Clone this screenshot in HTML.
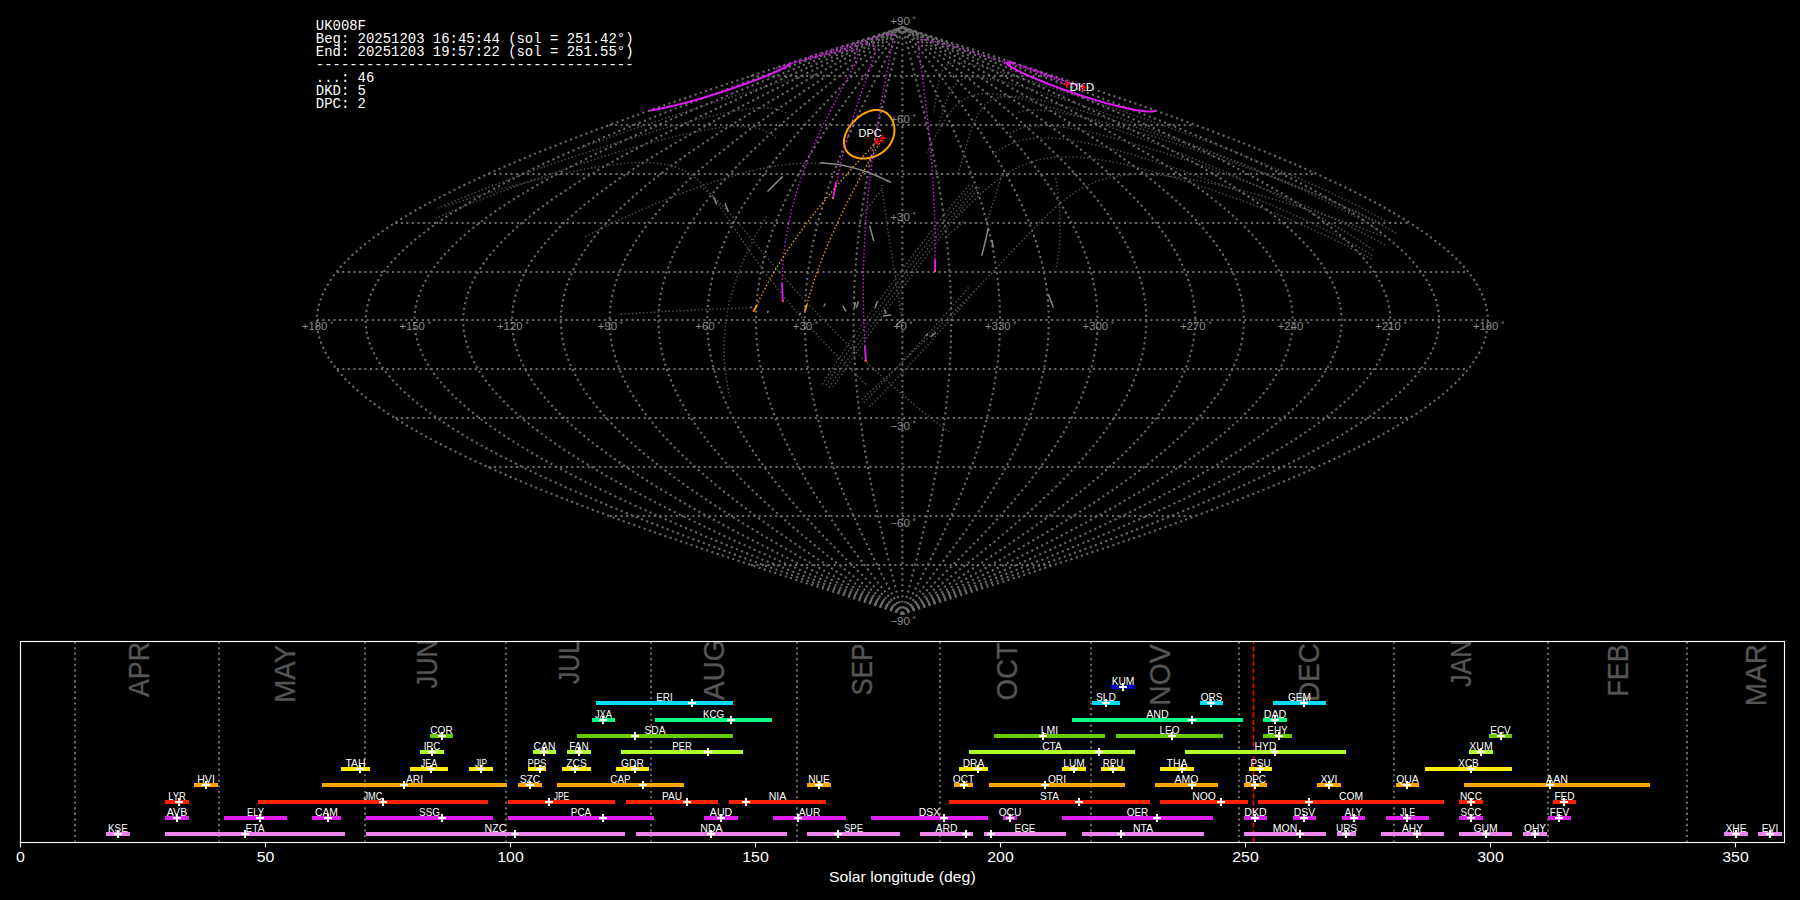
<!DOCTYPE html>
<html><head><meta charset="utf-8"><style>
html,body{margin:0;padding:0;background:#000;width:1800px;height:900px;overflow:hidden}
svg{display:block}
</style></head><body>
<svg width="1800" height="900" viewBox="0 0 1800 900">
<rect width="1800" height="900" fill="#000"/>
<g fill="none" stroke="#6c6c6c" stroke-width="2.083" stroke-dasharray="2.08 3.44">
<path d="M750.9 565L1053.9 565"/>
<path d="M609.6 516L1195.2 516"/>
<path d="M488.4 467L1316.4 467"/>
<path d="M395.3 418L1409.5 418"/>
<path d="M336.8 369L1468 369"/>
<path d="M316.9 320L1487.9 320"/>
<path d="M336.8 272L1468 272"/>
<path d="M395.3 223L1409.5 223"/>
<path d="M488.4 174L1316.4 174"/>
<path d="M609.6 125L1195.2 125"/>
<path d="M750.9 76L1053.9 76"/>
<path d="M902.4 613.9L917.7 609L933 604.1L948.3 599.2L963.6 594.3L978.8 589.5L994 584.6L1009.1 579.7L1024.1 574.8L1039.1 569.9L1053.9 565L1068.7 560.1L1083.3 555.2L1097.9 550.3L1112.2 545.4L1126.5 540.5L1140.6 535.7L1154.5 530.8L1168.2 525.9L1181.8 521L1195.2 516.1L1208.3 511.2L1221.3 506.3L1234.1 501.4L1246.6 496.5L1258.9 491.6L1270.9 486.8L1282.7 481.9L1294.2 477L1305.5 472.1L1316.4 467.2L1327.1 462.3L1337.5 457.4L1347.6 452.5L1357.5 447.6L1366.9 442.8L1376.1 437.9L1385 433L1393.5 428.1L1401.7 423.2L1409.5 418.3L1417 413.4L1424.1 408.5L1430.9 403.6L1437.3 398.7L1443.4 393.9L1449 389L1454.4 384.1L1459.3 379.2L1463.8 374.3L1468 369.4L1471.8 364.5L1475.1 359.6L1478.1 354.7L1480.7 349.8L1482.9 344.9L1484.7 340.1L1486.1 335.2L1487.1 330.3L1487.7 325.4L1487.9 320.5L1487.7 315.6L1487.1 310.7L1486.1 305.8L1484.7 300.9L1482.9 296.1L1480.7 291.2L1478.1 286.3L1475.1 281.4L1471.8 276.5L1468 271.6L1463.8 266.7L1459.3 261.8L1454.4 256.9L1449 252L1443.4 247.2L1437.3 242.3L1430.9 237.4L1424.1 232.5L1417 227.6L1409.5 222.7L1401.7 217.8L1393.5 212.9L1385 208L1376.1 203.1L1366.9 198.2L1357.5 193.4L1347.6 188.5L1337.5 183.6L1327.1 178.7L1316.4 173.8L1305.5 168.9L1294.2 164L1282.7 159.1L1270.9 154.2L1258.9 149.4L1246.6 144.5L1234.1 139.6L1221.3 134.7L1208.3 129.8L1195.2 124.9L1181.8 120L1168.2 115.1L1154.5 110.2L1140.6 105.3L1126.5 100.5L1112.2 95.6L1097.9 90.7L1083.3 85.8L1068.7 80.9L1053.9 76L1039.1 71.1L1024.1 66.2L1009.1 61.3L994 56.4L978.8 51.6L963.6 46.7L948.3 41.8L933 36.9L917.7 32L902.4 27.1"/>
<path d="M902.4 613.9L916.5 609L930.5 604.1L944.5 599.2L958.5 594.3L972.5 589.5L986.4 584.6L1000.2 579.7L1014 574.8L1027.7 569.9L1041.3 565L1054.8 560.1L1068.3 555.2L1081.6 550.3L1094.8 545.4L1107.8 540.5L1120.7 535.7L1133.5 530.8L1146.1 525.9L1158.5 521L1170.8 516.1L1182.8 511.2L1194.7 506.3L1206.4 501.4L1217.9 496.5L1229.1 491.6L1240.2 486.8L1251 481.9L1261.6 477L1271.9 472.1L1281.9 467.2L1291.7 462.3L1301.3 457.4L1310.5 452.5L1319.5 447.6L1328.2 442.8L1336.6 437.9L1344.7 433L1352.6 428.1L1360.1 423.2L1367.2 418.3L1374.1 413.4L1380.6 408.5L1386.9 403.6L1392.7 398.7L1398.3 393.9L1403.5 389L1408.4 384.1L1412.9 379.2L1417 374.3L1420.9 369.4L1424.3 364.5L1427.4 359.6L1430.2 354.7L1432.5 349.8L1434.6 344.9L1436.2 340.1L1437.5 335.2L1438.4 330.3L1439 325.4L1439.1 320.5L1439 315.6L1438.4 310.7L1437.5 305.8L1436.2 300.9L1434.6 296.1L1432.5 291.2L1430.2 286.3L1427.4 281.4L1424.3 276.5L1420.9 271.6L1417 266.7L1412.9 261.8L1408.4 256.9L1403.5 252L1398.3 247.2L1392.7 242.3L1386.9 237.4L1380.6 232.5L1374.1 227.6L1367.2 222.7L1360.1 217.8L1352.6 212.9L1344.7 208L1336.6 203.1L1328.2 198.2L1319.5 193.4L1310.5 188.5L1301.3 183.6L1291.7 178.7L1281.9 173.8L1271.9 168.9L1261.6 164L1251 159.1L1240.2 154.2L1229.1 149.4L1217.9 144.5L1206.4 139.6L1194.7 134.7L1182.8 129.8L1170.8 124.9L1158.5 120L1146.1 115.1L1133.5 110.2L1120.7 105.3L1107.8 100.5L1094.8 95.6L1081.6 90.7L1068.3 85.8L1054.8 80.9L1041.3 76L1027.7 71.1L1014 66.2L1000.2 61.3L986.4 56.4L972.5 51.6L958.5 46.7L944.5 41.8L930.5 36.9L916.5 32L902.4 27.1"/>
<path d="M902.4 613.9L915.2 609L927.9 604.1L940.7 599.2L953.4 594.3L966.1 589.5L978.7 584.6L991.3 579.7L1003.9 574.8L1016.3 569.9L1028.7 565L1041 560.1L1053.2 555.2L1065.3 550.3L1077.3 545.4L1089.1 540.5L1100.9 535.7L1112.5 530.8L1123.9 525.9L1135.2 521L1146.4 516.1L1157.4 511.2L1168.2 506.3L1178.8 501.4L1189.2 496.5L1199.4 491.6L1209.5 486.8L1219.3 481.9L1228.9 477L1238.3 472.1L1247.4 467.2L1256.3 462.3L1265 457.4L1273.4 452.5L1281.6 447.6L1289.5 442.8L1297.2 437.9L1304.5 433L1311.6 428.1L1318.4 423.2L1325 418.3L1331.2 413.4L1337.2 408.5L1342.8 403.6L1348.2 398.7L1353.2 393.9L1357.9 389L1362.4 384.1L1366.5 379.2L1370.3 374.3L1373.7 369.4L1376.9 364.5L1379.7 359.6L1382.2 354.7L1384.3 349.8L1386.2 344.9L1387.7 340.1L1388.8 335.2L1389.7 330.3L1390.2 325.4L1390.3 320.5L1390.2 315.6L1389.7 310.7L1388.8 305.8L1387.7 300.9L1386.2 296.1L1384.3 291.2L1382.2 286.3L1379.7 281.4L1376.9 276.5L1373.7 271.6L1370.3 266.7L1366.5 261.8L1362.4 256.9L1357.9 252L1353.2 247.2L1348.2 242.3L1342.8 237.4L1337.2 232.5L1331.2 227.6L1325 222.7L1318.4 217.8L1311.6 212.9L1304.5 208L1297.2 203.1L1289.5 198.2L1281.6 193.4L1273.4 188.5L1265 183.6L1256.3 178.7L1247.4 173.8L1238.3 168.9L1228.9 164L1219.3 159.1L1209.5 154.2L1199.4 149.4L1189.2 144.5L1178.8 139.6L1168.2 134.7L1157.4 129.8L1146.4 124.9L1135.2 120L1123.9 115.1L1112.5 110.2L1100.9 105.3L1089.1 100.5L1077.3 95.6L1065.3 90.7L1053.2 85.8L1041 80.9L1028.7 76L1016.3 71.1L1003.9 66.2L991.3 61.3L978.7 56.4L966.1 51.6L953.4 46.7L940.7 41.8L927.9 36.9L915.2 32L902.4 27.1"/>
<path d="M902.4 613.9L913.9 609L925.4 604.1L936.9 599.2L948.3 594.3L959.7 589.5L971.1 584.6L982.4 579.7L993.7 574.8L1004.9 569.9L1016.1 565L1027.1 560.1L1038.1 555.2L1049 550.3L1059.8 545.4L1070.5 540.5L1081 535.7L1091.5 530.8L1101.8 525.9L1111.9 521L1122 516.1L1131.9 511.2L1141.6 506.3L1151.1 501.4L1160.5 496.5L1169.7 491.6L1178.8 486.8L1187.6 481.9L1196.3 477L1204.7 472.1L1212.9 467.2L1221 462.3L1228.8 457.4L1236.3 452.5L1243.7 447.6L1250.8 442.8L1257.7 437.9L1264.3 433L1270.7 428.1L1276.8 423.2L1282.7 418.3L1288.3 413.4L1293.7 408.5L1298.8 403.6L1303.6 398.7L1308.1 393.9L1312.4 389L1316.4 384.1L1320.1 379.2L1323.5 374.3L1326.6 369.4L1329.4 364.5L1332 359.6L1334.2 354.7L1336.1 349.8L1337.8 344.9L1339.1 340.1L1340.2 335.2L1341 330.3L1341.4 325.4L1341.6 320.5L1341.4 315.6L1341 310.7L1340.2 305.8L1339.1 300.9L1337.8 296.1L1336.1 291.2L1334.2 286.3L1332 281.4L1329.4 276.5L1326.6 271.6L1323.5 266.7L1320.1 261.8L1316.4 256.9L1312.4 252L1308.1 247.2L1303.6 242.3L1298.8 237.4L1293.7 232.5L1288.3 227.6L1282.7 222.7L1276.8 217.8L1270.7 212.9L1264.3 208L1257.7 203.1L1250.8 198.2L1243.7 193.4L1236.3 188.5L1228.8 183.6L1221 178.7L1212.9 173.8L1204.7 168.9L1196.3 164L1187.6 159.1L1178.8 154.2L1169.7 149.4L1160.5 144.5L1151.1 139.6L1141.6 134.7L1131.9 129.8L1122 124.9L1111.9 120L1101.8 115.1L1091.5 110.2L1081 105.3L1070.5 100.5L1059.8 95.6L1049 90.7L1038.1 85.8L1027.1 80.9L1016.1 76L1004.9 71.1L993.7 66.2L982.4 61.3L971.1 56.4L959.7 51.6L948.3 46.7L936.9 41.8L925.4 36.9L913.9 32L902.4 27.1"/>
<path d="M902.4 613.9L912.6 609L922.8 604.1L933 599.2L943.2 594.3L953.4 589.5L963.5 584.6L973.5 579.7L983.6 574.8L993.5 569.9L1003.4 565L1013.3 560.1L1023 555.2L1032.7 550.3L1042.3 545.4L1051.8 540.5L1061.2 535.7L1070.5 530.8L1079.6 525.9L1088.7 521L1097.6 516.1L1106.4 511.2L1115 506.3L1123.5 501.4L1131.8 496.5L1140 491.6L1148.1 486.8L1155.9 481.9L1163.6 477L1171.1 472.1L1178.4 467.2L1185.6 462.3L1192.5 457.4L1199.2 452.5L1205.8 447.6L1212.1 442.8L1218.2 437.9L1224.1 433L1229.8 428.1L1235.2 423.2L1240.5 418.3L1245.5 413.4L1250.2 408.5L1254.7 403.6L1259 398.7L1263 393.9L1266.8 389L1270.4 384.1L1273.7 379.2L1276.7 374.3L1279.5 369.4L1282 364.5L1284.2 359.6L1286.2 354.7L1288 349.8L1289.4 344.9L1290.6 340.1L1291.6 335.2L1292.2 330.3L1292.6 325.4L1292.8 320.5L1292.6 315.6L1292.2 310.7L1291.6 305.8L1290.6 300.9L1289.4 296.1L1288 291.2L1286.2 286.3L1284.2 281.4L1282 276.5L1279.5 271.6L1276.7 266.7L1273.7 261.8L1270.4 256.9L1266.8 252L1263 247.2L1259 242.3L1254.7 237.4L1250.2 232.5L1245.5 227.6L1240.5 222.7L1235.2 217.8L1229.8 212.9L1224.1 208L1218.2 203.1L1212.1 198.2L1205.8 193.4L1199.2 188.5L1192.5 183.6L1185.6 178.7L1178.4 173.8L1171.1 168.9L1163.6 164L1155.9 159.1L1148.1 154.2L1140 149.4L1131.8 144.5L1123.5 139.6L1115 134.7L1106.4 129.8L1097.6 124.9L1088.7 120L1079.6 115.1L1070.5 110.2L1061.2 105.3L1051.8 100.5L1042.3 95.6L1032.7 90.7L1023 85.8L1013.3 80.9L1003.4 76L993.5 71.1L983.6 66.2L973.5 61.3L963.5 56.4L953.4 51.6L943.2 46.7L933 41.8L922.8 36.9L912.6 32L902.4 27.1"/>
<path d="M902.4 613.9L911.3 609L920.3 604.1L929.2 599.2L938.1 594.3L947 589.5L955.8 584.6L964.6 579.7L973.4 574.8L982.1 569.9L990.8 565L999.4 560.1L1007.9 555.2L1016.4 550.3L1024.8 545.4L1033.1 540.5L1041.3 535.7L1049.4 530.8L1057.5 525.9L1065.4 521L1073.2 516.1L1080.9 511.2L1088.4 506.3L1095.9 501.4L1103.2 496.5L1110.3 491.6L1117.4 486.8L1124.2 481.9L1131 477L1137.5 472.1L1143.9 467.2L1150.2 462.3L1156.2 457.4L1162.1 452.5L1167.8 447.6L1173.4 442.8L1178.7 437.9L1183.9 433L1188.9 428.1L1193.6 423.2L1198.2 418.3L1202.6 413.4L1206.7 408.5L1210.7 403.6L1214.4 398.7L1218 393.9L1221.3 389L1224.4 384.1L1227.2 379.2L1229.9 374.3L1232.3 369.4L1234.5 364.5L1236.5 359.6L1238.2 354.7L1239.8 349.8L1241 344.9L1242.1 340.1L1242.9 335.2L1243.5 330.3L1243.8 325.4L1244 320.5L1243.8 315.6L1243.5 310.7L1242.9 305.8L1242.1 300.9L1241 296.1L1239.8 291.2L1238.2 286.3L1236.5 281.4L1234.5 276.5L1232.3 271.6L1229.9 266.7L1227.2 261.8L1224.4 256.9L1221.3 252L1218 247.2L1214.4 242.3L1210.7 237.4L1206.7 232.5L1202.6 227.6L1198.2 222.7L1193.6 217.8L1188.9 212.9L1183.9 208L1178.7 203.1L1173.4 198.2L1167.8 193.4L1162.1 188.5L1156.2 183.6L1150.2 178.7L1143.9 173.8L1137.5 168.9L1131 164L1124.2 159.1L1117.4 154.2L1110.3 149.4L1103.2 144.5L1095.9 139.6L1088.4 134.7L1080.9 129.8L1073.2 124.9L1065.4 120L1057.5 115.1L1049.4 110.2L1041.3 105.3L1033.1 100.5L1024.8 95.6L1016.4 90.7L1007.9 85.8L999.4 80.9L990.8 76L982.1 71.1L973.4 66.2L964.6 61.3L955.8 56.4L947 51.6L938.1 46.7L929.2 41.8L920.3 36.9L911.3 32L902.4 27.1"/>
<path d="M902.4 613.9L910.1 609L917.7 604.1L925.4 599.2L933 594.3L940.6 589.5L948.2 584.6L955.8 579.7L963.3 574.8L970.7 569.9L978.2 565L985.6 560.1L992.9 555.2L1000.1 550.3L1007.3 545.4L1014.4 540.5L1021.5 535.7L1028.4 530.8L1035.3 525.9L1042.1 521L1048.8 516.1L1055.4 511.2L1061.9 506.3L1068.2 501.4L1074.5 496.5L1080.6 491.6L1086.6 486.8L1092.5 481.9L1098.3 477L1103.9 472.1L1109.4 467.2L1114.8 462.3L1120 457.4L1125 452.5L1129.9 447.6L1134.7 442.8L1139.3 437.9L1143.7 433L1147.9 428.1L1152 423.2L1155.9 418.3L1159.7 413.4L1163.3 408.5L1166.6 403.6L1169.9 398.7L1172.9 393.9L1175.7 389L1178.4 384.1L1180.8 379.2L1183.1 374.3L1185.2 369.4L1187.1 364.5L1188.8 359.6L1190.3 354.7L1191.6 349.8L1192.7 344.9L1193.6 340.1L1194.3 335.2L1194.8 330.3L1195.1 325.4L1195.2 320.5L1195.1 315.6L1194.8 310.7L1194.3 305.8L1193.6 300.9L1192.7 296.1L1191.6 291.2L1190.3 286.3L1188.8 281.4L1187.1 276.5L1185.2 271.6L1183.1 266.7L1180.8 261.8L1178.4 256.9L1175.7 252L1172.9 247.2L1169.9 242.3L1166.6 237.4L1163.3 232.5L1159.7 227.6L1155.9 222.7L1152 217.8L1147.9 212.9L1143.7 208L1139.3 203.1L1134.7 198.2L1129.9 193.4L1125 188.5L1120 183.6L1114.8 178.7L1109.4 173.8L1103.9 168.9L1098.3 164L1092.5 159.1L1086.6 154.2L1080.6 149.4L1074.5 144.5L1068.2 139.6L1061.9 134.7L1055.4 129.8L1048.8 124.9L1042.1 120L1035.3 115.1L1028.4 110.2L1021.5 105.3L1014.4 100.5L1007.3 95.6L1000.1 90.7L992.9 85.8L985.6 80.9L978.2 76L970.7 71.1L963.3 66.2L955.8 61.3L948.2 56.4L940.6 51.6L933 46.7L925.4 41.8L917.7 36.9L910.1 32L902.4 27.1"/>
<path d="M902.4 613.9L908.8 609L915.2 604.1L921.5 599.2L927.9 594.3L934.2 589.5L940.6 584.6L946.9 579.7L953.1 574.8L959.4 569.9L965.5 565L971.7 560.1L977.8 555.2L983.8 550.3L989.8 545.4L995.8 540.5L1001.6 535.7L1007.4 530.8L1013.2 525.9L1018.8 521L1024.4 516.1L1029.9 511.2L1035.3 506.3L1040.6 501.4L1045.8 496.5L1050.9 491.6L1055.9 486.8L1060.8 481.9L1065.7 477L1070.3 472.1L1074.9 467.2L1079.4 462.3L1083.7 457.4L1087.9 452.5L1092 447.6L1096 442.8L1099.8 437.9L1103.5 433L1107 428.1L1110.4 423.2L1113.7 418.3L1116.8 413.4L1119.8 408.5L1122.6 403.6L1125.3 398.7L1127.8 393.9L1130.2 389L1132.4 384.1L1134.4 379.2L1136.3 374.3L1138.1 369.4L1139.6 364.5L1141 359.6L1142.3 354.7L1143.4 349.8L1144.3 344.9L1145 340.1L1145.6 335.2L1146 330.3L1146.3 325.4L1146.4 320.5L1146.3 315.6L1146 310.7L1145.6 305.8L1145 300.9L1144.3 296.1L1143.4 291.2L1142.3 286.3L1141 281.4L1139.6 276.5L1138.1 271.6L1136.3 266.7L1134.4 261.8L1132.4 256.9L1130.2 252L1127.8 247.2L1125.3 242.3L1122.6 237.4L1119.8 232.5L1116.8 227.6L1113.7 222.7L1110.4 217.8L1107 212.9L1103.5 208L1099.8 203.1L1096 198.2L1092 193.4L1087.9 188.5L1083.7 183.6L1079.4 178.7L1074.9 173.8L1070.3 168.9L1065.7 164L1060.8 159.1L1055.9 154.2L1050.9 149.4L1045.8 144.5L1040.6 139.6L1035.3 134.7L1029.9 129.8L1024.4 124.9L1018.8 120L1013.2 115.1L1007.4 110.2L1001.6 105.3L995.8 100.5L989.8 95.6L983.8 90.7L977.8 85.8L971.7 80.9L965.5 76L959.4 71.1L953.1 66.2L946.9 61.3L940.6 56.4L934.2 51.6L927.9 46.7L921.5 41.8L915.2 36.9L908.8 32L902.4 27.1"/>
<path d="M902.4 613.9L907.5 609L912.6 604.1L917.7 599.2L922.8 594.3L927.9 589.5L932.9 584.6L938 579.7L943 574.8L948 569.9L952.9 565L957.8 560.1L962.7 555.2L967.6 550.3L972.3 545.4L977.1 540.5L981.8 535.7L986.4 530.8L991 525.9L995.5 521L1000 516.1L1004.4 511.2L1008.7 506.3L1013 501.4L1017.1 496.5L1021.2 491.6L1025.2 486.8L1029.2 481.9L1033 477L1036.8 472.1L1040.4 467.2L1044 462.3L1047.4 457.4L1050.8 452.5L1054.1 447.6L1057.2 442.8L1060.3 437.9L1063.3 433L1066.1 428.1L1068.8 423.2L1071.4 418.3L1073.9 413.4L1076.3 408.5L1078.6 403.6L1080.7 398.7L1082.7 393.9L1084.6 389L1086.4 384.1L1088 379.2L1089.5 374.3L1090.9 369.4L1092.2 364.5L1093.3 359.6L1094.3 354.7L1095.2 349.8L1095.9 344.9L1096.5 340.1L1097 335.2L1097.3 330.3L1097.5 325.4L1097.6 320.5L1097.5 315.6L1097.3 310.7L1097 305.8L1096.5 300.9L1095.9 296.1L1095.2 291.2L1094.3 286.3L1093.3 281.4L1092.2 276.5L1090.9 271.6L1089.5 266.7L1088 261.8L1086.4 256.9L1084.6 252L1082.7 247.2L1080.7 242.3L1078.6 237.4L1076.3 232.5L1073.9 227.6L1071.4 222.7L1068.8 217.8L1066.1 212.9L1063.3 208L1060.3 203.1L1057.2 198.2L1054.1 193.4L1050.8 188.5L1047.4 183.6L1044 178.7L1040.4 173.8L1036.8 168.9L1033 164L1029.2 159.1L1025.2 154.2L1021.2 149.4L1017.1 144.5L1013 139.6L1008.7 134.7L1004.4 129.8L1000 124.9L995.5 120L991 115.1L986.4 110.2L981.8 105.3L977.1 100.5L972.3 95.6L967.6 90.7L962.7 85.8L957.8 80.9L952.9 76L948 71.1L943 66.2L938 61.3L932.9 56.4L927.9 51.6L922.8 46.7L917.7 41.8L912.6 36.9L907.5 32L902.4 27.1"/>
<path d="M902.4 613.9L906.2 609L910.1 604.1L913.9 599.2L917.7 594.3L921.5 589.5L925.3 584.6L929.1 579.7L932.8 574.8L936.6 569.9L940.3 565L944 560.1L947.6 555.2L951.3 550.3L954.9 545.4L958.4 540.5L961.9 535.7L965.4 530.8L968.9 525.9L972.2 521L975.6 516.1L978.9 511.2L982.1 506.3L985.3 501.4L988.4 496.5L991.5 491.6L994.5 486.8L997.5 481.9L1000.4 477L1003.2 472.1L1005.9 467.2L1008.6 462.3L1011.2 457.4L1013.7 452.5L1016.2 447.6L1018.5 442.8L1020.8 437.9L1023 433L1025.2 428.1L1027.2 423.2L1029.2 418.3L1031 413.4L1032.8 408.5L1034.5 403.6L1036.1 398.7L1037.6 393.9L1039.1 389L1040.4 384.1L1041.6 379.2L1042.8 374.3L1043.8 369.4L1044.7 364.5L1045.6 359.6L1046.3 354.7L1047 349.8L1047.5 344.9L1048 340.1L1048.3 335.2L1048.6 330.3L1048.7 325.4L1048.8 320.5L1048.7 315.6L1048.6 310.7L1048.3 305.8L1048 300.9L1047.5 296.1L1047 291.2L1046.3 286.3L1045.6 281.4L1044.7 276.5L1043.8 271.6L1042.8 266.7L1041.6 261.8L1040.4 256.9L1039.1 252L1037.6 247.2L1036.1 242.3L1034.5 237.4L1032.8 232.5L1031 227.6L1029.2 222.7L1027.2 217.8L1025.2 212.9L1023 208L1020.8 203.1L1018.5 198.2L1016.2 193.4L1013.7 188.5L1011.2 183.6L1008.6 178.7L1005.9 173.8L1003.2 168.9L1000.4 164L997.5 159.1L994.5 154.2L991.5 149.4L988.4 144.5L985.3 139.6L982.1 134.7L978.9 129.8L975.6 124.9L972.2 120L968.9 115.1L965.4 110.2L961.9 105.3L958.4 100.5L954.9 95.6L951.3 90.7L947.6 85.8L944 80.9L940.3 76L936.6 71.1L932.8 66.2L929.1 61.3L925.3 56.4L921.5 51.6L917.7 46.7L913.9 41.8L910.1 36.9L906.2 32L902.4 27.1"/>
<path d="M902.4 613.9L905 609L907.5 604.1L910.1 599.2L912.6 594.3L915.1 589.5L917.7 584.6L920.2 579.7L922.7 574.8L925.2 569.9L927.7 565L930.1 560.1L932.6 555.2L935 550.3L937.4 545.4L939.7 540.5L942.1 535.7L944.4 530.8L946.7 525.9L949 521L951.2 516.1L953.4 511.2L955.6 506.3L957.7 501.4L959.8 496.5L961.8 491.6L963.8 486.8L965.8 481.9L967.7 477L969.6 472.1L971.4 467.2L973.2 462.3L974.9 457.4L976.6 452.5L978.2 447.6L979.8 442.8L981.4 437.9L982.8 433L984.2 428.1L985.6 423.2L986.9 418.3L988.2 413.4L989.4 408.5L990.5 403.6L991.6 398.7L992.6 393.9L993.5 389L994.4 384.1L995.2 379.2L996 374.3L996.7 369.4L997.3 364.5L997.9 359.6L998.4 354.7L998.8 349.8L999.2 344.9L999.5 340.1L999.7 335.2L999.9 330.3L1000 325.4L1000 320.5L1000 315.6L999.9 310.7L999.7 305.8L999.5 300.9L999.2 296.1L998.8 291.2L998.4 286.3L997.9 281.4L997.3 276.5L996.7 271.6L996 266.7L995.2 261.8L994.4 256.9L993.5 252L992.6 247.2L991.6 242.3L990.5 237.4L989.4 232.5L988.2 227.6L986.9 222.7L985.6 217.8L984.2 212.9L982.8 208L981.4 203.1L979.8 198.2L978.2 193.4L976.6 188.5L974.9 183.6L973.2 178.7L971.4 173.8L969.6 168.9L967.7 164L965.8 159.1L963.8 154.2L961.8 149.4L959.8 144.5L957.7 139.6L955.6 134.7L953.4 129.8L951.2 124.9L949 120L946.7 115.1L944.4 110.2L942.1 105.3L939.7 100.5L937.4 95.6L935 90.7L932.6 85.8L930.1 80.9L927.7 76L925.2 71.1L922.7 66.2L920.2 61.3L917.7 56.4L915.1 51.6L912.6 46.7L910.1 41.8L907.5 36.9L905 32L902.4 27.1"/>
<path d="M902.4 613.9L903.7 609L905 604.1L906.2 599.2L907.5 594.3L908.8 589.5L910 584.6L911.3 579.7L912.5 574.8L913.8 569.9L915 565L916.3 560.1L917.5 555.2L918.7 550.3L919.9 545.4L921.1 540.5L922.2 535.7L923.4 530.8L924.6 525.9L925.7 521L926.8 516.1L927.9 511.2L929 506.3L930 501.4L931.1 496.5L932.1 491.6L933.1 486.8L934.1 481.9L935.1 477L936 472.1L936.9 467.2L937.8 462.3L938.7 457.4L939.5 452.5L940.3 447.6L941.1 442.8L941.9 437.9L942.6 433L943.3 428.1L944 423.2L944.7 418.3L945.3 413.4L945.9 408.5L946.4 403.6L947 398.7L947.5 393.9L948 389L948.4 384.1L948.8 379.2L949.2 374.3L949.5 369.4L949.8 364.5L950.1 359.6L950.4 354.7L950.6 349.8L950.8 344.9L950.9 340.1L951 335.2L951.1 330.3L951.2 325.4L951.2 320.5L951.2 315.6L951.1 310.7L951 305.8L950.9 300.9L950.8 296.1L950.6 291.2L950.4 286.3L950.1 281.4L949.8 276.5L949.5 271.6L949.2 266.7L948.8 261.8L948.4 256.9L948 252L947.5 247.2L947 242.3L946.4 237.4L945.9 232.5L945.3 227.6L944.7 222.7L944 217.8L943.3 212.9L942.6 208L941.9 203.1L941.1 198.2L940.3 193.4L939.5 188.5L938.7 183.6L937.8 178.7L936.9 173.8L936 168.9L935.1 164L934.1 159.1L933.1 154.2L932.1 149.4L931.1 144.5L930 139.6L929 134.7L927.9 129.8L926.8 124.9L925.7 120L924.6 115.1L923.4 110.2L922.2 105.3L921.1 100.5L919.9 95.6L918.7 90.7L917.5 85.8L916.3 80.9L915 76L913.8 71.1L912.5 66.2L911.3 61.3L910 56.4L908.8 51.6L907.5 46.7L906.2 41.8L905 36.9L903.7 32L902.4 27.1"/>
<path d="M902.4 613.9L902.4 609L902.4 604.1L902.4 599.2L902.4 594.3L902.4 589.5L902.4 584.6L902.4 579.7L902.4 574.8L902.4 569.9L902.4 565L902.4 560.1L902.4 555.2L902.4 550.3L902.4 545.4L902.4 540.5L902.4 535.7L902.4 530.8L902.4 525.9L902.4 521L902.4 516.1L902.4 511.2L902.4 506.3L902.4 501.4L902.4 496.5L902.4 491.6L902.4 486.8L902.4 481.9L902.4 477L902.4 472.1L902.4 467.2L902.4 462.3L902.4 457.4L902.4 452.5L902.4 447.6L902.4 442.8L902.4 437.9L902.4 433L902.4 428.1L902.4 423.2L902.4 418.3L902.4 413.4L902.4 408.5L902.4 403.6L902.4 398.7L902.4 393.9L902.4 389L902.4 384.1L902.4 379.2L902.4 374.3L902.4 369.4L902.4 364.5L902.4 359.6L902.4 354.7L902.4 349.8L902.4 344.9L902.4 340.1L902.4 335.2L902.4 330.3L902.4 325.4L902.4 320.5L902.4 315.6L902.4 310.7L902.4 305.8L902.4 300.9L902.4 296.1L902.4 291.2L902.4 286.3L902.4 281.4L902.4 276.5L902.4 271.6L902.4 266.7L902.4 261.8L902.4 256.9L902.4 252L902.4 247.2L902.4 242.3L902.4 237.4L902.4 232.5L902.4 227.6L902.4 222.7L902.4 217.8L902.4 212.9L902.4 208L902.4 203.1L902.4 198.2L902.4 193.4L902.4 188.5L902.4 183.6L902.4 178.7L902.4 173.8L902.4 168.9L902.4 164L902.4 159.1L902.4 154.2L902.4 149.4L902.4 144.5L902.4 139.6L902.4 134.7L902.4 129.8L902.4 124.9L902.4 120L902.4 115.1L902.4 110.2L902.4 105.3L902.4 100.5L902.4 95.6L902.4 90.7L902.4 85.8L902.4 80.9L902.4 76L902.4 71.1L902.4 66.2L902.4 61.3L902.4 56.4L902.4 51.6L902.4 46.7L902.4 41.8L902.4 36.9L902.4 32L902.4 27.1"/>
<path d="M902.4 613.9L901.1 609L899.8 604.1L898.6 599.2L897.3 594.3L896 589.5L894.8 584.6L893.5 579.7L892.3 574.8L891 569.9L889.8 565L888.5 560.1L887.3 555.2L886.1 550.3L884.9 545.4L883.7 540.5L882.6 535.7L881.4 530.8L880.2 525.9L879.1 521L878 516.1L876.9 511.2L875.8 506.3L874.8 501.4L873.7 496.5L872.7 491.6L871.7 486.8L870.7 481.9L869.7 477L868.8 472.1L867.9 467.2L867 462.3L866.1 457.4L865.3 452.5L864.5 447.6L863.7 442.8L862.9 437.9L862.2 433L861.5 428.1L860.8 423.2L860.1 418.3L859.5 413.4L858.9 408.5L858.4 403.6L857.8 398.7L857.3 393.9L856.8 389L856.4 384.1L856 379.2L855.6 374.3L855.3 369.4L855 364.5L854.7 359.6L854.4 354.7L854.2 349.8L854 344.9L853.9 340.1L853.8 335.2L853.7 330.3L853.6 325.4L853.6 320.5L853.6 315.6L853.7 310.7L853.8 305.8L853.9 300.9L854 296.1L854.2 291.2L854.4 286.3L854.7 281.4L855 276.5L855.3 271.6L855.6 266.7L856 261.8L856.4 256.9L856.8 252L857.3 247.2L857.8 242.3L858.4 237.4L858.9 232.5L859.5 227.6L860.1 222.7L860.8 217.8L861.5 212.9L862.2 208L862.9 203.1L863.7 198.2L864.5 193.4L865.3 188.5L866.1 183.6L867 178.7L867.9 173.8L868.8 168.9L869.7 164L870.7 159.1L871.7 154.2L872.7 149.4L873.7 144.5L874.8 139.6L875.8 134.7L876.9 129.8L878 124.9L879.1 120L880.2 115.1L881.4 110.2L882.6 105.3L883.7 100.5L884.9 95.6L886.1 90.7L887.3 85.8L888.5 80.9L889.8 76L891 71.1L892.3 66.2L893.5 61.3L894.8 56.4L896 51.6L897.3 46.7L898.6 41.8L899.8 36.9L901.1 32L902.4 27.1"/>
<path d="M902.4 613.9L899.8 609L897.3 604.1L894.7 599.2L892.2 594.3L889.7 589.5L887.1 584.6L884.6 579.7L882.1 574.8L879.6 569.9L877.1 565L874.7 560.1L872.2 555.2L869.8 550.3L867.4 545.4L865.1 540.5L862.7 535.7L860.4 530.8L858.1 525.9L855.8 521L853.6 516.1L851.4 511.2L849.2 506.3L847.1 501.4L845 496.5L843 491.6L841 486.8L839 481.9L837.1 477L835.2 472.1L833.4 467.2L831.6 462.3L829.9 457.4L828.2 452.5L826.6 447.6L825 442.8L823.4 437.9L822 433L820.6 428.1L819.2 423.2L817.9 418.3L816.6 413.4L815.4 408.5L814.3 403.6L813.2 398.7L812.2 393.9L811.3 389L810.4 384.1L809.6 379.2L808.8 374.3L808.1 369.4L807.5 364.5L806.9 359.6L806.4 354.7L806 349.8L805.6 344.9L805.3 340.1L805.1 335.2L804.9 330.3L804.8 325.4L804.8 320.5L804.8 315.6L804.9 310.7L805.1 305.8L805.3 300.9L805.6 296.1L806 291.2L806.4 286.3L806.9 281.4L807.5 276.5L808.1 271.6L808.8 266.7L809.6 261.8L810.4 256.9L811.3 252L812.2 247.2L813.2 242.3L814.3 237.4L815.4 232.5L816.6 227.6L817.9 222.7L819.2 217.8L820.6 212.9L822 208L823.4 203.1L825 198.2L826.6 193.4L828.2 188.5L829.9 183.6L831.6 178.7L833.4 173.8L835.2 168.9L837.1 164L839 159.1L841 154.2L843 149.4L845 144.5L847.1 139.6L849.2 134.7L851.4 129.8L853.6 124.9L855.8 120L858.1 115.1L860.4 110.2L862.7 105.3L865.1 100.5L867.4 95.6L869.8 90.7L872.2 85.8L874.7 80.9L877.1 76L879.6 71.1L882.1 66.2L884.6 61.3L887.1 56.4L889.7 51.6L892.2 46.7L894.7 41.8L897.3 36.9L899.8 32L902.4 27.1"/>
<path d="M902.4 613.9L898.6 609L894.7 604.1L890.9 599.2L887.1 594.3L883.3 589.5L879.5 584.6L875.7 579.7L872 574.8L868.2 569.9L864.5 565L860.8 560.1L857.2 555.2L853.5 550.3L849.9 545.4L846.4 540.5L842.9 535.7L839.4 530.8L835.9 525.9L832.6 521L829.2 516.1L825.9 511.2L822.7 506.3L819.5 501.4L816.4 496.5L813.3 491.6L810.3 486.8L807.3 481.9L804.4 477L801.6 472.1L798.9 467.2L796.2 462.3L793.6 457.4L791.1 452.5L788.6 447.6L786.3 442.8L784 437.9L781.8 433L779.6 428.1L777.6 423.2L775.6 418.3L773.8 413.4L772 408.5L770.3 403.6L768.7 398.7L767.2 393.9L765.7 389L764.4 384.1L763.2 379.2L762 374.3L761 369.4L760.1 364.5L759.2 359.6L758.5 354.7L757.8 349.8L757.3 344.9L756.8 340.1L756.5 335.2L756.2 330.3L756.1 325.4L756 320.5L756.1 315.6L756.2 310.7L756.5 305.8L756.8 300.9L757.3 296.1L757.8 291.2L758.5 286.3L759.2 281.4L760.1 276.5L761 271.6L762 266.7L763.2 261.8L764.4 256.9L765.7 252L767.2 247.2L768.7 242.3L770.3 237.4L772 232.5L773.8 227.6L775.6 222.7L777.6 217.8L779.6 212.9L781.8 208L784 203.1L786.3 198.2L788.6 193.4L791.1 188.5L793.6 183.6L796.2 178.7L798.9 173.8L801.6 168.9L804.4 164L807.3 159.1L810.3 154.2L813.3 149.4L816.4 144.5L819.5 139.6L822.7 134.7L825.9 129.8L829.2 124.9L832.6 120L835.9 115.1L839.4 110.2L842.9 105.3L846.4 100.5L849.9 95.6L853.5 90.7L857.2 85.8L860.8 80.9L864.5 76L868.2 71.1L872 66.2L875.7 61.3L879.5 56.4L883.3 51.6L887.1 46.7L890.9 41.8L894.7 36.9L898.6 32L902.4 27.1"/>
<path d="M902.4 613.9L897.3 609L892.2 604.1L887.1 599.2L882 594.3L876.9 589.5L871.9 584.6L866.8 579.7L861.8 574.8L856.8 569.9L851.9 565L847 560.1L842.1 555.2L837.2 550.3L832.5 545.4L827.7 540.5L823 535.7L818.4 530.8L813.8 525.9L809.3 521L804.8 516.1L800.4 511.2L796.1 506.3L791.8 501.4L787.7 496.5L783.6 491.6L779.6 486.8L775.6 481.9L771.8 477L768 472.1L764.4 467.2L760.8 462.3L757.4 457.4L754 452.5L750.7 447.6L747.6 442.8L744.5 437.9L741.5 433L738.7 428.1L736 423.2L733.4 418.3L730.9 413.4L728.5 408.5L726.2 403.6L724.1 398.7L722.1 393.9L720.2 389L718.4 384.1L716.8 379.2L715.3 374.3L713.9 369.4L712.6 364.5L711.5 359.6L710.5 354.7L709.6 349.8L708.9 344.9L708.3 340.1L707.8 335.2L707.5 330.3L707.3 325.4L707.2 320.5L707.3 315.6L707.5 310.7L707.8 305.8L708.3 300.9L708.9 296.1L709.6 291.2L710.5 286.3L711.5 281.4L712.6 276.5L713.9 271.6L715.3 266.7L716.8 261.8L718.4 256.9L720.2 252L722.1 247.2L724.1 242.3L726.2 237.4L728.5 232.5L730.9 227.6L733.4 222.7L736 217.8L738.7 212.9L741.5 208L744.5 203.1L747.6 198.2L750.7 193.4L754 188.5L757.4 183.6L760.8 178.7L764.4 173.8L768 168.9L771.8 164L775.6 159.1L779.6 154.2L783.6 149.4L787.7 144.5L791.8 139.6L796.1 134.7L800.4 129.8L804.8 124.9L809.3 120L813.8 115.1L818.4 110.2L823 105.3L827.7 100.5L832.5 95.6L837.2 90.7L842.1 85.8L847 80.9L851.9 76L856.8 71.1L861.8 66.2L866.8 61.3L871.9 56.4L876.9 51.6L882 46.7L887.1 41.8L892.2 36.9L897.3 32L902.4 27.1"/>
<path d="M902.4 613.9L896 609L889.6 604.1L883.3 599.2L876.9 594.3L870.6 589.5L864.2 584.6L857.9 579.7L851.7 574.8L845.4 569.9L839.3 565L833.1 560.1L827 555.2L821 550.3L815 545.4L809 540.5L803.2 535.7L797.4 530.8L791.6 525.9L786 521L780.4 516.1L774.9 511.2L769.5 506.3L764.2 501.4L759 496.5L753.9 491.6L748.9 486.8L744 481.9L739.1 477L734.5 472.1L729.9 467.2L725.4 462.3L721.1 457.4L716.9 452.5L712.8 447.6L708.8 442.8L705 437.9L701.3 433L697.8 428.1L694.4 423.2L691.1 418.3L688 413.4L685 408.5L682.2 403.6L679.5 398.7L677 393.9L674.6 389L672.4 384.1L670.4 379.2L668.5 374.3L666.7 369.4L665.2 364.5L663.8 359.6L662.5 354.7L661.4 349.8L660.5 344.9L659.8 340.1L659.2 335.2L658.8 330.3L658.5 325.4L658.4 320.5L658.5 315.6L658.8 310.7L659.2 305.8L659.8 300.9L660.5 296.1L661.4 291.2L662.5 286.3L663.8 281.4L665.2 276.5L666.7 271.6L668.5 266.7L670.4 261.8L672.4 256.9L674.6 252L677 247.2L679.5 242.3L682.2 237.4L685 232.5L688 227.6L691.1 222.7L694.4 217.8L697.8 212.9L701.3 208L705 203.1L708.8 198.2L712.8 193.4L716.9 188.5L721.1 183.6L725.4 178.7L729.9 173.8L734.5 168.9L739.1 164L744 159.1L748.9 154.2L753.9 149.4L759 144.5L764.2 139.6L769.5 134.7L774.9 129.8L780.4 124.9L786 120L791.6 115.1L797.4 110.2L803.2 105.3L809 100.5L815 95.6L821 90.7L827 85.8L833.1 80.9L839.3 76L845.4 71.1L851.7 66.2L857.9 61.3L864.2 56.4L870.6 51.6L876.9 46.7L883.3 41.8L889.6 36.9L896 32L902.4 27.1"/>
<path d="M902.4 613.9L894.7 609L887.1 604.1L879.4 599.2L871.8 594.3L864.2 589.5L856.6 584.6L849 579.7L841.5 574.8L834.1 569.9L826.6 565L819.2 560.1L811.9 555.2L804.7 550.3L797.5 545.4L790.4 540.5L783.3 535.7L776.4 530.8L769.5 525.9L762.7 521L756 516.1L749.4 511.2L742.9 506.3L736.6 501.4L730.3 496.5L724.2 491.6L718.2 486.8L712.3 481.9L706.5 477L700.9 472.1L695.4 467.2L690 462.3L684.8 457.4L679.8 452.5L674.9 447.6L670.1 442.8L665.5 437.9L661.1 433L656.9 428.1L652.8 423.2L648.9 418.3L645.1 413.4L641.5 408.5L638.2 403.6L634.9 398.7L631.9 393.9L629.1 389L626.4 384.1L624 379.2L621.7 374.3L619.6 369.4L617.7 364.5L616 359.6L614.5 354.7L613.2 349.8L612.1 344.9L611.2 340.1L610.5 335.2L610 330.3L609.7 325.4L609.6 320.5L609.7 315.6L610 310.7L610.5 305.8L611.2 300.9L612.1 296.1L613.2 291.2L614.5 286.3L616 281.4L617.7 276.5L619.6 271.6L621.7 266.7L624 261.8L626.4 256.9L629.1 252L631.9 247.2L634.9 242.3L638.2 237.4L641.5 232.5L645.1 227.6L648.9 222.7L652.8 217.8L656.9 212.9L661.1 208L665.5 203.1L670.1 198.2L674.9 193.4L679.8 188.5L684.8 183.6L690 178.7L695.4 173.8L700.9 168.9L706.5 164L712.3 159.1L718.2 154.2L724.2 149.4L730.3 144.5L736.6 139.6L742.9 134.7L749.4 129.8L756 124.9L762.7 120L769.5 115.1L776.4 110.2L783.3 105.3L790.4 100.5L797.5 95.6L804.7 90.7L811.9 85.8L819.2 80.9L826.6 76L834.1 71.1L841.5 66.2L849 61.3L856.6 56.4L864.2 51.6L871.8 46.7L879.4 41.8L887.1 36.9L894.7 32L902.4 27.1"/>
<path d="M902.4 613.9L893.5 609L884.5 604.1L875.6 599.2L866.7 594.3L857.8 589.5L849 584.6L840.2 579.7L831.4 574.8L822.7 569.9L814 565L805.4 560.1L796.9 555.2L788.4 550.3L780 545.4L771.7 540.5L763.5 535.7L755.4 530.8L747.3 525.9L739.4 521L731.6 516.1L723.9 511.2L716.4 506.3L708.9 501.4L701.6 496.5L694.5 491.6L687.4 486.8L680.6 481.9L673.8 477L667.3 472.1L660.9 467.2L654.6 462.3L648.6 457.4L642.7 452.5L637 447.6L631.4 442.8L626.1 437.9L620.9 433L615.9 428.1L611.2 423.2L606.6 418.3L602.2 413.4L598.1 408.5L594.1 403.6L590.4 398.7L586.8 393.9L583.5 389L580.4 384.1L577.6 379.2L574.9 374.3L572.5 369.4L570.3 364.5L568.3 359.6L566.6 354.7L565 349.8L563.8 344.9L562.7 340.1L561.9 335.2L561.3 330.3L561 325.4L560.8 320.5L561 315.6L561.3 310.7L561.9 305.8L562.7 300.9L563.8 296.1L565 291.2L566.6 286.3L568.3 281.4L570.3 276.5L572.5 271.6L574.9 266.7L577.6 261.8L580.4 256.9L583.5 252L586.8 247.2L590.4 242.3L594.1 237.4L598.1 232.5L602.2 227.6L606.6 222.7L611.2 217.8L615.9 212.9L620.9 208L626.1 203.1L631.4 198.2L637 193.4L642.7 188.5L648.6 183.6L654.6 178.7L660.9 173.8L667.3 168.9L673.8 164L680.6 159.1L687.4 154.2L694.5 149.4L701.6 144.5L708.9 139.6L716.4 134.7L723.9 129.8L731.6 124.9L739.4 120L747.3 115.1L755.4 110.2L763.5 105.3L771.7 100.5L780 95.6L788.4 90.7L796.9 85.8L805.4 80.9L814 76L822.7 71.1L831.4 66.2L840.2 61.3L849 56.4L857.8 51.6L866.7 46.7L875.6 41.8L884.5 36.9L893.5 32L902.4 27.1"/>
<path d="M902.4 613.9L892.2 609L882 604.1L871.8 599.2L861.6 594.3L851.4 589.5L841.3 584.6L831.3 579.7L821.2 574.8L811.3 569.9L801.4 565L791.5 560.1L781.8 555.2L772.1 550.3L762.5 545.4L753 540.5L743.6 535.7L734.3 530.8L725.2 525.9L716.1 521L707.2 516.1L698.4 511.2L689.8 506.3L681.3 501.4L673 496.5L664.8 491.6L656.7 486.8L648.9 481.9L641.2 477L633.7 472.1L626.4 467.2L619.2 462.3L612.3 457.4L605.6 452.5L599 447.6L592.7 442.8L586.6 437.9L580.7 433L575 428.1L569.6 423.2L564.3 418.3L559.3 413.4L554.6 408.5L550.1 403.6L545.8 398.7L541.8 393.9L538 389L534.4 384.1L531.1 379.2L528.1 374.3L525.3 369.4L522.8 364.5L520.6 359.6L518.6 354.7L516.8 349.8L515.4 344.9L514.2 340.1L513.2 335.2L512.6 330.3L512.2 325.4L512 320.5L512.2 315.6L512.6 310.7L513.2 305.8L514.2 300.9L515.4 296.1L516.8 291.2L518.6 286.3L520.6 281.4L522.8 276.5L525.3 271.6L528.1 266.7L531.1 261.8L534.4 256.9L538 252L541.8 247.2L545.8 242.3L550.1 237.4L554.6 232.5L559.3 227.6L564.3 222.7L569.6 217.8L575 212.9L580.7 208L586.6 203.1L592.7 198.2L599 193.4L605.6 188.5L612.3 183.6L619.2 178.7L626.4 173.8L633.7 168.9L641.2 164L648.9 159.1L656.7 154.2L664.8 149.4L673 144.5L681.3 139.6L689.8 134.7L698.4 129.8L707.2 124.9L716.1 120L725.2 115.1L734.3 110.2L743.6 105.3L753 100.5L762.5 95.6L772.1 90.7L781.8 85.8L791.5 80.9L801.4 76L811.3 71.1L821.2 66.2L831.3 61.3L841.3 56.4L851.4 51.6L861.6 46.7L871.8 41.8L882 36.9L892.2 32L902.4 27.1"/>
<path d="M902.4 613.9L890.9 609L879.4 604.1L867.9 599.2L856.5 594.3L845.1 589.5L833.7 584.6L822.4 579.7L811.1 574.8L799.9 569.9L788.7 565L777.7 560.1L766.7 555.2L755.8 550.3L745 545.4L734.3 540.5L723.8 535.7L713.3 530.8L703 525.9L692.9 521L682.8 516.1L672.9 511.2L663.2 506.3L653.7 501.4L644.3 496.5L635.1 491.6L626 486.8L617.2 481.9L608.5 477L600.1 472.1L591.9 467.2L583.8 462.3L576 457.4L568.5 452.5L561.1 447.6L554 442.8L547.1 437.9L540.5 433L534.1 428.1L528 423.2L522.1 418.3L516.5 413.4L511.1 408.5L506 403.6L501.2 398.7L496.7 393.9L492.4 389L488.4 384.1L484.7 379.2L481.3 374.3L478.2 369.4L475.4 364.5L472.8 359.6L470.6 354.7L468.7 349.8L467 344.9L465.7 340.1L464.6 335.2L463.8 330.3L463.4 325.4L463.2 320.5L463.4 315.6L463.8 310.7L464.6 305.8L465.7 300.9L467 296.1L468.7 291.2L470.6 286.3L472.8 281.4L475.4 276.5L478.2 271.6L481.3 266.7L484.7 261.8L488.4 256.9L492.4 252L496.7 247.2L501.2 242.3L506 237.4L511.1 232.5L516.5 227.6L522.1 222.7L528 217.8L534.1 212.9L540.5 208L547.1 203.1L554 198.2L561.1 193.4L568.5 188.5L576 183.6L583.8 178.7L591.9 173.8L600.1 168.9L608.5 164L617.2 159.1L626 154.2L635.1 149.4L644.3 144.5L653.7 139.6L663.2 134.7L672.9 129.8L682.8 124.9L692.9 120L703 115.1L713.3 110.2L723.8 105.3L734.3 100.5L745 95.6L755.8 90.7L766.7 85.8L777.7 80.9L788.7 76L799.9 71.1L811.1 66.2L822.4 61.3L833.7 56.4L845.1 51.6L856.5 46.7L867.9 41.8L879.4 36.9L890.9 32L902.4 27.1"/>
<path d="M902.4 613.9L889.6 609L876.9 604.1L864.1 599.2L851.4 594.3L838.7 589.5L826.1 584.6L813.5 579.7L800.9 574.8L788.5 569.9L776.1 565L763.8 560.1L751.6 555.2L739.5 550.3L727.5 545.4L715.7 540.5L703.9 535.7L692.3 530.8L680.9 525.9L669.6 521L658.4 516.1L647.4 511.2L636.6 506.3L626 501.4L615.6 496.5L605.4 491.6L595.3 486.8L585.5 481.9L575.9 477L566.5 472.1L557.4 467.2L548.5 462.3L539.8 457.4L531.4 452.5L523.2 447.6L515.3 442.8L507.6 437.9L500.3 433L493.2 428.1L486.4 423.2L479.8 418.3L473.6 413.4L467.6 408.5L462 403.6L456.6 398.7L451.6 393.9L446.9 389L442.4 384.1L438.3 379.2L434.5 374.3L431.1 369.4L427.9 364.5L425.1 359.6L422.6 354.7L420.5 349.8L418.6 344.9L417.1 340.1L416 335.2L415.1 330.3L414.6 325.4L414.4 320.5L414.6 315.6L415.1 310.7L416 305.8L417.1 300.9L418.6 296.1L420.5 291.2L422.6 286.3L425.1 281.4L427.9 276.5L431.1 271.6L434.5 266.7L438.3 261.8L442.4 256.9L446.9 252L451.6 247.2L456.6 242.3L462 237.4L467.6 232.5L473.6 227.6L479.8 222.7L486.4 217.8L493.2 212.9L500.3 208L507.6 203.1L515.3 198.2L523.2 193.4L531.4 188.5L539.8 183.6L548.5 178.7L557.4 173.8L566.5 168.9L575.9 164L585.5 159.1L595.3 154.2L605.4 149.4L615.6 144.5L626 139.6L636.6 134.7L647.4 129.8L658.4 124.9L669.6 120L680.9 115.1L692.3 110.2L703.9 105.3L715.7 100.5L727.5 95.6L739.5 90.7L751.6 85.8L763.8 80.9L776.1 76L788.5 71.1L800.9 66.2L813.5 61.3L826.1 56.4L838.7 51.6L851.4 46.7L864.1 41.8L876.9 36.9L889.6 32L902.4 27.1"/>
<path d="M902.4 613.9L888.3 609L874.3 604.1L860.3 599.2L846.3 594.3L832.3 589.5L818.4 584.6L804.6 579.7L790.8 574.8L777.1 569.9L763.5 565L750 560.1L736.5 555.2L723.2 550.3L710 545.4L697 540.5L684.1 535.7L671.3 530.8L658.7 525.9L646.3 521L634 516.1L622 511.2L610.1 506.3L598.4 501.4L586.9 496.5L575.7 491.6L564.6 486.8L553.8 481.9L543.2 477L532.9 472.1L522.9 467.2L513.1 462.3L503.5 457.4L494.3 452.5L485.3 447.6L476.6 442.8L468.2 437.9L460.1 433L452.2 428.1L444.7 423.2L437.6 418.3L430.7 413.4L424.2 408.5L417.9 403.6L412.1 398.7L406.5 393.9L401.3 389L396.4 384.1L391.9 379.2L387.8 374.3L383.9 369.4L380.5 364.5L377.4 359.6L374.6 354.7L372.3 349.8L370.2 344.9L368.6 340.1L367.3 335.2L366.4 330.3L365.8 325.4L365.7 320.5L365.8 315.6L366.4 310.7L367.3 305.8L368.6 300.9L370.2 296.1L372.3 291.2L374.6 286.3L377.4 281.4L380.5 276.5L383.9 271.6L387.8 266.7L391.9 261.8L396.4 256.9L401.3 252L406.5 247.2L412.1 242.3L417.9 237.4L424.2 232.5L430.7 227.6L437.6 222.7L444.7 217.8L452.2 212.9L460.1 208L468.2 203.1L476.6 198.2L485.3 193.4L494.3 188.5L503.5 183.6L513.1 178.7L522.9 173.8L532.9 168.9L543.2 164L553.8 159.1L564.6 154.2L575.7 149.4L586.9 144.5L598.4 139.6L610.1 134.7L622 129.8L634 124.9L646.3 120L658.7 115.1L671.3 110.2L684.1 105.3L697 100.5L710 95.6L723.2 90.7L736.5 85.8L750 80.9L763.5 76L777.1 71.1L790.8 66.2L804.6 61.3L818.4 56.4L832.3 51.6L846.3 46.7L860.3 41.8L874.3 36.9L888.3 32L902.4 27.1"/>
<path d="M902.4 613.9L887.1 609L871.8 604.1L856.5 599.2L841.2 594.3L826 589.5L810.8 584.6L795.7 579.7L780.7 574.8L765.7 569.9L750.9 565L736.1 560.1L721.5 555.2L706.9 550.3L692.6 545.4L678.3 540.5L664.2 535.7L650.3 530.8L636.6 525.9L623 521L609.6 516.1L596.5 511.2L583.5 506.3L570.7 501.4L558.2 496.5L545.9 491.6L533.9 486.8L522.1 481.9L510.6 477L499.3 472.1L488.4 467.2L477.7 462.3L467.3 457.4L457.2 452.5L447.3 447.6L437.9 442.8L428.7 437.9L419.8 433L411.3 428.1L403.1 423.2L395.3 418.3L387.8 413.4L380.7 408.5L373.9 403.6L367.5 398.7L361.4 393.9L355.8 389L350.4 384.1L345.5 379.2L341 374.3L336.8 369.4L333 364.5L329.7 359.6L326.7 354.7L324.1 349.8L321.9 344.9L320.1 340.1L318.7 335.2L317.7 330.3L317.1 325.4L316.9 320.5L317.1 315.6L317.7 310.7L318.7 305.8L320.1 300.9L321.9 296.1L324.1 291.2L326.7 286.3L329.7 281.4L333 276.5L336.8 271.6L341 266.7L345.5 261.8L350.4 256.9L355.8 252L361.4 247.2L367.5 242.3L373.9 237.4L380.7 232.5L387.8 227.6L395.3 222.7L403.1 217.8L411.3 212.9L419.8 208L428.7 203.1L437.9 198.2L447.3 193.4L457.2 188.5L467.3 183.6L477.7 178.7L488.4 173.8L499.3 168.9L510.6 164L522.1 159.1L533.9 154.2L545.9 149.4L558.2 144.5L570.7 139.6L583.5 134.7L596.5 129.8L609.6 124.9L623 120L636.6 115.1L650.3 110.2L664.2 105.3L678.3 100.5L692.6 95.6L706.9 90.7L721.5 85.8L736.1 80.9L750.9 76L765.7 71.1L780.7 66.2L795.7 61.3L810.8 56.4L826 51.6L841.2 46.7L856.5 41.8L871.8 36.9L887.1 32L902.4 27.1"/>
</g>
<text x="1472.9" y="330.2" font-size="10.58" fill="#8c8c8c" text-anchor="start" font-family="Liberation Sans" textLength="25.54" lengthAdjust="spacingAndGlyphs">+180</text>
<circle cx="1502.9" cy="322.6" r="0.85" fill="none" stroke="#8c8c8c" stroke-width="0.8"/>
<text x="1375.3" y="330.2" font-size="10.58" fill="#8c8c8c" text-anchor="start" font-family="Liberation Sans" textLength="25.54" lengthAdjust="spacingAndGlyphs">+210</text>
<circle cx="1405.3" cy="322.6" r="0.85" fill="none" stroke="#8c8c8c" stroke-width="0.8"/>
<text x="1277.7" y="330.2" font-size="10.58" fill="#8c8c8c" text-anchor="start" font-family="Liberation Sans" textLength="25.54" lengthAdjust="spacingAndGlyphs">+240</text>
<circle cx="1307.7" cy="322.6" r="0.85" fill="none" stroke="#8c8c8c" stroke-width="0.8"/>
<text x="1180.1" y="330.2" font-size="10.58" fill="#8c8c8c" text-anchor="start" font-family="Liberation Sans" textLength="25.54" lengthAdjust="spacingAndGlyphs">+270</text>
<circle cx="1210.2" cy="322.6" r="0.85" fill="none" stroke="#8c8c8c" stroke-width="0.8"/>
<text x="1082.6" y="330.2" font-size="10.58" fill="#8c8c8c" text-anchor="start" font-family="Liberation Sans" textLength="25.54" lengthAdjust="spacingAndGlyphs">+300</text>
<circle cx="1112.6" cy="322.6" r="0.85" fill="none" stroke="#8c8c8c" stroke-width="0.8"/>
<text x="985" y="330.2" font-size="10.58" fill="#8c8c8c" text-anchor="start" font-family="Liberation Sans" textLength="25.54" lengthAdjust="spacingAndGlyphs">+330</text>
<circle cx="1015" cy="322.6" r="0.85" fill="none" stroke="#8c8c8c" stroke-width="0.8"/>
<text x="893.3" y="330.2" font-size="10.58" fill="#8c8c8c" text-anchor="start" font-family="Liberation Sans" textLength="13.71" lengthAdjust="spacingAndGlyphs">+0</text>
<circle cx="911" cy="322.6" r="0.85" fill="none" stroke="#8c8c8c" stroke-width="0.8"/>
<text x="792.7" y="330.2" font-size="10.58" fill="#8c8c8c" text-anchor="start" font-family="Liberation Sans" textLength="19.63" lengthAdjust="spacingAndGlyphs">+30</text>
<circle cx="816.6" cy="322.6" r="0.85" fill="none" stroke="#8c8c8c" stroke-width="0.8"/>
<text x="695.2" y="330.2" font-size="10.58" fill="#8c8c8c" text-anchor="start" font-family="Liberation Sans" textLength="19.63" lengthAdjust="spacingAndGlyphs">+60</text>
<circle cx="719" cy="322.6" r="0.85" fill="none" stroke="#8c8c8c" stroke-width="0.8"/>
<text x="597.6" y="330.2" font-size="10.58" fill="#8c8c8c" text-anchor="start" font-family="Liberation Sans" textLength="19.63" lengthAdjust="spacingAndGlyphs">+90</text>
<circle cx="621.4" cy="322.6" r="0.85" fill="none" stroke="#8c8c8c" stroke-width="0.8"/>
<text x="497" y="330.2" font-size="10.58" fill="#8c8c8c" text-anchor="start" font-family="Liberation Sans" textLength="25.54" lengthAdjust="spacingAndGlyphs">+120</text>
<circle cx="527" cy="322.6" r="0.85" fill="none" stroke="#8c8c8c" stroke-width="0.8"/>
<text x="399.4" y="330.2" font-size="10.58" fill="#8c8c8c" text-anchor="start" font-family="Liberation Sans" textLength="25.54" lengthAdjust="spacingAndGlyphs">+150</text>
<circle cx="429.4" cy="322.6" r="0.85" fill="none" stroke="#8c8c8c" stroke-width="0.8"/>
<text x="301.8" y="330.2" font-size="10.58" fill="#8c8c8c" text-anchor="start" font-family="Liberation Sans" textLength="25.54" lengthAdjust="spacingAndGlyphs">+180</text>
<circle cx="331.8" cy="322.6" r="0.85" fill="none" stroke="#8c8c8c" stroke-width="0.8"/>
<text x="890.3" y="25.3" font-size="10.58" fill="#8c8c8c" text-anchor="start" font-family="Liberation Sans" textLength="19.63" lengthAdjust="spacingAndGlyphs">+90</text>
<circle cx="914.2" cy="17.7" r="0.85" fill="none" stroke="#8c8c8c" stroke-width="0.8"/>
<text x="890.3" y="123.1" font-size="10.58" fill="#8c8c8c" text-anchor="start" font-family="Liberation Sans" textLength="19.63" lengthAdjust="spacingAndGlyphs">+60</text>
<circle cx="914.2" cy="115.5" r="0.85" fill="none" stroke="#8c8c8c" stroke-width="0.8"/>
<text x="890.3" y="220.9" font-size="10.58" fill="#8c8c8c" text-anchor="start" font-family="Liberation Sans" textLength="19.63" lengthAdjust="spacingAndGlyphs">+30</text>
<circle cx="914.2" cy="213.3" r="0.85" fill="none" stroke="#8c8c8c" stroke-width="0.8"/>
<text x="890.3" y="429.5" font-size="10.58" fill="#8c8c8c" text-anchor="start" font-family="Liberation Sans" textLength="19.63" lengthAdjust="spacingAndGlyphs">−30</text>
<circle cx="914.2" cy="421.9" r="0.85" fill="none" stroke="#8c8c8c" stroke-width="0.8"/>
<text x="890.3" y="527.3" font-size="10.58" fill="#8c8c8c" text-anchor="start" font-family="Liberation Sans" textLength="19.63" lengthAdjust="spacingAndGlyphs">−60</text>
<circle cx="914.2" cy="519.7" r="0.85" fill="none" stroke="#8c8c8c" stroke-width="0.8"/>
<text x="890.3" y="625.1" font-size="10.58" fill="#8c8c8c" text-anchor="start" font-family="Liberation Sans" textLength="19.63" lengthAdjust="spacingAndGlyphs">−90</text>
<circle cx="914.2" cy="617.5" r="0.85" fill="none" stroke="#8c8c8c" stroke-width="0.8"/>
<g>
<path d="M819.6 163.6L818.1 163.5L816.5 163.4L814.9 163.3L813.3 163.3L811.7 163.2L810.1 163.2L808.4 163.2L806.8 163.2L805.2 163.2L803.5 163.3L801.9 163.3L800.2 163.4L798.5 163.5L796.8 163.6L795.1 163.7L793.4 163.8L791.7 163.9L790 164.1L788.2 164.3L786.5 164.5L784.7 164.7L782.9 164.9L781.1 165.2L779.3 165.4L777.5 165.7L775.7 166L773.9 166.3L772.1 166.6L770.2 166.9L768.4 167.3L766.5 167.6L764.6 168L762.7 168.4L760.8 168.8L758.9 169.2L757 169.6L755 170.1L753.1 170.6L751.1 171L749.2 171.5L747.2 172L745.2 172.5L743.2 173L741.2 173.6L739.2 174.1L737.2 174.7L735.1 175.3L733.1 175.9L731.1 176.5L729 177.1L726.9 177.7L724.8 178.3L722.8 179L720.7 179.7L718.6 180.3L716.5 181L714.3 181.7L712.2 182.4L710.1 183.1L707.9 183.8L705.8 184.6L703.7 185.3L701.5 186.1L699.3 186.8L697.2 187.6L695 188.4L692.8 189.2L690.6 190L688.4 190.8L686.2 191.6L684 192.5L681.8 193.3L679.6 194.1L677.4 195L675.2 195.9L673 196.7L670.8 197.6L668.6 198.5L666.3 199.4L664.1 200.3L661.9 201.2L659.7 202.1L657.4 203L655.2 204L653 204.9L650.7 205.9L648.5 206.8L646.3 207.8L644.1 208.7L641.8 209.7L639.6 210.7L637.4 211.7L635.2 212.7L632.9 213.6L630.7 214.6L628.5 215.7L626.3 216.7L624.1 217.7L621.9 218.7L619.7 219.7L617.5 220.8L615.3 221.8L613.1 222.9L610.9 223.9L608.7 225L606.6 226L604.4 227.1L602.2 228.1L600.1 229.2L597.9 230.3L595.8 231.4L593.6 232.5L591.5 233.5L589.4 234.6L587.3 235.7L585.2 236.8" fill="none" stroke="#555555" stroke-width="1.39" stroke-dasharray="1.39 2.29"/>
<path d="M866 384.2L864.7 383L863.5 381.8L862.3 380.7L861.1 379.5L859.9 378.3L858.6 377.2L857.4 376L856.2 374.8L855 373.6L853.8 372.4L852.6 371.3L851.4 370.1L850.2 368.9L849 367.7L847.8 366.5L846.6 365.3L845.4 364.1L844.2 362.9L843 361.7L841.8 360.6L840.6 359.4L839.4 358.2L838.2 357L837.1 355.7L835.9 354.5L834.7 353.3L833.5 352.1L832.4 350.9L831.2 349.7L830 348.5L828.9 347.3L827.7 346.1L826.6 344.9L825.4 343.7L824.3 342.4L823.1 341.2L822 340L820.8 338.8L819.7 337.6L818.6 336.4L817.5 335.2L816.3 333.9L815.2 332.7L814.1 331.5L813 330.3L811.9 329.1L810.8 327.8L809.7 326.6L808.6 325.4L807.5 324.2L806.4 323L805.3 321.7L804.2 320.5L803.1 319.3L802.1 318.1L801 316.9L799.9 315.6L798.9 314.4L797.8 313.2L796.8 312L795.7 310.8L794.7 309.5L793.7 308.3L792.6 307.1L791.6 305.9L790.6 304.7L789.6 303.4L788.5 302.2L787.5 301L786.5 299.8L785.5 298.6L784.5 297.4L783.5 296.2L782.6 294.9L781.6 293.7L780.6 292.5L779.6 291.3L778.7 290.1L777.7 288.9L776.8 287.7L775.8 286.5L774.9 285.3L773.9 284.1L773 282.9L772.1 281.7L771.1 280.5L770.2 279.3L769.3 278.1L768.4 276.9L767.5 275.7L766.6 274.5L765.7 273.3L764.8 272.1L763.9 271L763.1 269.8L762.2 268.6L761.3 267.4L760.5 266.2L759.6 265.1L758.8 263.9L757.9 262.7L757.1 261.5L756.2 260.4L755.4 259.2L754.6 258L753.8 256.9L753 255.7L752.1 254.6L751.3 253.4L750.5 252.3L749.7 251.1L749 250L748.2 248.8L747.4 247.7L746.6 246.6L745.8 245.4L745.1 244.3L744.3 243.2L743.6 242L742.8 240.9L742.1 239.8L741.3 238.7L740.6 237.6L739.8 236.5L739.1 235.4L738.4 234.3L737.6 233.2L736.9 232.1L736.2 231L735.5 229.9L734.8 228.9L734.1 227.8L733.4 226.7L732.7 225.7L732 224.6L731.3 223.5L730.6 222.5L729.9 221.4L729.2 220.4L728.6 219.4L727.9 218.3L727.2 217.3L726.5 216.3L725.9 215.3L725.2 214.3L724.5 213.3L723.8 212.3L723.2 211.3L722.5 210.3L721.9 209.3L721.2 208.3L720.5 207.4L719.9 206.4L719.2 205.4L718.5 204.5L717.9 203.6L717.2 202.6L716.6 201.7L715.9 200.8L715.2 199.9L714.6 199L713.9 198.1L713.2 197.2L712.6 196.3L711.9 195.4L711.2 194.5L710.5 193.7L709.9 192.8L709.2 192L708.5 191.2L707.8 190.3L707.1 189.5L706.4 188.7L705.7 187.9L705 187.1L704.3 186.4L703.6 185.6L702.8 184.8L702.1 184.1L701.4 183.3L700.6 182.6L699.9 181.9L699.1 181.2L698.4 180.5L697.6 179.8L696.8 179.1L696 178.5L695.2 177.8L694.4 177.2L693.6 176.5L692.7 175.9L691.9 175.3L691 174.7L690.2 174.2L689.3 173.6L688.4 173L687.5 172.5L686.6 172L685.7 171.4L684.7 170.9L683.8 170.4L682.8 170L681.8 169.5L680.8 169L679.8 168.6L678.7 168.2L677.7 167.8L676.6 167.4L675.5 167L674.4 166.6L673.3 166.3L672.1 166L671 165.6L669.8 165.3L668.6 165L667.4 164.8L666.1 164.5L664.9 164.3L663.6 164L662.3 163.8L660.9 163.6L659.6 163.4L658.2 163.3L656.8 163.1L655.4 163L654 162.9L652.5 162.8L651 162.7L649.5 162.6L647.9 162.5L646.4 162.5L644.8 162.5L643.2 162.5L641.5 162.5L639.9 162.5L638.2 162.5L636.5 162.6L634.7 162.7L632.9 162.8L631.2 162.9L629.3 163L627.5 163.1L625.6 163.3L623.7 163.4L621.8 163.6L619.8 163.8L617.9 164L615.9 164.3L613.8 164.5L611.8 164.8L609.7 165.1L607.6 165.3L605.5 165.7L603.3 166L601.1 166.3L598.9 166.7L596.7 167L594.5 167.4L592.2 167.8L589.9 168.2L587.6 168.6L585.2 169.1L582.8 169.5L580.4 170L578 170.5L575.6 171L573.1 171.5L570.7 172L568.2 172.5L565.6 173.1L563.1 173.6L560.5 174.2L557.9 174.8L555.3 175.4L552.7 176L550.1 176.6L547.4 177.2L544.8 177.9L542.1 178.5L539.4 179.2L536.7 179.8L533.9 180.5L531.2 181.2L528.4 181.9L525.6 182.7L522.8 183.4L520 184.1L517.2 184.9L514.4 185.6L511.5 186.4L508.7 187.2L505.8 188L503 188.8L500.1 189.6L497.2 190.4L494.3 191.2L491.4 192.1L488.5 192.9L485.5 193.7L482.6 194.6L479.7 195.5L476.7 196.3L473.8 197.2L470.9 198.1L467.9 199L465 199.9L462 200.8L459 201.8L456.1 202.7L453.1 203.6L450.2 204.6L447.2 205.5L444.2 206.5" fill="none" stroke="#555555" stroke-width="1.39" stroke-dasharray="1.39 2.29"/>
<path d="M786.1 113L785.2 112.5L784.3 112L783.3 111.5L782.4 111.1L781.3 110.6L780.3 110.3L779.2 109.9L778 109.6L776.9 109.3L775.7 109L774.4 108.8L773.1 108.5L771.7 108.4L770.3 108.2L768.9 108.1L767.4 108L765.9 107.9L764.3 107.9L762.7 107.9L761 108L759.2 108L757.4 108.1L755.6 108.2L753.7 108.4L751.8 108.6L749.8 108.8L747.7 109L745.6 109.3L743.5 109.6L741.3 110L739 110.3L736.7 110.7L734.4 111.1L732 111.6L729.5 112.1L727 112.6L724.4 113.1L721.8 113.7L719.2 114.2L716.5 114.8L713.8 115.5L711 116.1L708.2 116.8L705.3 117.5L702.4 118.2L699.4 118.9L696.4 119.7L693.4 120.5L690.3 121.3L687.2 122.1L684.1 123L680.9 123.8L677.7 124.7L674.5 125.6L671.2 126.5L667.9 127.4L664.6 128.4L661.2 129.3L657.9 130.3L654.5 131.3L651 132.3L647.6 133.3L644.1 134.3L640.6 135.4L637.1 136.5L633.6 137.5L630 138.6L626.5 139.7L622.9 140.8L619.3 141.9L615.7 143L612.1 144.2L608.5 145.3L604.9 146.5L601.2 147.7L597.6 148.8L593.9 150L590.3 151.2L586.6 152.4L582.9 153.6L579.2 154.8L575.6 156.1L571.9 157.3L568.2 158.5L564.5 159.8L560.8 161.1L557.2 162.3L553.5 163.6L549.8 164.9L546.1 166.1L542.5 167.4L538.8 168.7L535.2 170L531.5 171.3L527.9 172.6L524.3 173.9L520.6 175.3L517 176.6L513.4 177.9L509.8 179.2L506.2 180.6L502.7 181.9L499.1 183.3L495.6 184.6L492 186L488.5 187.3L485 188.7L481.5 190.1L478.1 191.4L474.6 192.8L471.2 194.2L467.7 195.6L464.3 196.9L461 198.3L457.6 199.7L454.2 201.1L450.9 202.5L447.6 203.9L444.3 205.3L441.1 206.7L437.8 208.1" fill="none" stroke="#555555" stroke-width="1.39" stroke-dasharray="1.39 2.29"/>
<path d="M776.1 138.1L775.3 137.4L774.5 136.8L773.6 136.1L772.8 135.5L771.9 134.9L771 134.3L770.1 133.7L769.2 133.1L768.3 132.6L767.3 132.1L766.3 131.6L765.3 131.1L764.3 130.7L763.2 130.2L762.1 129.8L761 129.4L759.9 129.1L758.7 128.7L757.5 128.4L756.3 128.1L755 127.8L753.8 127.6L752.4 127.4L751.1 127.2L749.7 127L748.3 126.8L746.8 126.7L745.4 126.6L743.9 126.5L742.3 126.5L740.7 126.4L739.1 126.4L737.4 126.4L735.7 126.5L734 126.5L732.2 126.6L730.4 126.7L728.6 126.9L726.7 127L724.8 127.2L722.8 127.4L720.8 127.7L718.8 127.9L716.7 128.2L714.6 128.5L712.5 128.8L710.3 129.2L708 129.5L705.8 129.9L703.5 130.4L701.1 130.8L698.8 131.3L696.4 131.7L693.9 132.2L691.5 132.8L688.9 133.3L686.4 133.9L683.8 134.4L681.2 135L678.6 135.7L675.9 136.3L673.2 137L670.5 137.6L667.7 138.3L664.9 139L662.1 139.8L659.2 140.5L656.4 141.3L653.5 142L650.5 142.8L647.6 143.6L644.6 144.5L641.6 145.3L638.6 146.1L635.5 147L632.5 147.9L629.4 148.8L626.3 149.7L623.2 150.6L620 151.5L616.9 152.5L613.7 153.4L610.5 154.4L607.3 155.4L604.1 156.4L600.9 157.4L597.7 158.4L594.4 159.4L591.2 160.4L587.9 161.5L584.6 162.5L581.3 163.6L578.1 164.7L574.8 165.8L571.5 166.8L568.1 167.9L564.8 169L561.5 170.2L558.2 171.3L554.9 172.4L551.6 173.5L548.2 174.7L544.9 175.8L541.6 177L538.3 178.2L534.9 179.3L531.6 180.5L528.3 181.7L525 182.9L521.7 184.1L518.4 185.3L515.1 186.5L511.8 187.7L508.5 188.9L505.2 190.2L502 191.4L498.7 192.6L495.5 193.9L492.2 195.1L489 196.4L485.8 197.6L482.5 198.9L479.3 200.2L476.2 201.4L473 202.7L469.8 204L466.7 205.3L463.5 206.6L460.4 207.8L457.3 209.1L454.2 210.4L451.1 211.7L448.1 213L445.1 214.3L442 215.7L439 217L436 218.3" fill="none" stroke="#555555" stroke-width="1.39" stroke-dasharray="1.39 2.29"/>
<path d="M821.8 73.5L819.7 73.7L817.6 74L815.4 74.3L813.1 74.7L810.7 75.2L808.2 75.7L805.6 76.2L802.9 76.8L800.1 77.5L797.2 78.1L794.3 78.9L791.3 79.6L788.2 80.4L785 81.3L781.7 82.2L778.4 83.1L775 84L771.5 85L768 86L764.5 87L760.8 88.1L757.1 89.2L753.4 90.3L749.7 91.4L745.8 92.6L742 93.7L738.1 94.9L734.2 96.1L730.2 97.4L726.2 98.6L722.2 99.9L718.2 101.1L714.1 102.4L710 103.7L705.9 105L701.8 106.4L697.6 107.7L693.4 109.1L689.3 110.4L685.1 111.8L680.9 113.2L676.7 114.5L672.5 115.9L668.2 117.3L664 118.7L659.8 120.2L655.6 121.6L651.3 123L647.1 124.4L642.8 125.9L638.6 127.3L634.4 128.8L630.2 130.2L625.9 131.7L621.7 133.2L617.5 134.7L613.3 136.1L609.1 137.6L604.9 139.1L600.8 140.6L596.6 142.1L592.4 143.6L588.3 145.1L584.2 146.6L580 148.1" fill="none" stroke="#555555" stroke-width="1.39" stroke-dasharray="1.39 2.29"/>
<path d="M1381.1 235.7L1378.6 234.7L1376.1 233.7L1373.5 232.7L1370.9 231.7L1368.4 230.8L1365.8 229.8L1363.2 228.8L1360.6 227.8L1358 226.9L1355.4 225.9L1352.8 225L1350.2 224L1347.6 223.1L1345 222.2L1342.3 221.2L1339.7 220.3L1337.1 219.4L1334.4 218.5L1331.8 217.6L1329.2 216.7L1326.6 215.8L1323.9 214.9L1321.3 214L1318.6 213.1L1316 212.3L1313.4 211.4L1310.7 210.5L1308.1 209.7L1305.5 208.8L1302.9 208L1300.2 207.2L1297.6 206.4L1295 205.6L1292.4 204.7L1289.8 203.9L1287.2 203.2L1284.6 202.4L1282 201.6L1279.4 200.8L1276.8 200.1L1274.2 199.3L1271.7 198.6L1269.1 197.9L1266.5 197.1L1264 196.4L1261.5 195.7L1258.9 195L1256.4 194.3L1253.9 193.7L1251.4 193L1248.9 192.3L1246.4 191.7L1244 191.1L1241.5 190.4L1239.1 189.8L1236.7 189.2L1234.2 188.6L1231.8 188L1229.4 187.5L1227.1 186.9L1224.7 186.3L1222.3 185.8L1220 185.3L1217.7 184.7L1215.4 184.2L1213.1 183.7L1210.8 183.3L1208.5 182.8L1206.3 182.3L1204.1 181.9L1201.8 181.4L1199.6 181L1197.5 180.6L1195.3 180.2L1193.1 179.8L1191 179.4L1188.9 179.1L1186.8 178.7L1184.7 178.4L1182.7 178.1L1180.6 177.8L1178.6 177.5L1176.6 177.2L1174.6 176.9L1172.6 176.6L1170.7 176.4L1168.7 176.2L1166.8 176L1164.9 175.8L1163.1 175.6L1161.2 175.4L1159.4 175.2L1157.5 175.1L1155.7 174.9L1154 174.8L1152.2 174.7L1150.4 174.6L1148.7 174.6L1147 174.5L1145.3 174.4L1143.6 174.4L1142 174.4L1140.4 174.4L1138.7 174.4L1137.1 174.4L1135.6 174.4L1134 174.5L1132.4 174.6L1130.9 174.6L1129.4 174.7L1127.9 174.8L1126.4 175L1124.9 175.1L1123.5 175.2L1122.1 175.4L1120.7 175.6L1119.3 175.8L1117.9 176L1116.5 176.2L1115.1 176.4L1113.8 176.7L1112.5 176.9L1111.2 177.2L1109.9 177.5L1108.6 177.8L1107.3 178.1L1106.1 178.4L1104.8 178.7L1103.6 179.1L1102.4 179.5L1101.2 179.8L1100 180.2L1098.8 180.6L1097.6 181L1096.4 181.5L1095.3 181.9L1094.1 182.3L1093 182.8L1091.9 183.3L1090.8 183.8L1089.7 184.3L1088.6 184.8L1087.5 185.3L1086.4 185.8L1085.4 186.4L1084.3 186.9L1083.2 187.5L1082.2 188.1L1081.2 188.7L1080.1 189.2L1079.1 189.9L1078.1 190.5L1077.1 191.1L1076.1 191.7L1075.1 192.4L1074.1 193L1073.1 193.7L1072.1 194.4L1071.1 195.1L1070.1 195.8L1069.2 196.5L1068.2 197.2L1067.2 197.9L1066.3 198.6L1065.3 199.4L1064.3 200.1L1063.4 200.9L1062.4 201.6L1061.5 202.4L1060.6 203.2L1059.6 204L1058.7 204.8L1057.7 205.6L1056.8 206.4L1055.9 207.2L1054.9 208.1L1054 208.9L1053 209.7L1052.1 210.6L1051.2 211.4L1050.3 212.3L1049.3 213.2L1048.4 214L1047.5 214.9L1046.5 215.8L1045.6 216.7L1044.7 217.6L1043.7 218.5L1042.8 219.4L1041.9 220.3L1040.9 221.3L1040 222.2L1039.1 223.1L1038.1 224.1L1037.2 225L1036.2 226L1035.3 226.9L1034.4 227.9L1033.4 228.9L1032.5 229.8L1031.5 230.8L1030.6 231.8L1029.6 232.8L1028.7 233.8L1027.7 234.8L1026.7 235.8L1025.8 236.8L1024.8 237.8L1023.9 238.8L1022.9 239.8L1021.9 240.8L1020.9 241.9L1020 242.9L1019 243.9L1018 245L1017 246L1016 247L1015.1 248.1L1014.1 249.1L1013.1 250.2L1012.1 251.3L1011.1 252.3L1010.1 253.4L1009.1 254.4L1008.1 255.5L1007.1 256.6L1006 257.7L1005 258.7L1004 259.8L1003 260.9L1002 262L1000.9 263.1L999.9 264.2L998.9 265.3L997.8 266.4L996.8 267.5L995.8 268.6L994.7 269.7L993.7 270.8L992.6 271.9L991.6 273L990.5 274.1L989.4 275.2L988.4 276.3L987.3 277.4L986.2 278.6L985.2 279.7L984.1 280.8L983 281.9L981.9 283L980.9 284.2L979.8 285.3L978.7 286.4L977.6 287.6L976.5 288.7L975.4 289.8L974.3 291L973.2 292.1L972.1 293.2L971 294.4L969.9 295.5L968.8 296.6L967.7 297.8L966.5 298.9L965.4 300.1L964.3 301.2L963.2 302.4L962.1 303.5L960.9 304.7L959.8 305.8L958.7 306.9L957.5 308.1L956.4 309.2L955.3 310.4L954.1 311.5L953 312.7L951.8 313.8L950.7 315L949.5 316.1L948.4 317.3L947.2 318.4L946.1 319.6L944.9 320.7L943.8 321.9L942.6 323L941.5 324.2L940.3 325.3L939.1 326.5L938 327.6L936.8 328.8L935.7 329.9L934.5 331.1L933.3 332.2L932.1 333.4L931 334.5L929.8 335.7L928.6 336.8L927.5 338L926.3 339.1L925.1 340.2L923.9 341.4L922.8 342.5L921.6 343.7L920.4 344.8L919.2 346L918 347.1L916.9 348.2L915.7 349.4L914.5 350.5L913.3 351.6L912.1 352.8L910.9 353.9L909.8 355L908.6 356.2L907.4 357.3L906.2 358.4L905 359.5L903.8 360.7L902.7 361.8L901.5 362.9L900.3 364L899.1 365.1L897.9 366.3L896.7 367.4L895.6 368.5L894.4 369.6L893.2 370.7L892 371.8L890.8 372.9L889.6 374L888.5 375.1L887.3 376.2L886.1 377.3L884.9 378.4L883.7 379.5L882.6 380.5L881.4 381.6L880.2 382.7L879 383.8L877.9 384.9L876.7 385.9L875.5 387L874.3 388.1L873.2 389.1L872 390.2L870.8 391.2L869.6 392.3L868.5 393.3L867.3 394.4L866.1 395.4L865 396.5L863.8 397.5L862.6 398.5L861.5 399.6" fill="none" stroke="#555555" stroke-width="1.39" stroke-dasharray="1.39 2.29"/>
<path d="M974.3 291.4L973.3 292.7L972.3 293.9L971.3 295.1L970.3 296.3L969.2 297.6L968.2 298.8L967.2 300L966.1 301.2L965.1 302.5L964 303.7L963 304.9L961.9 306.2L960.9 307.4L959.8 308.6L958.8 309.9L957.7 311.1L956.7 312.3L955.6 313.6L954.5 314.8L953.5 316L952.4 317.3L951.3 318.5L950.3 319.7L949.2 321L948.1 322.2L947 323.4L945.9 324.7L944.9 325.9L943.8 327.1L942.7 328.4L941.6 329.6L940.5 330.8L939.4 332L938.3 333.3L937.2 334.5L936.1 335.7L935 337L933.9 338.2L932.8 339.4L931.7 340.7L930.6 341.9L929.5 343.1L928.4 344.3L927.3 345.6L926.2 346.8L925.1 348L924 349.2L922.9 350.5L921.8 351.7L920.6 352.9L919.5 354.1L918.4 355.3L917.3 356.6L916.2 357.8L915.1 359L914 360.2L912.8 361.4L911.7 362.6L910.6 363.8L909.5 365L908.4 366.2L907.2 367.4L906.1 368.6L905 369.8L903.9 371L902.8 372.2L901.6 373.4L900.5 374.6L899.4 375.8L898.3 377L897.2 378.2L896.1 379.4L894.9 380.5L893.8 381.7L892.7 382.9L891.6 384.1L890.5 385.2L889.3 386.4L888.2 387.6L887.1 388.7L886 389.9L884.9 391.1L883.8 392.2L882.7 393.4L881.5 394.5L880.4 395.7L879.3 396.8L878.2 398L877.1 399.1L876 400.2L874.9 401.4L873.8 402.5L872.7 403.6L871.6 404.7L870.5 405.8L869.3 407" fill="none" stroke="#555555" stroke-width="1.39" stroke-dasharray="1.39 2.29"/>
<path d="M968.5 287.5L967.4 288.7L966.4 290L965.4 291.2L964.3 292.4L963.3 293.6L962.2 294.8L961.2 296.1L960.1 297.3L959.1 298.5L958 299.7L957 301L955.9 302.2L954.9 303.4L953.8 304.6L952.7 305.9L951.7 307.1L950.6 308.3L949.5 309.5L948.5 310.8L947.4 312L946.3 313.2L945.2 314.5L944.2 315.7L943.1 316.9L942 318.2L940.9 319.4L939.8 320.6L938.7 321.8L937.6 323.1L936.5 324.3L935.4 325.5L934.4 326.8L933.3 328L932.2 329.2L931.1 330.5L930 331.7L928.9 332.9L927.8 334.1L926.7 335.4L925.6 336.6L924.4 337.8L923.3 339.1L922.2 340.3L921.1 341.5L920 342.7L918.9 344L917.8 345.2L916.7 346.4L915.6 347.6L914.5 348.8L913.3 350.1L912.2 351.3L911.1 352.5L910 353.7L908.9 354.9L907.8 356.1L906.7 357.3L905.5 358.6L904.4 359.8L903.3 361L902.2 362.2L901.1 363.4L900 364.6L898.9 365.8L897.7 367L896.6 368.2L895.5 369.4L894.4 370.6L893.3 371.8L892.2 373L891.1 374.2L889.9 375.3L888.8 376.5L887.7 377.7L886.6 378.9L885.5 380.1L884.4 381.2L883.3 382.4L882.2 383.6L881.1 384.8L880 385.9L878.8 387.1L877.7 388.2L876.6 389.4L875.5 390.6L874.4 391.7L873.3 392.9L872.2 394L871.1 395.1L870 396.3L868.9 397.4L867.8 398.6L866.7 399.7L865.6 400.8L864.5 401.9L863.4 403.1" fill="none" stroke="#555555" stroke-width="1.39" stroke-dasharray="1.39 2.29"/>
<path d="M829.3 387.4L830.1 386.1L830.9 384.8L831.8 383.5L832.6 382.2L833.4 380.9L834.3 379.6L835.1 378.3L836 377L836.9 375.7L837.7 374.4L838.6 373.1L839.4 371.8L840.3 370.5L841.2 369.2L842 367.9L842.9 366.6L843.8 365.3L844.7 363.9L845.6 362.6L846.5 361.3L847.3 360L848.2 358.7L849.1 357.4L850 356L850.9 354.7L851.8 353.4L852.7 352.1L853.6 350.7L854.6 349.4L855.5 348.1L856.4 346.8L857.3 345.4L858.2 344.1L859.1 342.8L860.1 341.5L861 340.1L861.9 338.8L862.9 337.5L863.8 336.1L864.7 334.8L865.7 333.5L866.6 332.1L867.5 330.8L868.5 329.5L869.4 328.1L870.4 326.8L871.3 325.5L872.3 324.1L873.2 322.8L874.2 321.5L875.1 320.1L876.1 318.8L877 317.5L878 316.1L878.9 314.8L879.9 313.5L880.9 312.1L881.8 310.8L882.8 309.5L883.7 308.1L884.7 306.8L885.7 305.5L886.6 304.1L887.6 302.8L888.6 301.5L889.5 300.2L890.5 298.8L891.5 297.5L892.5 296.2L893.4 294.8L894.4 293.5L895.4 292.2L896.3 290.9L897.3 289.5L898.3 288.2L899.3 286.9L900.2 285.6L901.2 284.3L902.2 282.9L903.1 281.6L904.1 280.3L905.1 279L906.1 277.7L907 276.4L908 275L909 273.7L910 272.4L910.9 271.1L911.9 269.8L912.9 268.5L913.8 267.2L914.8 265.9L915.8 264.6L916.7 263.3L917.7 262L918.7 260.7L919.6 259.4L920.6 258.1L921.6 256.8L922.5 255.5L923.5 254.2L924.5 253L925.4 251.7L926.4 250.4L927.3 249.1L928.3 247.8L929.3 246.6L930.2 245.3L931.2 244L932.1 242.8L933.1 241.5L934 240.2L935 239L935.9 237.7L936.9 236.5L937.8 235.2L938.8 234L939.7 232.7L940.6 231.5L941.6 230.2L942.5 229L943.5 227.8L944.4 226.6L945.3 225.3L946.3 224.1L947.2 222.9L948.1 221.7L949.1 220.5L950 219.3L950.9 218.1L951.8 216.9L952.8 215.7L953.7 214.5L954.6 213.3L955.5 212.1L956.5 211L957.4 209.8L958.3 208.6L959.2 207.5L960.1 206.3L961 205.1L961.9 204L962.9 202.9L963.8 201.7L964.7 200.6L965.6 199.5L966.5 198.4L967.4 197.2L968.3 196.1L969.2 195L970.1 193.9L971 192.9L971.9 191.8L972.8 190.7L973.7 189.6L974.6 188.6L975.5 187.5L976.4 186.5" fill="none" stroke="#555555" stroke-width="1.39" stroke-dasharray="1.39 2.29"/>
<path d="M833.1 387.2L833.9 385.9L834.7 384.6L835.6 383.3L836.4 382.1L837.3 380.8L838.1 379.5L839 378.2L839.9 376.9L840.7 375.6L841.6 374.3L842.5 373L843.3 371.7L844.2 370.4L845.1 369.1L846 367.8L846.9 366.5L847.7 365.2L848.6 363.9L849.5 362.6L850.4 361.3L851.3 360L852.2 358.7L853.1 357.4L854 356L854.9 354.7L855.8 353.4L856.7 352.1L857.6 350.8L858.6 349.5L859.5 348.1L860.4 346.8L861.3 345.5L862.2 344.2L863.2 342.9L864.1 341.5L865 340.2L865.9 338.9L866.9 337.6L867.8 336.3L868.7 334.9L869.7 333.6L870.6 332.3L871.6 331L872.5 329.6L873.4 328.3L874.4 327L875.3 325.7L876.3 324.3L877.2 323L878.2 321.7L879.1 320.4L880.1 319L881 317.7L882 316.4L882.9 315L883.9 313.7L884.9 312.4L885.8 311.1L886.8 309.7L887.7 308.4L888.7 307.1L889.7 305.8L890.6 304.4L891.6 303.1L892.6 301.8L893.5 300.5L894.5 299.2L895.4 297.8L896.4 296.5L897.4 295.2L898.3 293.9L899.3 292.6L900.3 291.2L901.2 289.9L902.2 288.6L903.2 287.3L904.1 286L905.1 284.7L906.1 283.3L907 282L908 280.7L909 279.4L909.9 278.1L910.9 276.8L911.9 275.5L912.8 274.2L913.8 272.9L914.8 271.6L915.7 270.3L916.7 269L917.6 267.7L918.6 266.4L919.6 265.1L920.5 263.8L921.5 262.5L922.4 261.2L923.4 259.9L924.3 258.7L925.3 257.4L926.2 256.1L927.2 254.8L928.2 253.5L929.1 252.3L930 251L931 249.7L931.9 248.4L932.9 247.2L933.8 245.9L934.8 244.6L935.7 243.4L936.7 242.1L937.6 240.9L938.5 239.6L939.5 238.4L940.4 237.1L941.3 235.9L942.3 234.6L943.2 233.4L944.1 232.2L945.1 230.9L946 229.7L946.9 228.5L947.8 227.3L948.8 226L949.7 224.8L950.6 223.6L951.5 222.4L952.4 221.2L953.3 220L954.3 218.8L955.2 217.6L956.1 216.4L957 215.2L957.9 214.1L958.8 212.9L959.7 211.7L960.6 210.6L961.5 209.4L962.4 208.2L963.3 207.1L964.2 205.9L965.1 204.8L966 203.7L966.9 202.5L967.8 201.4L968.7 200.3L969.6 199.2L970.5 198.1L971.4 197L972.2 195.9L973.1 194.8L974 193.7L974.9 192.6L975.8 191.6L976.7 190.5L977.6 189.4L978.5 188.4L979.4 187.3L980.2 186.3" fill="none" stroke="#555555" stroke-width="1.39" stroke-dasharray="1.39 2.29"/>
<path d="M972.8 185.8L971.9 186.9L971 187.9L970.1 189L969.2 190L968.3 191.1L967.3 192.1L966.4 193.2L965.5 194.3L964.6 195.4L963.7 196.5L962.8 197.6L961.8 198.7L960.9 199.8L960 201L959.1 202.1L958.1 203.2L957.2 204.4L956.3 205.5L955.4 206.6L954.5 207.8L953.5 209L952.6 210.1L951.7 211.3L950.7 212.5L949.8 213.6L948.9 214.8L947.9 216L947 217.2L946.1 218.4L945.1 219.6L944.2 220.8L943.2 222L942.3 223.2L941.4 224.4L940.4 225.6L939.5 226.8L938.5 228.1L937.6 229.3L936.6 230.5L935.7 231.8L934.7 233L933.8 234.2L932.8 235.5L931.9 236.7L930.9 238L930 239.2L929 240.5L928 241.7L927.1 243L926.1 244.3L925.2 245.5L924.2 246.8L923.2 248L922.3 249.3L921.3 250.6L920.3 251.9L919.4 253.1L918.4 254.4L917.4 255.7L916.5 257L915.5 258.3L914.5 259.6L913.6 260.9L912.6 262.1L911.6 263.4L910.7 264.7L909.7 266L908.7 267.3L907.7 268.6L906.8 269.9L905.8 271.2L904.8 272.5L903.8 273.8L902.9 275.1L901.9 276.4L900.9 277.8L899.9 279.1L899 280.4L898 281.7L897 283L896.1 284.3L895.1 285.6L894.1 286.9L893.1 288.3L892.2 289.6L891.2 290.9L890.2 292.2L889.3 293.5L888.3 294.9L887.3 296.2L886.4 297.5L885.4 298.8L884.4 300.1L883.5 301.5L882.5 302.8L881.5 304.1L880.6 305.4L879.6 306.8L878.7 308.1L877.7 309.4L876.7 310.7L875.8 312.1L874.8 313.4L873.9 314.7L872.9 316.1L872 317.4L871 318.7L870.1 320L869.1 321.4L868.2 322.7L867.2 324L866.3 325.3L865.4 326.7L864.4 328L863.5 329.3L862.6 330.7L861.6 332L860.7 333.3L859.8 334.6L858.8 336L857.9 337.3L857 338.6L856.1 339.9L855.2 341.3L854.3 342.6L853.4 343.9L852.4 345.2L851.5 346.5L850.6 347.9L849.7 349.2L848.8 350.5L847.9 351.8L847 353.1L846.2 354.5L845.3 355.8L844.4 357.1L843.5 358.4L842.6 359.7L841.7 361L840.9 362.3L840 363.6L839.1 364.9L838.3 366.3L837.4 367.6L836.6 368.9L835.7 370.2L834.8 371.5L834 372.8L833.2 374.1L832.3 375.4L831.5 376.7L830.6 378L829.8 379.2L829 380.5L828.1 381.8L827.3 383.1L826.5 384.4L825.7 385.7" fill="none" stroke="#555555" stroke-width="1.39" stroke-dasharray="1.39 2.29"/>
<path d="M969.1 185L968.1 186.1L967.2 187.1L966.3 188.2L965.3 189.2L964.4 190.3L963.5 191.4L962.5 192.5L961.6 193.6L960.7 194.7L959.7 195.8L958.8 196.9L957.9 198L956.9 199.1L956 200.3L955 201.4L954.1 202.5L953.2 203.7L952.2 204.8L951.3 206L950.3 207.1L949.4 208.3L948.5 209.5L947.5 210.6L946.6 211.8L945.6 213L944.7 214.2L943.7 215.4L942.8 216.6L941.8 217.8L940.9 219L939.9 220.2L938.9 221.4L938 222.6L937 223.9L936.1 225.1L935.1 226.3L934.2 227.5L933.2 228.8L932.2 230L931.3 231.3L930.3 232.5L929.3 233.7L928.4 235L927.4 236.2L926.4 237.5L925.5 238.8L924.5 240L923.5 241.3L922.5 242.6L921.6 243.8L920.6 245.1L919.6 246.4L918.6 247.6L917.7 248.9L916.7 250.2L915.7 251.5L914.7 252.8L913.8 254.1L912.8 255.4L911.8 256.6L910.8 257.9L909.8 259.2L908.9 260.5L907.9 261.8L906.9 263.1L905.9 264.4L904.9 265.7L904 267L903 268.4L902 269.7L901 271L900 272.3L899 273.6L898.1 274.9L897.1 276.2L896.1 277.5L895.1 278.9L894.1 280.2L893.2 281.5L892.2 282.8L891.2 284.1L890.2 285.5L889.2 286.8L888.3 288.1L887.3 289.4L886.3 290.8L885.3 292.1L884.4 293.4L883.4 294.8L882.4 296.1L881.4 297.4L880.5 298.8L879.5 300.1L878.5 301.4L877.6 302.7L876.6 304.1L875.6 305.4L874.7 306.7L873.7 308.1L872.8 309.4L871.8 310.8L870.8 312.1L869.9 313.4L868.9 314.8L868 316.1L867 317.4L866.1 318.8L865.1 320.1L864.2 321.4L863.2 322.8L862.3 324.1L861.4 325.4L860.4 326.8L859.5 328.1L858.6 329.5L857.6 330.8L856.7 332.1L855.8 333.5L854.9 334.8L853.9 336.1L853 337.5L852.1 338.8L851.2 340.1L850.3 341.5L849.4 342.8L848.5 344.1L847.6 345.4L846.7 346.8L845.8 348.1L844.9 349.4L844 350.8L843.1 352.1L842.2 353.4L841.3 354.7L840.5 356.1L839.6 357.4L838.7 358.7L837.8 360L837 361.3L836.1 362.7L835.2 364L834.4 365.3L833.5 366.6L832.7 367.9L831.8 369.2L831 370.6L830.1 371.9L829.3 373.2L828.5 374.5L827.6 375.8L826.8 377.1L826 378.4L825.2 379.7L824.4 381L823.5 382.3L822.7 383.6L821.9 384.9" fill="none" stroke="#555555" stroke-width="1.39" stroke-dasharray="1.39 2.29"/>
<path d="M1382.7 224.4L1379.8 223L1376.9 221.6L1373.9 220.1L1371 218.7L1368 217.3L1365 215.9L1361.9 214.5L1358.9 213.1L1355.8 211.7L1352.7 210.3L1349.6 208.9L1346.5 207.5L1343.3 206.1L1340.1 204.7L1336.9 203.3L1333.7 201.9L1330.4 200.5L1327.2 199.1L1323.9 197.8L1320.6 196.4L1317.3 195L1314 193.7L1310.7 192.3L1307.3 190.9L1303.9 189.6L1300.5 188.2L1297.1 186.9L1293.7 185.5L1290.3 184.2L1286.9 182.9L1283.4 181.5L1280 180.2L1276.5 178.9L1273 177.6L1269.5 176.2L1266 174.9L1262.5 173.6L1259 172.3L1255.5 171L1252 169.8L1248.5 168.5L1244.9 167.2L1241.4 165.9L1237.9 164.7L1234.3 163.4L1230.8 162.2L1227.2 160.9L1223.7 159.7L1220.1 158.5L1216.6 157.2L1213.1 156L1209.5 154.8L1206 153.6L1202.5 152.4L1198.9 151.3L1195.4 150.1L1191.9 148.9L1188.4 147.8L1184.9 146.6L1181.4 145.5L1178 144.4L1174.5 143.3L1171.1 142.2L1167.6 141.1L1164.2 140L1160.8 138.9L1157.4 137.9L1154 136.8L1150.7 135.8L1147.4 134.8L1144.1 133.8L1140.8 132.8L1137.5 131.8L1134.3 130.9L1131 129.9L1127.8 129L1124.7 128.1L1121.5 127.2L1118.4 126.3L1115.4 125.5L1112.3 124.6L1109.3 123.8L1106.3 123L1103.4 122.2L1100.5 121.5L1097.6 120.7L1094.7 120L1091.9 119.3L1089.2 118.6L1086.4 118L1083.8 117.4L1081.1 116.7L1078.5 116.2L1076 115.6L1073.5 115.1L1071 114.6L1068.6 114.1L1066.2 113.6L1063.9 113.2L1061.6 112.8L1059.3 112.4L1057.1 112L1055 111.7L1052.9 111.4L1050.9 111.2L1048.9 110.9L1046.9 110.7L1045 110.6L1043.1 110.4L1041.3 110.3L1039.6 110.2L1037.8 110.2L1036.2 110.1L1034.5 110.1L1032.9 110.2L1031.4 110.2L1029.9 110.3L1028.5 110.5L1027.1 110.6L1025.7 110.8L1024.4 111L1023.1 111.2L1021.8 111.5L1020.6 111.8L1019.4 112.2L1018.3 112.5" fill="none" stroke="#555555" stroke-width="1.39" stroke-dasharray="1.39 2.29"/>
<path d="M1384.9 244.9L1382.5 243.6L1380 242.2L1377.6 240.8L1375.1 239.5L1372.6 238.1L1370.1 236.8L1367.5 235.4L1364.9 234.1L1362.3 232.7L1359.7 231.4L1357.1 230L1354.4 228.7L1351.7 227.3L1349 226L1346.3 224.7L1343.6 223.3L1340.8 222L1338.1 220.7L1335.3 219.4L1332.5 218L1329.6 216.7L1326.8 215.4L1323.9 214.1L1321.1 212.8L1318.2 211.5L1315.3 210.2L1312.3 208.9L1309.4 207.6L1306.5 206.3L1303.5 205L1300.5 203.7L1297.5 202.4L1294.5 201.2L1291.5 199.9L1288.5 198.6L1285.5 197.4L1282.4 196.1L1279.4 194.9L1276.3 193.6L1273.2 192.4L1270.1 191.1L1267.1 189.9L1264 188.7L1260.9 187.5L1257.8 186.2L1254.6 185L1251.5 183.8L1248.4 182.6L1245.3 181.4L1242.1 180.2L1239 179.1L1235.9 177.9L1232.7 176.7L1229.6 175.6L1226.4 174.4L1223.3 173.3L1220.2 172.1L1217 171L1213.9 169.9L1210.8 168.7L1207.6 167.6L1204.5 166.5L1201.4 165.4L1198.3 164.4L1195.1 163.3L1192 162.2L1188.9 161.2L1185.9 160.1L1182.8 159.1L1179.7 158.1L1176.6 157L1173.6 156L1170.5 155L1167.5 154.1L1164.5 153.1L1161.5 152.1L1158.5 151.2L1155.5 150.2L1152.6 149.3L1149.6 148.4L1146.7 147.5L1143.8 146.6L1140.9 145.7L1138 144.9L1135.2 144L1132.3 143.2L1129.5 142.4L1126.8 141.6L1124 140.8L1121.2 140.1L1118.5 139.3L1115.8 138.6L1113.2 137.8L1110.5 137.1L1107.9 136.5L1105.3 135.8L1102.8 135.2L1100.2 134.5L1097.7 133.9L1095.2 133.3L1092.8 132.8L1090.4 132.2L1088 131.7L1085.6 131.2L1083.3 130.7L1081 130.2L1078.8 129.8L1076.5 129.3L1074.3 128.9L1072.2 128.6L1070.1 128.2L1068 127.9L1065.9 127.5L1063.9 127.3L1061.9 127L1059.9 126.8L1058 126.5L1056.1 126.3L1054.2 126.2L1052.4 126L1050.6 125.9L1048.9 125.8L1047.1 125.7L1045.4 125.7L1043.8 125.6L1042.2 125.6L1040.6 125.7L1039 125.7L1037.4 125.8L1035.9 125.9L1034.5 126L1033 126.2L1031.6 126.3L1030.2 126.5L1028.8 126.7L1027.5 127L1026.2 127.2L1024.9 127.5L1023.6 127.8L1022.4 128.2L1021.2 128.5L1020 128.9L1018.8 129.3L1017.7 129.7L1016.6 130.2L1015.5 130.7L1014.4 131.1L1013.3 131.7L1012.3 132.2L1011.3 132.7L1010.2 133.3L1009.3 133.9L1008.3 134.5" fill="none" stroke="#555555" stroke-width="1.39" stroke-dasharray="1.39 2.29"/>
<path d="M1372.4 255.4L1370.2 254.1L1368 252.7L1365.8 251.4L1363.5 250.1L1361.2 248.8L1359 247.5L1356.6 246.2L1354.3 244.9L1352 243.6L1349.6 242.3L1347.2 241L1344.8 239.8L1342.4 238.5L1340 237.2L1337.5 235.9L1335 234.6L1332.6 233.3L1330 232.1L1327.5 230.8L1325 229.5L1322.4 228.3L1319.9 227L1317.3 225.8L1314.7 224.5L1312.1 223.2L1309.4 222L1306.8 220.8L1304.1 219.5L1301.5 218.3L1298.8 217L1296.1 215.8L1293.4 214.6L1290.7 213.4L1287.9 212.1L1285.2 210.9L1282.4 209.7L1279.7 208.5L1276.9 207.3L1274.1 206.1L1271.3 204.9L1268.6 203.7L1265.8 202.6L1262.9 201.4L1260.1 200.2L1257.3 199.1L1254.5 197.9L1251.6 196.7L1248.8 195.6L1246 194.4L1243.1 193.3L1240.3 192.2L1237.4 191L1234.5 189.9L1231.7 188.8L1228.8 187.7L1226 186.6L1223.1 185.5L1220.2 184.4L1217.4 183.3L1214.5 182.3L1211.6 181.2L1208.8 180.2L1205.9 179.1L1203.1 178.1L1200.2 177L1197.4 176L1194.5 175L1191.7 174L1188.8 173L1186 172L1183.2 171L1180.4 170L1177.6 169.1L1174.8 168.1L1172 167.2L1169.2 166.3L1166.4 165.3L1163.7 164.4L1160.9 163.5L1158.2 162.7L1155.4 161.8L1152.7 160.9L1150 160.1L1147.3 159.2L1144.7 158.4L1142 157.6L1139.4 156.8L1136.7 156L1134.1 155.2L1131.5 154.4L1128.9 153.7L1126.4 153L1123.8 152.2L1121.3 151.5L1118.8 150.9L1116.3 150.2L1113.9 149.5L1111.4 148.9L1109 148.2L1106.6 147.6L1104.2 147L1101.8 146.5L1099.5 145.9L1097.2 145.4L1094.9 144.8L1092.6 144.3L1090.4 143.8L1088.2 143.3L1086 142.9L1083.8 142.5L1081.7 142L1079.5 141.6L1077.4 141.3L1075.4 140.9L1073.3 140.6L1071.3 140.2L1069.3 139.9L1067.3 139.7L1065.4 139.4L1063.5 139.1L1061.6 138.9L1059.7 138.7L1057.9 138.5L1056.1 138.4L1054.3 138.3L1052.5 138.1L1050.8 138L1049.1 138L1047.4 137.9L1045.7 137.9L1044.1 137.9L1042.4 137.9L1040.8 137.9L1039.3 138L1037.7 138L1036.2 138.1L1034.7 138.2L1033.2 138.4L1031.7 138.5L1030.3 138.7L1028.9 138.9L1027.5 139.1L1026.1 139.4L1024.7 139.6L1023.4 139.9L1022.1 140.2L1020.8 140.5L1019.5 140.9L1018.2 141.2L1017 141.6L1015.7 142L1014.5 142.4L1013.3 142.9L1012.1 143.3L1010.9 143.8L1009.8 144.3L1008.6 144.8L1007.5 145.3L1006.4 145.9L1005.3 146.4L1004.2 147L1003.1 147.6L1002 148.2L1000.9 148.9L999.9 149.5L998.8 150.2L997.8 150.8L996.8 151.5L995.7 152.2L994.7 152.9L993.7 153.7L992.7 154.4L991.7 155.2" fill="none" stroke="#555555" stroke-width="1.39" stroke-dasharray="1.39 2.29"/>
<path d="M700.2 186.5L701.2 187.1L702.1 187.8L703 188.4L703.9 189.1L704.8 189.7L705.7 190.4L706.6 191.1L707.5 191.8L708.3 192.5L709.2 193.2L710.1 193.9L710.9 194.6L711.8 195.3L712.6 196.1L713.5 196.8L714.3 197.6L715.2 198.4L716 199.2L716.8 200L717.7 200.7L718.5 201.6L719.3 202.4L720.1 203.2L720.9 204L721.8 204.8L722.6 205.7L723.4 206.5L724.2 207.4L725 208.3L725.8 209.1L726.7 210L727.5 210.9L728.3 211.8L729.1 212.7L729.9 213.6L730.7 214.5L731.5 215.4L732.4 216.3L733.2 217.3L734 218.2L734.8 219.2L735.6 220.1L736.4 221.1L737.3 222L738.1 223L738.9 223.9L739.7 224.9L740.6 225.9L741.4 226.9L742.2 227.9L743.1 228.9L743.9 229.9L744.7 230.9L745.6 231.9L746.4 232.9L747.3 233.9L748.1 234.9L749 236L749.8 237L750.7 238L751.5 239.1L752.4 240.1L753.3 241.2L754.2 242.2L755 243.3L755.9 244.3L756.8 245.4L757.7 246.4L758.6 247.5L759.5 248.6L760.4 249.7L761.3 250.7L762.2 251.8L763.1 252.9L764 254L764.9 255.1L765.8 256.2L766.7 257.3L767.7 258.4L768.6 259.5L769.5 260.6L770.5 261.7L771.4 262.8L772.4 263.9L773.3 265L774.3 266.1L775.2 267.2L776.2 268.4L777.2 269.5L778.1 270.6L779.1 271.7L780.1 272.9L781.1 274L782.1 275.1L783.1 276.3L784.1 277.4L785.1 278.5L786.1 279.7L787.1 280.8L788.1 282L789.1 283.1L790.1 284.2L791.2 285.4L792.2 286.5L793.2 287.7L794.3 288.8L795.3 290L796.3 291.1L797.4 292.3L798.4 293.5L799.5 294.6L800.6 295.8L801.6 296.9L802.7 298.1L803.8 299.3L804.9 300.4L805.9 301.6L807 302.7L808.1 303.9L809.2 305.1L810.3 306.2L811.4 307.4L812.5 308.6L813.6 309.7L814.7 310.9L815.8 312.1L816.9 313.2L818.1 314.4L819.2 315.6L820.3 316.7L821.4 317.9L822.6 319.1L823.7 320.2L824.8 321.4L826 322.6L827.1 323.7L828.3 324.9L829.4 326.1L830.6 327.2L831.7 328.4L832.9 329.6L834.1 330.7L835.2 331.9L836.4 333.1L837.6 334.2L838.7 335.4L839.9 336.6L841.1 337.7L842.3 338.9L843.4 340.1L844.6 341.2L845.8 342.4L847 343.5L848.2 344.7L849.4 345.9L850.6 347L851.8 348.2L853 349.3L854.2 350.5L855.4 351.6L856.6 352.8L857.8 353.9L859 355.1L860.2 356.2L861.4 357.4L862.6 358.5L863.8 359.7L865 360.8L866.3 361.9L867.5 363.1L868.7 364.2L869.9 365.4L871.1 366.5L872.3 367.6L873.6 368.8L874.8 369.9L876 371L877.2 372.1L878.5 373.3L879.7 374.4L880.9 375.5L882.1 376.6L883.4 377.7L884.6 378.8L885.8 379.9L887.1 381L888.3 382.1L889.5 383.2L890.8 384.3L892 385.4L893.2 386.5L894.5 387.6L895.7 388.7L896.9 389.8L898.2 390.9L899.4 391.9L900.6 393L901.9 394.1L903.1 395.1L904.3 396.2L905.6 397.3L906.8 398.3L908 399.4L909.3 400.4L910.5 401.5L911.7 402.5L913 403.5L914.2 404.6L915.4 405.6L916.6 406.6L917.9 407.6L919.1 408.7L920.3 409.7L921.6 410.7L922.8 411.7L924 412.7L925.3 413.7L926.5 414.7L927.7 415.6L929 416.6L930.2 417.6L931.4 418.5L932.6 419.5L933.9 420.5L935.1 421.4L936.3 422.4L937.5 423.3L938.8 424.2L940 425.2L941.2 426.1L942.4 427L943.7 427.9L944.9 428.8L946.1 429.7L947.4 430.6L948.6 431.5L949.8 432.3L951 433.2" fill="none" stroke="#555555" stroke-width="1.39" stroke-dasharray="1.39 2.29"/>
<path d="M766.7 216.7L765.7 218.3L764.7 219.9L763.7 221.6L762.8 223.2L761.8 224.8L760.9 226.4L759.9 228L759 229.6L758.1 231.3L757.2 232.9L756.3 234.5L755.4 236.1L754.6 237.7L753.7 239.4L752.8 241L752 242.6L751.2 244.2L750.4 245.8L749.6 247.5L748.8 249.1L748 250.7L747.2 252.3L746.5 253.9L745.7 255.6L745 257.2L744.3 258.8L743.6 260.4L742.9 262L742.2 263.7L741.5 265.3L740.8 266.9L740.2 268.5L739.6 270.2L738.9 271.8L738.3 273.4L737.7 275L737.1 276.6L736.6 278.3L736 279.9L735.5 281.5L734.9 283.1L734.4 284.8L733.9 286.4L733.4 288L732.9 289.6L732.4 291.2L732 292.9L731.5 294.5L731.1 296.1L730.6 297.7L730.2 299.4L729.8 301L729.5 302.6L729.1 304.2L728.7 305.8L728.4 307.5L728.1 309.1L727.7 310.7L727.4 312.3L727.1 314L726.9 315.6L726.6 317.2L726.3 318.8L726.1 320.5L725.9 322.1L725.7 323.7L725.5 325.3L725.3 327L725.1 328.6L725 330.2L724.8 331.8L724.7 333.4L724.6 335.1L724.5 336.7L724.4 338.3L724.3 339.9L724.2 341.6L724.2 343.2L724.1 344.8L724.1 346.4L724.1 348L724.1 349.7L724.1 351.3L724.2 352.9L724.2 354.5L724.3 356.2L724.3 357.8L724.4 359.4L724.5 361L724.6 362.7L724.7 364.3L724.9 365.9L725 367.5L725.2 369.1L725.4 370.8L725.6 372.4L725.8 374L726 375.6L726.2 377.2L726.5 378.9L726.7 380.5L727 382.1L727.3 383.7L727.6 385.4L727.9 387L728.2 388.6L728.5 390.2L728.9 391.8L729.2 393.5L729.6 395.1L730 396.7" fill="none" stroke="#555555" stroke-width="1.39" stroke-dasharray="1.39 2.29"/>
<path d="M750.8 307.9L749.2 307.9L747.5 308L745.9 308L744.2 308.1L742.6 308.1L741 308.2L739.3 308.2L737.7 308.3L736 308.4L734.4 308.4L732.8 308.5L731.1 308.5L729.5 308.6L727.9 308.6L726.2 308.7L724.6 308.8L722.9 308.8L721.3 308.9L719.7 309L718 309L716.4 309.1L714.7 309.1L713.1 309.2L711.5 309.3L709.8 309.4L708.2 309.4L706.5 309.5L704.9 309.6L703.3 309.6L701.6 309.7L700 309.8L698.3 309.9L696.7 309.9L695.1 310L693.4 310.1L691.8 310.2L690.1 310.2L688.5 310.3L686.9 310.4L685.2 310.5L683.6 310.6L681.9 310.7L680.3 310.7L678.7 310.8L677 310.9L675.4 311L673.7 311.1L672.1 311.2L670.5 311.3L668.8 311.3L667.2 311.4L665.5 311.5L663.9 311.6L662.3 311.7L660.6 311.8L659 311.9L657.3 312L655.7 312.1L654.1 312.2L652.4 312.3L650.8 312.4L649.1 312.5L647.5 312.6L645.9 312.7L644.2 312.7L642.6 312.8L640.9 312.9L639.3 313L637.7 313.1L636 313.3L634.4 313.4L632.8 313.5L631.1 313.6L629.5 313.7L627.8 313.8L626.2 313.9L624.6 314L622.9 314.1L621.3 314.2L619.6 314.3L618 314.4" fill="none" stroke="#555555" stroke-width="1.39" stroke-dasharray="1.39 2.29"/>
<path d="M881.7 190L880.6 191.4L879.5 192.8L878.4 194.2L877.3 195.6L876.2 196.9L875.1 198.3L874 199.8L873 201.2L871.9 202.6L870.8 204L869.7 205.4L868.6 206.8L867.5 208.3L866.4 209.7L865.4 211.1L864.3 212.5L863.2 214L862.1 215.4L861.1 216.9L860 218.3" fill="none" stroke="#555555" stroke-width="1.39" stroke-dasharray="1.39 2.29"/>
<path d="M963.3 221.7L962.1 222.7L960.9 223.8L959.8 224.8L958.6 225.9L957.4 226.9L956.2 228L955 229.1L953.8 230.1L952.7 231.2L951.5 232.3L950.3 233.4L949.1 234.5L947.9 235.6L946.7 236.7" fill="none" stroke="#555555" stroke-width="1.39" stroke-dasharray="1.39 2.29"/>
<path d="M1055.6 177.9L1055.9 179.3L1056.1 180.7L1056.4 182.1L1056.6 183.5L1056.8 185L1057 186.4L1057.3 187.8L1057.5 189.3L1057.7 190.7L1057.9 192.1L1058.1 193.6L1058.2 195L1058.4 196.5L1058.6 197.9L1058.7 199.4L1058.9 200.9L1059 202.3L1059.2 203.8L1059.3 205.2L1059.4 206.7L1059.5 208.2L1059.6 209.7L1059.7 211.1L1059.8 212.6L1059.9 214.1L1059.9 215.6L1060 217L1060 218.5L1060.1 220L1060.1 221.5L1060.1 223L1060.1 224.5L1060.1 226L1060.1 227.5L1060.1 228.9L1060.1 230.4L1060 231.9L1060 233.4L1059.9 234.9L1059.9 236.4L1059.8 237.9L1059.7 239.4L1059.6 240.9L1059.5 242.4L1059.4 244L1059.3 245.5L1059.1 247L1059 248.5L1058.8 250L1058.7 251.5L1058.5 253L1058.3 254.5L1058.1 256L1057.9 257.6L1057.7 259.1L1057.5 260.6L1057.2 262.1L1057 263.6L1056.7 265.1L1056.5 266.7L1056.2 268.2L1055.9 269.7" fill="none" stroke="#555555" stroke-width="1.39" stroke-dasharray="1.39 2.29"/>
<path d="M901.7 316.7L901.4 315.1L901.2 313.5L900.9 311.9L900.6 310.3L900.4 308.6L900.1 307L899.8 305.4L899.6 303.8L899.3 302.2L899 300.6L898.8 299L898.5 297.4L898.2 295.8L898 294.1L897.7 292.5L897.4 290.9L897.2 289.3L896.9 287.7L896.7 286.1L896.4 284.5L896.1 282.9L895.9 281.3L895.6 279.7L895.3 278L895.1 276.4L894.8 274.8L894.6 273.2L894.3 271.6L894 270L893.8 268.4L893.5 266.8L893.3 265.2L893 263.6L892.8 261.9L892.5 260.3L892.3 258.7L892 257.1L891.8 255.5L891.5 253.9L891.3 252.3L891 250.7L890.8 249.1L890.5 247.5L890.3 245.9L890 244.3L889.8 242.7L889.5 241L889.3 239.4L889 237.8L888.8 236.2L888.6 234.6L888.3 233L888.1 231.4L887.8 229.8L887.6 228.2L887.4 226.6L887.1 225L886.9 223.4L886.7 221.8L886.4 220.2L886.2 218.6L886 217L885.8 215.4L885.5 213.8L885.3 212.2L885.1 210.6L884.9 209L884.6 207.4L884.4 205.8L884.2 204.2L884 202.6L883.8 201L883.6 199.4L883.4 197.8L883.1 196.2L882.9 194.6L882.7 193L882.5 191.4L882.3 189.8L882.1 188.2L881.9 186.6L881.7 185" fill="none" stroke="#555555" stroke-width="1.39" stroke-dasharray="1.39 2.29"/>
<path d="M1001.7 175L1001.3 176.3L1000.9 177.5L1000.6 178.8L1000.2 180.1L999.8 181.4L999.4 182.6L999 183.9L998.6 185.2L998.2 186.5L997.8 187.8L997.4 189.2L997 190.5L996.6 191.8L996.2 193.1L995.8 194.4L995.3 195.8L994.9 197.1L994.5 198.5L994.1 199.8L993.6 201.1L993.2 202.5L992.8 203.8L992.3 205.2L991.9 206.6L991.4 207.9L991 209.3L990.5 210.7L990 212L989.6 213.4L989.1 214.8L988.6 216.2L988.2 217.5L987.7 218.9L987.2 220.3L986.7 221.7" fill="none" stroke="#555555" stroke-width="1.39" stroke-dasharray="1.39 2.29"/>
<path d="M1385.2 220.8L1382.4 219.2L1379.6 217.7L1376.7 216.1L1373.8 214.5L1370.8 212.9L1367.9 211.3L1364.8 209.7L1361.8 208.1L1358.7 206.5L1355.6 204.9L1352.5 203.4L1349.3 201.8L1346.1 200.2L1342.9 198.6L1339.6 197L1336.3 195.4L1333 193.8L1329.7 192.3L1326.3 190.7L1322.9 189.1L1319.4 187.5L1316 185.9L1312.5 184.4L1309 182.8L1305.4 181.2L1301.8 179.6L1298.2 178L1294.6 176.5L1290.9 174.9L1287.3 173.3L1283.6 171.8L1279.8 170.2L1276.1 168.6L1272.3 167L1268.5 165.5L1264.7 163.9L1260.8 162.3L1256.9 160.8L1253.1 159.2L1249.1 157.7L1245.2 156.1L1241.3 154.5L1237.3 153L1233.3 151.4L1229.3 149.9L1225.2 148.3L1221.2 146.8L1217.1 145.2L1213 143.7L1208.9 142.1L1204.8 140.6L1200.7 139.1L1196.5 137.5L1192.4 136L1188.2 134.5L1184 132.9L1179.8 131.4L1175.6 129.9L1171.4 128.4L1167.1 126.8L1162.9 125.3L1158.7 123.8L1154.4 122.3L1150.1 120.8L1145.9 119.3L1141.6 117.8L1137.3 116.3L1133 114.8L1128.7 113.4L1124.4 111.9L1120.1 110.4L1115.9 109L1111.6 107.5L1107.3 106.1L1103 104.6L1098.7 103.2L1094.5 101.7L1090.2 100.3L1086 98.9L1081.7 97.5L1077.5 96.1L1073.3 94.7L1069.1 93.3L1064.9 92L1060.8 90.6L1056.6 89.3L1052.5 88L1048.4 86.7L1044.4 85.4L1040.4 84.1L1036.4 82.8L1032.4 81.6L1028.5 80.4L1024.7 79.2L1020.9 78L1017.1 76.9L1013.4 75.7L1009.8 74.6L1006.2 73.6L1002.7 72.6L999.3 71.6L996 70.6L992.7 69.7L989.5 68.8L986.4 68L983.4 67.2L980.6 66.5L977.8 65.8L975.1 65.2L972.5 64.7L970.1 64.2L967.8 63.8L965.6 63.4L963.5 63.1L961.5 62.9L959.6 62.7L957.9 62.7L956.3 62.7L954.8 62.8L953.4 62.9L952 63.1L950.8 63.4L949.7 63.8L948.7 64.2L947.7 64.7L946.9 65.3L946.1 65.9L945.3 66.6L944.6 67.3L944 68.1L943.4 68.9L942.9 69.8L942.3 70.7L941.9 71.7L941.4 72.7L941 73.7L940.6 74.8L940.3 75.8L939.9 77L939.6 78.1L939.3 79.3L939 80.5L938.7 81.7L938.5 83L938.2 84.2L937.9 85.5L937.7 86.8L937.5 88.1L937.2 89.4L937 90.8L936.8 92.1L936.6 93.5L936.4 94.9L936.2 96.2L936 97.6L935.8 99L935.6 100.5L935.4 101.9L935.2 103.3L935 104.7L934.8 106.2L934.6 107.6L934.4 109.1L934.2 110.6L934 112L933.8 113.5" fill="none" stroke="#555555" stroke-width="1.39" stroke-dasharray="1.39 2.29"/>
<path d="M1381.1 231.4L1378.5 229.8L1375.9 228.3L1373.3 226.7L1370.6 225.2L1367.9 223.6L1365.2 222.1L1362.5 220.5L1359.7 219L1356.9 217.4L1354 215.9L1351.1 214.3L1348.2 212.8L1345.3 211.2L1342.3 209.7L1339.3 208.1L1336.3 206.6L1333.3 205L1330.2 203.5L1327.1 201.9L1324 200.4L1320.8 198.9L1317.6 197.3L1314.4 195.8L1311.2 194.3L1307.9 192.7L1304.6 191.2L1301.3 189.7L1298 188.1L1294.6 186.6L1291.3 185.1L1287.8 183.5L1284.4 182L1281 180.5L1277.5 179L1274 177.5L1270.5 175.9L1267 174.4L1263.4 172.9L1259.8 171.4L1256.2 169.9L1252.6 168.4L1249 166.9L1245.3 165.4L1241.7 163.9L1238 162.4L1234.3 160.9L1230.6 159.4L1226.9 157.9L1223.1 156.4L1219.4 154.9L1215.6 153.5L1211.8 152L1208 150.5L1204.2 149L1200.4 147.6L1196.5 146.1L1192.7 144.6L1188.9 143.2L1185 141.7L1181.1 140.3L1177.3 138.9L1173.4 137.4L1169.5 136L1165.6 134.6L1161.7 133.1L1157.8 131.7L1153.9 130.3L1150 128.9L1146.1 127.5L1142.2 126.1L1138.3 124.7L1134.4 123.3L1130.5 122L1126.6 120.6L1122.8 119.2L1118.9 117.9L1115 116.6L1111.2 115.2L1107.3 113.9L1103.5 112.6L1099.6 111.3L1095.8 110L1092 108.7L1088.3 107.5L1084.5 106.2L1080.8 105L1077 103.7L1073.4 102.5L1069.7 101.3L1066.1 100.1L1062.4 99L1058.9 97.8L1055.3 96.7L1051.8 95.6L1048.3 94.5L1044.9 93.4L1041.5 92.4L1038.2 91.4L1034.9 90.4L1031.6 89.4L1028.4 88.5L1025.2 87.6L1022.1 86.7L1019.1 85.8L1016.1 85L1013.2 84.2L1010.4 83.4L1007.6 82.7L1004.8 82.1L1002.2 81.4L999.6 80.8L997.1 80.3L994.7 79.7L992.3 79.3L990.1 78.8L987.9 78.5L985.7 78.1L983.7 77.9L981.7 77.6L979.8 77.5L978 77.3L976.3 77.3L974.6 77.2L973 77.3L971.5 77.3L970.1 77.5L968.7 77.7L967.4 77.9L966.1 78.2L964.9 78.5L963.8 78.9L962.7 79.3L961.7 79.8L960.7 80.3L959.7 80.9L958.8 81.5L958 82.1L957.2 82.8L956.4 83.5L955.6 84.3L954.9 85.1L954.2 85.9L953.6 86.8L952.9 87.6L952.3 88.6L951.7 89.5L951.1 90.5L950.6 91.5L950 92.5L949.5 93.6L949 94.6L948.5 95.7L948 96.8L947.5 98L947 99.1L946.6 100.3L946.1 101.5L945.7 102.7L945.2 103.9L944.8 105.1L944.4 106.3L943.9 107.6L943.5 108.9L943.1 110.1L942.7 111.4L942.3 112.7L941.8 114L941.4 115.4L941 116.7L940.6 118L940.2 119.4L939.8 120.7L939.4 122.1L939 123.5L938.6 124.9L938.2 126.2" fill="none" stroke="#555555" stroke-width="1.39" stroke-dasharray="1.39 2.29"/>
<path d="M1373 250L1370.9 248.5L1368.7 247L1366.5 245.5L1364.3 244L1362 242.4L1359.7 240.9L1357.4 239.4L1355.1 237.9L1352.7 236.4L1350.3 234.9L1347.9 233.4L1345.4 231.9L1343 230.4L1340.4 228.9L1337.9 227.4L1335.3 225.9L1332.8 224.4L1330.1 222.9L1327.5 221.4L1324.8 219.9L1322.2 218.4L1319.4 216.9L1316.7 215.5L1313.9 214L1311.1 212.5L1308.3 211L1305.5 209.5L1302.6 208L1299.8 206.6L1296.9 205.1L1293.9 203.6L1291 202.1L1288 200.7L1285 199.2L1282 197.7L1279 196.3L1276 194.8L1272.9 193.3L1269.8 191.9L1266.7 190.4L1263.6 189L1260.4 187.5L1257.3 186.1L1254.1 184.6L1250.9 183.2L1247.7 181.7L1244.5 180.3L1241.3 178.9L1238 177.4L1234.7 176L1231.5 174.6L1228.2 173.2L1224.9 171.8L1221.6 170.3L1218.2 168.9L1214.9 167.5L1211.5 166.1L1208.2 164.7L1204.8 163.3L1201.4 161.9L1198.1 160.6L1194.7 159.2L1191.3 157.8L1187.8 156.4L1184.4 155.1L1181 153.7L1177.6 152.4L1174.2 151L1170.7 149.7L1167.3 148.3L1163.9 147L1160.4 145.7L1157 144.4L1153.6 143L1150.1 141.7L1146.7 140.4L1143.3 139.2L1139.8 137.9L1136.4 136.6L1133 135.3L1129.6 134.1L1126.2 132.8L1122.8 131.6L1119.4 130.4L1116 129.2L1112.7 128L1109.3 126.8L1106 125.6L1102.7 124.4L1099.3 123.2L1096.1 122.1L1092.8 121L1089.5 119.9L1086.3 118.7L1083.1 117.7L1079.9 116.6L1076.7 115.5L1073.5 114.5L1070.4 113.4L1067.3 112.4L1064.2 111.4L1061.2 110.5L1058.2 109.5L1055.2 108.6L1052.3 107.7L1049.4 106.8L1046.5 105.9L1043.6 105.1L1040.8 104.3L1038.1 103.5L1035.3 102.7L1032.7 101.9L1030 101.2L1027.4 100.5L1024.9 99.9L1022.4 99.2L1019.9 98.6L1017.5 98.1L1015.1 97.5L1012.8 97L1010.5 96.5L1008.3 96.1L1006.2 95.7L1004 95.3L1002 95L999.9 94.7L998 94.4L996.1 94.2L994.2 94L992.4 93.9L990.6 93.7L988.9 93.7L987.2 93.6L985.6 93.6L984 93.7L982.5 93.8L981 93.9L979.5 94L978.1 94.2L976.7 94.4L975.4 94.7L974.1 95L972.9 95.4L971.6 95.7L970.5 96.1L969.3 96.6L968.2 97.1L967.1 97.6L966 98.1L965 98.7L964 99.3L963 99.9L962 100.6L961 101.3L960.1 102L959.2 102.8L958.3 103.5L957.4 104.3L956.6 105.2L955.7 106L954.9 106.9L954.1 107.8L953.2 108.7L952.4 109.6L951.7 110.6L950.9 111.5L950.1 112.5L949.3 113.5L948.6 114.6L947.8 115.6L947.1 116.7L946.4 117.8L945.6 118.8L944.9 120L944.2 121.1L943.5 122.2L942.8 123.4L942 124.5L941.3 125.7L940.6 126.9L939.9 128.1L939.2 129.3L938.5 130.5L937.8 131.7L937.1 133L936.4 134.2L935.7 135.5L935 136.7L934.4 138L933.7 139.3L933 140.6L932.3 141.9L931.6 143.2L930.9 144.5L930.2 145.8L929.5 147.1L928.8 148.4L928.1 149.8L927.4 151.1L926.8 152.5" fill="none" stroke="#555555" stroke-width="1.39" stroke-dasharray="1.39 2.29"/>
<path d="M1396 233.1L1393.3 231.6L1390.6 230.1L1387.9 228.6L1385.1 227.2L1382.3 225.7L1379.5 224.2L1376.6 222.7L1373.7 221.2L1370.8 219.7L1367.9 218.2L1364.9 216.7L1362 215.3L1358.9 213.8L1355.9 212.3L1352.8 210.8L1349.8 209.4L1346.6 207.9L1343.5 206.4L1340.3 204.9L1337.1 203.5L1333.9 202L1330.7 200.6L1327.4 199.1L1324.2 197.6L1320.9 196.2L1317.6 194.7L1314.2 193.3L1310.9 191.8L1307.5 190.4L1304.1 188.9L1300.6 187.5L1297.2 186.1L1293.8 184.6L1290.3 183.2L1286.8 181.8L1283.3 180.3L1279.8 178.9L1276.2 177.5L1272.7 176.1L1269.1 174.7L1265.5 173.3L1261.9 171.9L1258.3 170.5L1254.7 169.1L1251.1 167.7L1247.4 166.3L1243.8 164.9L1240.1 163.5L1236.5 162.2L1232.8 160.8L1229.1 159.4L1225.4 158.1L1221.7 156.7L1218 155.4L1214.3 154L1210.6 152.7L1206.9 151.4L1203.2 150L1199.4 148.7L1195.7 147.4L1192 146.1L1188.3 144.8L1184.6 143.5L1180.9 142.2L1177.2 141L1173.5 139.7L1169.8 138.4L1166.1 137.2L1162.4 136L1158.7 134.7L1155 133.5L1151.4 132.3L1147.7 131.1L1144.1 129.9L1140.5 128.7L1136.9 127.6L1133.3 126.4L1129.7 125.3L1126.2 124.2L1122.7 123L1119.2 121.9L1115.7 120.9L1112.2 119.8L1108.8 118.7L1105.4 117.7L1102 116.7L1098.6 115.7L1095.3 114.7L1092 113.7L1088.7 112.7L1085.5 111.8L1082.3 110.9L1079.2 110L1076.1 109.1L1073 108.3L1070 107.5L1067 106.7L1064 105.9L1061.1 105.1L1058.3 104.4L1055.5 103.7L1052.7 103L1050 102.4L1047.4 101.8L1044.8 101.2L1042.2 100.6L1039.7 100.1L1037.3 99.6L1034.9 99.1L1032.6 98.7L1030.3 98.3L1028.1 98L1026 97.6L1023.9 97.3L1021.8 97.1L1019.9 96.9L1018 96.7L1016.1 96.5L1014.3 96.4L1012.5 96.3L1010.8 96.3L1009.2 96.3L1007.6 96.3L1006.1 96.4L1004.6 96.5L1003.2 96.6L1001.8 96.8L1000.5 97L999.2 97.3L998 97.6L996.8 97.9L995.6 98.3L994.5 98.7L993.5 99.1L992.5 99.5L991.5 100L990.5 100.6L989.6 101.1L988.7 101.7L987.9 102.3L987 102.9L986.3 103.6L985.5 104.3L984.7 105L984 105.8L983.3 106.6L982.7 107.4L982 108.2L981.4 109L980.8 109.9L980.2 110.8L979.6 111.7L979 112.6L978.5 113.6L978 114.5L977.4 115.5L976.9 116.5L976.4 117.6L975.9 118.6L975.5 119.6L975 120.7L974.5 121.8L974.1 122.9L973.6 124L973.2 125.1L972.7 126.3L972.3 127.4L971.9 128.6L971.5 129.8L971 131L970.6 132.2L970.2 133.4L969.8 134.6L969.4 135.8L969 137L968.6 138.3L968.2 139.5L967.8 140.8L967.4 142.1L967 143.4L966.6 144.6L966.2 145.9L965.8 147.2L965.4 148.6L965 149.9L964.6 151.2L964.2 152.5L963.8 153.9L963.4 155.2L963 156.5L962.6 157.9L962.2 159.3L961.8 160.6L961.4 162L961 163.4L960.6 164.7L960.2 166.1L959.8 167.5L959.4 168.9L959 170.3L958.6 171.7L958.2 173.1L957.7 174.5" fill="none" stroke="#555555" stroke-width="1.39" stroke-dasharray="1.39 2.29"/>
<path d="M1371.4 259L1369.2 257.8L1367.1 256.6L1364.9 255.4L1362.7 254.2L1360.5 253L1358.2 251.8L1356 250.7L1353.7 249.5L1351.5 248.3L1349.2 247.1L1346.9 245.9L1344.6 244.8L1342.2 243.6L1339.9 242.4L1337.5 241.3L1335.1 240.1L1332.7 238.9L1330.3 237.8L1327.9 236.6L1325.5 235.5L1323.1 234.3L1320.6 233.2L1318.1 232.1L1315.7 230.9L1313.2 229.8L1310.7 228.7L1308.2 227.5L1305.7 226.4L1303.2 225.3L1300.6 224.2L1298.1 223.1L1295.5 222L1293 220.9L1290.4 219.8L1287.8 218.7L1285.3 217.6L1282.7 216.6L1280.1 215.5L1277.5 214.4L1274.9 213.4L1272.3 212.3L1269.7 211.3L1267.1 210.2L1264.4 209.2L1261.8 208.2L1259.2 207.1L1256.5 206.1L1253.9 205.1L1251.3 204.1L1248.6 203.1L1246 202.1L1243.4 201.1L1240.7 200.1L1238.1 199.1L1235.5 198.2L1232.8 197.2L1230.2 196.3L1227.6 195.3L1224.9 194.4L1222.3 193.4L1219.7 192.5L1217 191.6L1214.4 190.7L1211.8 189.8L1209.2 188.9L1206.6 188L1204 187.1L1201.4 186.3L1198.8 185.4L1196.2 184.6L1193.7 183.7L1191.1 182.9L1188.5 182.1L1186 181.3L1183.5 180.5L1180.9 179.7L1178.4 178.9L1175.9 178.2L1173.4 177.4L1170.9 176.7L1168.4 175.9L1165.9 175.2L1163.5 174.5L1161 173.8L1158.6 173.1L1156.2 172.4L1153.8 171.8L1151.4 171.1L1149 170.5L1146.7 169.8L1144.3 169.2L1142 168.6L1139.7 168L1137.4 167.5L1135.1 166.9L1132.8 166.3L1130.6 165.8L1128.3 165.3L1126.1 164.8L1123.9 164.3L1121.7 163.8L1119.5 163.4L1117.4 162.9L1115.3 162.5L1113.2 162.1L1111.1 161.7L1109 161.3L1106.9 160.9L1104.9 160.5L1102.9 160.2L1100.9 159.9L1098.9 159.6L1096.9 159.3L1095 159L1093.1 158.7L1091.2 158.5L1089.3 158.3L1087.4 158L1085.6 157.9L1083.7 157.7L1081.9 157.5L1080.1 157.4L1078.4 157.2L1076.6 157.1L1074.9 157L1073.2 157L1071.5 156.9L1069.8 156.9L1068.1 156.8L1066.5 156.8L1064.9 156.8L1063.3 156.9L1061.7 156.9L1060.1 157L1058.6 157L1057.1 157.1L1055.5 157.3L1054 157.4L1052.6 157.5L1051.1 157.7L1049.6 157.9L1048.2 158.1L1046.8 158.3L1045.4 158.5L1044 158.8L1042.6 159L1041.2 159.3L1039.9 159.6L1038.6 159.9L1037.2 160.2L1035.9 160.6L1034.6 160.9L1033.3 161.3L1032.1 161.7L1030.8 162.1L1029.6 162.5L1028.3 163L1027.1 163.4L1025.9 163.9L1024.7 164.4L1023.5 164.8L1022.3 165.4L1021.1 165.9L1019.9 166.4L1018.8 167L1017.6 167.5L1016.5 168.1L1015.3 168.7L1014.2 169.3L1013.1 169.9L1011.9 170.5L1010.8 171.2L1009.7 171.8L1008.6 172.5L1007.5 173.2L1006.4 173.9L1005.3 174.6L1004.3 175.3L1003.2 176L1002.1 176.7L1001 177.5L1000 178.3L998.9 179L997.9 179.8L996.8 180.6L995.8 181.4L994.7 182.2L993.7 183L992.6 183.8L991.6 184.7L990.6 185.5L989.5 186.4L988.5 187.3L987.5 188.1L986.4 189L985.4 189.9L984.4 190.8L983.3 191.7L982.3 192.6L981.3 193.6L980.3 194.5L979.2 195.4L978.2 196.4L977.2 197.3L976.2 198.3L975.1 199.3L974.1 200.2L973.1 201.2L972.1 202.2L971.1 203.2L970 204.2L969 205.2L968 206.2L967 207.3L965.9 208.3L964.9 209.3L963.9 210.4L962.9 211.4L961.8 212.4L960.8 213.5L959.8 214.6L958.8 215.6L957.7 216.7L956.7 217.8L955.7 218.9" fill="none" stroke="#555555" stroke-width="1.39" stroke-dasharray="1.39 2.29"/>
</g>
<path d="M890.9 182.4L889.5 181.7L888 181L886.6 180.3L885.1 179.6L883.7 178.9L882.2 178.3L880.8 177.6L879.3 177L877.8 176.3L876.4 175.7L874.9 175.1L873.5 174.5L872 174L870.5 173.4L869.1 172.8L867.6 172.3L866.1 171.8L864.7 171.3L863.2 170.8L861.7 170.3L860.2 169.8L858.7 169.4L857.2 168.9L855.7 168.5L854.3 168.1L852.8 167.7L851.3 167.3L849.7 166.9L848.2 166.6L846.7 166.2L845.2 165.9L843.7 165.6L842.1 165.3L840.6 165L839.1 164.8L837.5 164.5L835.9 164.3L834.4 164.1L832.8 163.9L831.2 163.7L829.7 163.6L828.1 163.4L826.5 163.3L824.9 163.2L823.3 163.1L821.6 163L820 162.9" fill="none" stroke="#8a8a8a" stroke-width="1.5"/>
<path d="M782.8 176.5L781.1 178.2L779.3 179.8L777.6 181.5L775.9 183.1L774.2 184.8L772.5 186.5L770.8 188.2L769.2 189.8L767.5 191.5" fill="none" stroke="#8a8a8a" stroke-width="1.5"/>
<path d="M873.8 241L873.3 239.3L872.8 237.6L872.4 235.9L871.9 234.2L871.4 232.5L871 230.8L870.5 229.1L870.1 227.4L869.6 225.7" fill="none" stroke="#8a8a8a" stroke-width="1.5"/>
<path d="M988.3 227.5L988 229.1L987.7 230.6L987.3 232.2L987 233.8L986.7 235.3L986.3 236.9L986 238.5L985.6 240L985.2 241.6L984.9 243.2L984.5 244.8L984.1 246.3L983.7 247.9L983.3 249.5L982.9 251.1L982.5 252.6L982.1 254.2L981.7 255.8" fill="none" stroke="#8a8a8a" stroke-width="1.5"/>
<path d="M991.7 240L992.1 241.9L992.5 243.7L992.9 245.6L993.3 247.5" fill="none" stroke="#8a8a8a" stroke-width="1.5"/>
<path d="M1048.3 294.2L1049 295.9L1049.6 297.5L1050.3 299.2L1050.9 300.8L1051.5 302.5L1052.1 304.2L1052.7 305.8L1053.3 307.5" fill="none" stroke="#8a8a8a" stroke-width="1.5"/>
<path d="M716.7 204.2L716.2 203.1L715.7 202L715.2 200.9L714.8 199.9L714.3 198.8L713.8 197.8L713.3 196.7" fill="none" stroke="#8a8a8a" stroke-width="1.5"/>
<path d="M728.3 211.7L727.8 210.5L727.3 209.3L726.9 208.1L726.4 206.9L725.9 205.7L725.5 204.5L725 203.3" fill="none" stroke="#8a8a8a" stroke-width="1.5"/>
<path d="M825.3 303.6L824.5 305L823.8 306.5" fill="none" stroke="#8a8a8a" stroke-width="1.5"/>
<path d="M800.7 313L799.9 314L799.2 315.1" fill="none" stroke="#8a8a8a" stroke-width="1.5"/>
<path d="M768.2 310.8L767.8 311.9L767.5 313" fill="none" stroke="#8a8a8a" stroke-width="1.5"/>
<path d="M751.6 306.5L751.2 307.2L750.8 307.9" fill="none" stroke="#8a8a8a" stroke-width="1.5"/>
<path d="M855.6 302.1L855.1 304L854.7 306L854.2 307.9" fill="none" stroke="#8a8a8a" stroke-width="1.5"/>
<path d="M858.5 301.4L857.9 303L857.4 304.6L856.8 306.3L856.3 307.9" fill="none" stroke="#8a8a8a" stroke-width="1.5"/>
<path d="M842.6 305.8L843.5 307.2L844.4 308.6L845.3 310.1L846.2 311.5" fill="none" stroke="#8a8a8a" stroke-width="1.5"/>
<path d="M877.3 301.4L876.7 303L876.2 304.6L875.6 306.3L875.1 307.9" fill="none" stroke="#8a8a8a" stroke-width="1.5"/>
<path d="M891 315.1L889 315.3L887 315.5L885.1 315.7L883.1 315.9" fill="none" stroke="#8a8a8a" stroke-width="1.5"/>
<path d="M903.3 318.8L901.9 320.1L900.4 321.4L899 322.7L897.5 324L896.1 325.3" fill="none" stroke="#8a8a8a" stroke-width="1.5"/>
<path d="M927.9 333.9L926.8 335L925.7 336.1" fill="none" stroke="#8a8a8a" stroke-width="1.5"/>
<path d="M935.8 332.5L934.6 333.6L933.3 334.7L932.1 335.7L930.8 336.8" fill="none" stroke="#8a8a8a" stroke-width="1.5"/>
<path d="M886 313.7L885.2 311.5L884.5 309.4" fill="none" stroke="#8a8a8a" stroke-width="1.5"/>
<path d="M876.6 109.9L876.2 109.9L875.7 109.9L875.3 109.9L874.9 110L874.4 110L874 110.1L873.6 110.1L873.1 110.2L872.7 110.3L872.2 110.4L871.8 110.5L871.4 110.6L870.9 110.7L870.5 110.8L870 110.9L869.6 111.1L869.1 111.2L868.7 111.4L868.2 111.6L867.8 111.7L867.3 111.9L866.9 112.1L866.4 112.3L866 112.5L865.5 112.7L865.1 113L864.6 113.2L864.2 113.4L863.7 113.7L863.3 113.9L862.8 114.2L862.4 114.4L862 114.7L861.5 115L861.1 115.3L860.7 115.6L860.2 115.9L859.8 116.2L859.4 116.5L859 116.8L858.5 117.1L858.1 117.5L857.7 117.8L857.3 118.1L856.9 118.5L856.5 118.8L856.1 119.2L855.7 119.5L855.3 119.9L854.9 120.3L854.6 120.6L854.2 121L853.8 121.4L853.5 121.8L853.1 122.1L852.7 122.5L852.4 122.9L852.1 123.3L851.7 123.7L851.4 124.1L851.1 124.5L850.7 124.9L850.4 125.3L850.1 125.7L849.8 126.1L849.5 126.6L849.2 127L849 127.4L848.7 127.8L848.4 128.2L848.2 128.6L847.9 129.1L847.7 129.5L847.4 129.9L847.2 130.3L847 130.8L846.8 131.2L846.6 131.6L846.4 132L846.2 132.4L846 132.9L845.8 133.3L845.6 133.7L845.5 134.1L845.3 134.6L845.2 135L845 135.4L844.9 135.8L844.8 136.2L844.7 136.6L844.6 137.1L844.5 137.5L844.4 137.9L844.3 138.3L844.2 138.7L844.2 139.1L844.1 139.5L844 139.9L844 140.3L844 140.7L844 141.1L843.9 141.5L843.9 141.9L843.9 142.3L843.9 142.7L844 143L844 143.4L844 143.8L844.1 144.2L844.1 144.5L844.2 144.9L844.2 145.3L844.3 145.6L844.4 146L844.5 146.3L844.6 146.7L844.7 147L844.8 147.4L844.9 147.7L845 148L845.2 148.3L845.3 148.7L845.5 149L845.6 149.3L845.8 149.6L845.9 149.9L846.1 150.2L846.3 150.5L846.5 150.8L846.7 151.1L846.9 151.4L847.1 151.7L847.3 151.9L847.6 152.2L847.8 152.5L848 152.7L848.3 153L848.5 153.2L848.8 153.5L849.1 153.7L849.3 153.9L849.6 154.2L849.9 154.4L850.2 154.6L850.5 154.8L850.8 155L851.1 155.2L851.4 155.4L851.7 155.6L852 155.8L852.3 156L852.7 156.1L853 156.3L853.3 156.5L853.7 156.6L854 156.8L854.4 156.9L854.8 157.1L855.1 157.2L855.5 157.3L855.8 157.4L856.2 157.5L856.6 157.7L857 157.8L857.4 157.8L857.8 157.9L858.1 158L858.5 158.1L858.9 158.2L859.3 158.2L859.7 158.3L860.1 158.3L860.5 158.4L861 158.4L861.4 158.5L861.8 158.5L862.2 158.5L862.6 158.5L863 158.5L863.5 158.5L863.9 158.5L864.3 158.5L864.7 158.5L865.2 158.5L865.6 158.5L866 158.4L866.4 158.4L866.9 158.3L867.3 158.3L867.7 158.2L868.2 158.2L868.6 158.1L869 158L869.5 157.9L869.9 157.8L870.3 157.8L870.8 157.7L871.2 157.5L871.6 157.4L872 157.3L872.5 157.2L872.9 157.1L873.3 156.9L873.7 156.8L874.2 156.6L874.6 156.5L875 156.3L875.4 156.1L875.8 156L876.3 155.8L876.7 155.6L877.1 155.4L877.5 155.2L877.9 155L878.3 154.8L878.7 154.6L879.1 154.4L879.5 154.2L879.9 153.9L880.3 153.7L880.6 153.5L881 153.2L881.4 153L881.8 152.7L882.1 152.5L882.5 152.2L882.9 151.9L883.2 151.7L883.6 151.4L883.9 151.1L884.3 150.8L884.6 150.5L885 150.2L885.3 149.9L885.6 149.6L885.9 149.3L886.3 149L886.6 148.7L886.9 148.3L887.2 148L887.5 147.7L887.8 147.4L888.1 147L888.3 146.7L888.6 146.3L888.9 146L889.2 145.6L889.4 145.3L889.7 144.9L889.9 144.5L890.2 144.2L890.4 143.8L890.6 143.4L890.8 143L891.1 142.7L891.3 142.3L891.5 141.9L891.7 141.5L891.9 141.1L892 140.7L892.2 140.3L892.4 139.9L892.6 139.5L892.7 139.1L892.9 138.7L893 138.3L893.2 137.9L893.3 137.5L893.4 137.1L893.5 136.6L893.6 136.2L893.7 135.8L893.8 135.4L893.9 135L894 134.6L894.1 134.1L894.1 133.7L894.2 133.3L894.2 132.9L894.3 132.4L894.3 132L894.4 131.6L894.4 131.2L894.4 130.8L894.4 130.3L894.4 129.9L894.4 129.5L894.4 129.1L894.4 128.6L894.3 128.2L894.3 127.8L894.3 127.4L894.2 127L894.2 126.6L894.1 126.1L894 125.7L893.9 125.3L893.9 124.9L893.8 124.5L893.7 124.1L893.6 123.7L893.4 123.3L893.3 122.9L893.2 122.5L893.1 122.1L892.9 121.8L892.8 121.4L892.6 121L892.5 120.6L892.3 120.3L892.1 119.9L891.9 119.5L891.7 119.2L891.5 118.8L891.3 118.5L891.1 118.1L890.9 117.8L890.7 117.5L890.5 117.1L890.2 116.8L890 116.5L889.7 116.2L889.5 115.9L889.2 115.6L889 115.3L888.7 115L888.4 114.7L888.1 114.4L887.9 114.2L887.6 113.9L887.3 113.7L887 113.4L886.7 113.2L886.3 113L886 112.7L885.7 112.5L885.4 112.3L885 112.1L884.7 111.9L884.3 111.7L884 111.6L883.6 111.4L883.3 111.2L882.9 111.1L882.6 110.9L882.2 110.8L881.8 110.7L881.4 110.6L881 110.5L880.7 110.4L880.3 110.3L879.9 110.2L879.5 110.1L879.1 110.1L878.7 110L878.3 110L877.8 109.9L877.4 109.9L877 109.9L876.6 109.9" fill="none" stroke="#ffa500" stroke-width="2"/>
<path d="M1009.6 62.6L1009.4 62.6L1009.2 62.6L1009 62.6L1008.8 62.7L1008.7 62.7L1008.5 62.7L1008.4 62.7L1008.2 62.7L1008.1 62.8L1008 62.8L1007.8 62.8L1007.7 62.9L1007.6 62.9L1007.5 62.9L1007.5 63L1007.4 63L1007.3 63.1L1007.3 63.1L1007.2 63.2L1007.2 63.2L1007.2 63.3L1007.2 63.4L1007.2 63.4L1007.2 63.5L1007.2 63.6L1007.2 63.7L1007.2 63.7L1007.2 63.8L1007.3 63.9L1007.3 64L1007.4 64.1L1007.5 64.2L1007.5 64.3L1007.6 64.4L1007.7 64.5L1007.8 64.6L1007.9 64.7L1008 64.8L1008.2 64.9L1008.3 65L1008.4 65.1L1008.6 65.2L1008.7 65.4L1008.9 65.5L1009.1 65.6L1009.2 65.7L1009.4 65.9L1009.6 66L1009.8 66.1L1010 66.3L1010.2 66.4L1010.4 66.5L1010.7 66.7L1010.9 66.8L1011.1 67L1011.4 67.1L1011.6 67.3L1011.9 67.4L1012.1 67.6L1012.4 67.7L1012.7 67.9L1012.9 68L1013.2 68.2L1013.5 68.4L1013.8 68.5L1014.1 68.7L1014.4 68.9L1014.7 69L1015.1 69.2L1015.4 69.4L1015.7 69.5L1016 69.7L1016.4 69.9L1016.7 70.1L1017.1 70.2L1017.4 70.4L1017.8 70.6L1018.1 70.8L1018.5 71L1018.9 71.2L1019.3 71.3L1019.6 71.5L1020 71.7L1020.4 71.9L1020.8 72.1L1021.2 72.3L1021.6 72.5L1022 72.7L1022.4 72.9L1022.8 73.1L1023.3 73.2L1023.7 73.4L1024.1 73.6L1024.5 73.8L1025 74L1025.4 74.2L1025.8 74.4L1026.3 74.6L1026.7 74.8L1027.2 75L1027.6 75.2L1028.1 75.4L1028.5 75.7L1029 75.9L1029.5 76.1L1029.9 76.3L1030.4 76.5L1030.9 76.7L1031.4 76.9L1031.8 77.1L1032.3 77.3L1032.8 77.5L1033.3 77.7L1033.8 77.9L1034.3 78.1L1034.8 78.4L1035.3 78.6L1035.8 78.8L1036.3 79L1036.8 79.2L1037.3 79.4L1037.8 79.6L1038.3 79.8L1038.8 80L1039.3 80.3L1039.9 80.5L1040.4 80.7L1040.9 80.9L1041.4 81.1L1041.9 81.3L1042.5 81.5L1043 81.7L1043.5 82L1044.1 82.2L1044.6 82.4L1045.1 82.6L1045.7 82.8L1046.2 83L1046.7 83.2L1047.3 83.4L1047.8 83.7L1048.4 83.9L1048.9 84.1L1049.5 84.3L1050 84.5L1050.6 84.7L1051.1 84.9L1051.7 85.1L1052.2 85.3L1052.8 85.6L1053.3 85.8L1053.9 86L1054.4 86.2L1055 86.4L1055.5 86.6L1056.1 86.8L1056.7 87L1057.2 87.2L1057.8 87.4L1058.3 87.7L1058.9 87.9L1059.5 88.1L1060 88.3L1060.6 88.5L1061.2 88.7L1061.7 88.9L1062.3 89.1L1062.9 89.3L1063.4 89.5L1064 89.7L1064.6 89.9L1065.1 90.1L1065.7 90.3L1066.3 90.5L1066.8 90.7L1067.4 90.9L1068 91.1L1068.5 91.3L1069.1 91.5L1069.7 91.7L1070.3 91.9L1070.8 92.1L1071.4 92.3L1072 92.5L1072.5 92.7L1073.1 92.9L1073.7 93.1L1074.2 93.3L1074.8 93.5L1075.4 93.7L1075.9 93.9L1076.5 94L1077.1 94.2L1077.7 94.4L1078.2 94.6L1078.8 94.8L1079.4 95L1079.9 95.2L1080.5 95.4L1081.1 95.5L1081.6 95.7L1082.2 95.9L1082.7 96.1L1083.3 96.3L1083.9 96.5L1084.4 96.6L1085 96.8L1085.6 97L1086.1 97.2L1086.7 97.4L1087.2 97.5L1087.8 97.7L1088.4 97.9L1088.9 98.1L1089.5 98.2L1090 98.4L1090.6 98.6L1091.1 98.7L1091.7 98.9L1092.2 99.1L1092.8 99.2L1093.3 99.4L1093.9 99.6L1094.4 99.7L1095 99.9L1095.5 100.1L1096.1 100.2L1096.6 100.4L1097.2 100.6L1097.7 100.7L1098.2 100.9L1098.8 101L1099.3 101.2L1099.8 101.3L1100.4 101.5L1100.9 101.6L1101.4 101.8L1102 101.9L1102.5 102.1L1103 102.2L1103.6 102.4L1104.1 102.5L1104.6 102.7L1105.1 102.8L1105.7 103L1106.2 103.1L1106.7 103.3L1107.2 103.4L1107.7 103.5L1108.2 103.7L1108.7 103.8L1109.2 104L1109.8 104.1L1110.3 104.2L1110.8 104.4L1111.3 104.5L1111.8 104.6L1112.3 104.7L1112.8 104.9L1113.3 105L1113.7 105.1L1114.2 105.3L1114.7 105.4L1115.2 105.5L1115.7 105.6L1116.2 105.7L1116.7 105.9L1117.1 106L1117.6 106.1L1118.1 106.2L1118.6 106.3L1119 106.4L1119.5 106.6L1120 106.7L1120.4 106.8L1120.9 106.9L1121.4 107L1121.8 107.1L1122.3 107.2L1122.7 107.3L1123.2 107.4L1123.6 107.5L1124.1 107.6L1124.5 107.7L1125 107.8L1125.4 107.9L1125.8 108L1126.3 108.1L1126.7 108.2L1127.1 108.3L1127.6 108.4L1128 108.5L1128.4 108.6L1128.8 108.6L1129.3 108.7L1129.7 108.8L1130.1 108.9L1130.5 109L1130.9 109.1L1131.3 109.1L1131.7 109.2L1132.1 109.3L1132.5 109.4L1132.9 109.4L1133.3 109.5L1133.7 109.6L1134.1 109.7L1134.4 109.7L1134.8 109.8L1135.2 109.9L1135.6 109.9L1135.9 110L1136.3 110.1L1136.7 110.1L1137 110.2L1137.4 110.2L1137.8 110.3L1138.1 110.4L1138.5 110.4L1138.8 110.5L1139.2 110.5L1139.5 110.6L1139.8 110.6L1140.2 110.7L1140.5 110.7L1140.8 110.8L1141.2 110.8L1141.5 110.8L1141.8 110.9L1142.1 110.9L1142.4 111L1142.7 111L1143 111L1143.4 111.1L1143.7 111.1L1144 111.1L1144.2 111.2L1144.5 111.2L1144.8 111.2L1145.1 111.3L1145.4 111.3L1145.7 111.3L1145.9 111.3L1146.2 111.4L1146.5 111.4L1146.7 111.4L1147 111.4L1147.3 111.4L1147.5 111.5L1147.8 111.5L1148 111.5L1148.3 111.5L1148.5 111.5L1148.7 111.5L1149 111.5L1149.2 111.5L1149.4 111.5L1149.6 111.5L1149.9 111.5L1150.1 111.5L1150.3 111.5L1150.5 111.5L1150.7 111.5L1150.9 111.5L1151.1 111.5L1151.3 111.5L1151.5 111.5L1151.6 111.5L1151.8 111.5L1152 111.5L1152.2 111.5L1152.3 111.4L1152.5 111.4L1152.7 111.4L1152.8 111.4L1153 111.4L1153.1 111.3L1153.3 111.3L1153.4 111.3L1153.6 111.3L1153.7 111.2L1153.8 111.2L1154 111.2L1154.1 111.1L1154.2 111.1L1154.3 111.1L1154.4 111L1154.5 111L1154.6 111L1154.7 110.9L1154.8 110.9L1154.9 110.8L1155 110.8L1155.1 110.8L1155.2 110.7L1155.2 110.7L1155.3 110.6L1155.4 110.6" fill="none" stroke="#e31af7" stroke-width="2"/>
<path d="M649.6 110.5L650 110.5L650.3 110.4L650.7 110.4L651.1 110.3L651.4 110.2L651.8 110.2L652.2 110.1L652.6 110.1L652.9 110L653.3 109.9L653.7 109.9L654.1 109.8L654.5 109.7L654.9 109.7L655.3 109.6L655.7 109.5L656.1 109.4L656.5 109.4L656.9 109.3L657.3 109.2L657.7 109.1L658.1 109.1L658.6 109L659 108.9L659.4 108.8L659.9 108.7L660.3 108.6L660.7 108.6L661.2 108.5L661.6 108.4L662 108.3L662.5 108.2L662.9 108.1L663.4 108L663.8 107.9L664.3 107.8L664.8 107.7L665.2 107.6L665.7 107.5L666.2 107.4L666.6 107.3L667.1 107.2L667.6 107.1L668.1 107L668.5 106.9L669 106.8L669.5 106.7L670 106.6L670.5 106.4L671 106.3L671.5 106.2L672 106.1L672.5 106L673 105.9L673.5 105.7L674 105.6L674.5 105.5L675 105.4L675.5 105.3L676 105.1L676.5 105L677 104.9L677.6 104.7L678.1 104.6L678.6 104.5L679.1 104.4L679.7 104.2L680.2 104.1L680.7 104L681.3 103.8L681.8 103.7L682.3 103.5L682.9 103.4L683.4 103.3L684 103.1L684.5 103L685 102.8L685.6 102.7L686.1 102.5L686.7 102.4L687.2 102.2L687.8 102.1L688.4 101.9L688.9 101.8L689.5 101.6L690 101.5L690.6 101.3L691.2 101.2L691.7 101L692.3 100.9L692.9 100.7L693.4 100.6L694 100.4L694.6 100.2L695.2 100.1L695.7 99.9L696.3 99.7L696.9 99.6L697.5 99.4L698 99.2L698.6 99.1L699.2 98.9L699.8 98.7L700.4 98.6L701 98.4L701.5 98.2L702.1 98.1L702.7 97.9L703.3 97.7L703.9 97.5L704.5 97.4L705.1 97.2L705.7 97L706.3 96.8L706.9 96.6L707.5 96.5L708.1 96.3L708.7 96.1L709.3 95.9L709.9 95.7L710.5 95.5L711.1 95.4L711.7 95.2L712.3 95L712.9 94.8L713.5 94.6L714.1 94.4L714.7 94.2L715.3 94L715.9 93.9L716.5 93.7L717.1 93.5L717.7 93.3L718.3 93.1L718.9 92.9L719.5 92.7L720.1 92.5L720.7 92.3L721.3 92.1L721.9 91.9L722.5 91.7L723.1 91.5L723.8 91.3L724.4 91.1L725 90.9L725.6 90.7L726.2 90.5L726.8 90.3L727.4 90.1L728 89.9L728.6 89.7L729.2 89.5L729.8 89.3L730.4 89.1L731 88.9L731.6 88.7L732.2 88.5L732.8 88.3L733.4 88.1L734 87.9L734.6 87.7L735.2 87.4L735.8 87.2L736.4 87L737 86.8L737.6 86.6L738.2 86.4L738.8 86.2L739.4 86L740 85.8L740.6 85.6L741.2 85.3L741.8 85.1L742.4 84.9L743 84.7L743.6 84.5L744.2 84.3L744.7 84.1L745.3 83.9L745.9 83.7L746.5 83.4L747.1 83.2L747.7 83L748.2 82.8L748.8 82.6L749.4 82.4L750 82.2L750.5 82L751.1 81.7L751.7 81.5L752.2 81.3L752.8 81.1L753.4 80.9L753.9 80.7L754.5 80.5L755.1 80.3L755.6 80L756.2 79.8L756.7 79.6L757.3 79.4L757.8 79.2L758.4 79L758.9 78.8L759.4 78.6L760 78.4L760.5 78.1L761 77.9L761.6 77.7L762.1 77.5L762.6 77.3L763.1 77.1L763.7 76.9L764.2 76.7L764.7 76.5L765.2 76.3L765.7 76.1L766.2 75.9L766.7 75.7L767.2 75.4L767.7 75.2L768.2 75L768.7 74.8L769.2 74.6L769.7 74.4L770.1 74.2L770.6 74L771.1 73.8L771.5 73.6L772 73.4L772.5 73.2L772.9 73.1L773.4 72.9L773.8 72.7L774.3 72.5L774.7 72.3L775.1 72.1L775.6 71.9L776 71.7L776.4 71.5L776.8 71.3L777.2 71.2L777.7 71L778.1 70.8L778.5 70.6L778.8 70.4L779.2 70.2L779.6 70.1L780 69.9L780.4 69.7L780.7 69.5L781.1 69.4L781.5 69.2L781.8 69L782.2 68.9L782.5 68.7L782.8 68.5L783.2 68.4L783.5 68.2L783.8 68L784.1 67.9L784.4 67.7L784.7 67.6L785 67.4L785.3 67.3L785.5 67.1L785.8 67L786.1 66.8L786.3 66.7L786.6 66.5L786.8 66.4L787.1 66.3L787.3 66.1L787.5 66L787.7 65.9L787.9 65.7L788.1 65.6L788.3 65.5L788.5 65.4L788.7 65.2L788.9 65.1L789 65L789.2 64.9L789.3 64.8L789.5 64.7L789.6 64.6L789.7 64.5L789.8 64.4L789.9 64.3L790 64.2L790.1 64.1L790.2 64L790.2 63.9L790.3 63.8L790.4 63.7L790.4 63.7L790.4 63.6L790.5 63.5L790.5 63.4L790.5 63.4L790.5 63.3L790.5 63.2L790.4 63.2L790.4 63.1L790.4 63.1" fill="none" stroke="#e31af7" stroke-width="2"/>
<path d="M1014.2 63L1013.8 63L1013.5 62.9L1013.2 62.9L1012.8 62.9L1012.5 62.8L1012.2 62.8L1011.9 62.8L1011.6 62.7L1011.3 62.7L1011.1 62.7L1010.8 62.7L1010.5 62.7L1010.3 62.6L1010.1 62.6L1009.8 62.6L1009.6 62.6" fill="none" stroke="#e31af7" stroke-width="2"/>
<path d="M782.3 283.4L782.3 281.7L782.3 280.1L782.3 278.5L782.4 276.9L782.4 275.3L782.5 273.6L782.5 272L782.6 270.4L782.7 268.8L782.8 267.2L782.9 265.6L783 263.9L783.1 262.3L783.2 260.7L783.4 259.1L783.5 257.5L783.7 255.8L783.8 254.2L784 252.6L784.2 251L784.4 249.4L784.6 247.8L784.8 246.1L785 244.5L785.2 242.9L785.5 241.3L785.7 239.7L786 238.1L786.2 236.4L786.5 234.8L786.8 233.2L787 231.6L787.3 230L787.6 228.4L788 226.7L788.3 225.1L788.6 223.5L788.9 221.9L789.3 220.3L789.6 218.7L790 217L790.4 215.4L790.7 213.8L791.1 212.2L791.5 210.6L791.9 209L792.3 207.4L792.8 205.7L793.2 204.1L793.6 202.5L794.1 200.9L794.5 199.3L795 197.7L795.4 196.1L795.9 194.5L796.4 192.8L796.9 191.2L797.4 189.6L797.9 188L798.4 186.4L798.9 184.8L799.5 183.2L800 181.6L800.5 180L801.1 178.4L801.6 176.7L802.2 175.1L802.8 173.5L803.4 171.9L803.9 170.3L804.5 168.7L805.1 167.1L805.7 165.5L806.4 163.9L807 162.3L807.6 160.7L808.2 159.1L808.9 157.5L809.5 155.9L810.2 154.3L810.8 152.7L811.5 151.1L812.2 149.5L812.9 147.9L813.5 146.3L814.2 144.7L814.9 143.1L815.6 141.5L816.3 139.9L817.1 138.3L817.8 136.7L818.5 135.1L819.2 133.5L820 131.9L820.7 130.4L821.5 128.8L822.2 127.2L823 125.6L823.7 124L824.5 122.4L825.3 120.9L826 119.3L826.8 117.7L827.6 116.1L828.4 114.6L829.2 113L830 111.4L830.8 109.9L831.5 108.3L832.3 106.7L833.2 105.2L834 103.6L834.8 102.1L835.6 100.5L836.4 99L837.2 97.5L838 95.9L838.8 94.4L839.6 92.9L840.5 91.3L841.3 89.8L842.1 88.3L842.9 86.8L843.7 85.3L844.5 83.8L845.3 82.3L846.1 80.9L846.9 79.4L847.7 77.9L848.4 76.5L849.2 75.1L850 73.6L850.7 72.2L851.4 70.8L852.1 69.5L852.8 68.1L853.5 66.8L854.2 65.4L854.8 64.2L855.4 62.9L855.9 61.7L856.4 60.5L856.9 59.3L857.3 58.2L857.6 57.1L857.8 56.1L858 55.1L858.1 54.3L858 53.4L857.9 52.7L857.5 52L857.1 51.4L856.4 51L855.5 50.6L854.5 50.3L853.2 50.2L851.6 50.1L849.8 50.2L847.8 50.4L845.5 50.7L842.9 51.1L840.1 51.6L837 52.2L833.7 52.9L830.2 53.7L826.5 54.5L822.6 55.5L818.6 56.4L814.3 57.5L810 58.6L805.5 59.7L800.9 60.9L796.2 62.1L791.4 63.3L786.5 64.6" stroke="#e31af7" fill="none" stroke-width="1.39" stroke-dasharray="1.39 2.29"/>
<path d="M1023 65.9L1026 67.2L1029.2 68.5L1032.4 69.9L1035.6 71.3L1038.9 72.7L1042.2 74.1L1045.5 75.5L1048.9 77L1052.3 78.4L1055.7 79.9L1059.1 81.3L1062.6 82.8L1066 84.3" stroke="#e31af7" fill="none" stroke-width="1.39" stroke-dasharray="1.39 2.29"/>
<path d="M836.8 181.5L837.1 179.9L837.5 178.3L837.8 176.7L838.1 175.1L838.5 173.4L838.9 171.8L839.2 170.2L839.6 168.6L840 166.9L840.3 165.3L840.7 163.7L841.1 162.1L841.5 160.5L841.9 158.8L842.3 157.2L842.7 155.6L843.1 154L843.5 152.4L843.9 150.7L844.3 149.1L844.7 147.5L845.2 145.9L845.6 144.3L846 142.7L846.5 141L846.9 139.4L847.4 137.8L847.8 136.2L848.3 134.6L848.7 133L849.2 131.4L849.7 129.7L850.1 128.1L850.6 126.5L851.1 124.9L851.6 123.3L852 121.7L852.5 120.1L853 118.5L853.5 116.9L854 115.3L854.5 113.7L855 112.1L855.5 110.5L856 108.9L856.5 107.3L857.1 105.7L857.6 104.1L858.1 102.5L858.6 100.9L859.1 99.3L859.7 97.7L860.2 96.1L860.7 94.5L861.2 93L861.8 91.4L862.3 89.8L862.8 88.2L863.4 86.7L863.9 85.1L864.4 83.5L865 82L865.5 80.4L866.1 78.9L866.6 77.3L867.1 75.8L867.7 74.2L868.2 72.7L868.7 71.2L869.2 69.7L869.7 68.2L870.2 66.7L870.7 65.2L871.2 63.7L871.7 62.3L872.2 60.9L872.7 59.4L873.1 58L873.5 56.7L873.9 55.3L874.3 54L874.6 52.8L874.9 51.5L875.1 50.3L875.2 49.2L875.3 48.2L875.3 47.2L875.1 46.3L874.9 45.5L874.4 44.8L873.7 44.3L872.8 43.9L871.7 43.6L870.2 43.6L868.4 43.6L866.3 43.9L863.9 44.2L861.2 44.8L858.1 45.4L854.8 46.2L851.2 47.1L847.4 48.1L843.3 49.1L839.1 50.2L834.8 51.4L830.3 52.6L825.7 53.9L820.9 55.2L816.1 56.5L811.2 57.9L806.3 59.3L801.3 60.7L796.2 62.1L791.1 63.6L786 65.1L780.8 66.5L775.6 68" stroke="#e31af7" fill="none" stroke-width="1.39" stroke-dasharray="1.39 2.29"/>
<path d="M1034.1 69.5L1038 71L1042 72.6L1046 74.1L1050 75.6L1054 77.2L1058 78.7L1062 80.2L1066.1 81.8L1070.1 83.4L1074.1 84.9L1078.2 86.5" stroke="#e31af7" fill="none" stroke-width="1.39" stroke-dasharray="1.39 2.29"/>
<path d="M865.1 346.2L865 344.6L864.9 342.9L864.8 341.3L864.7 339.7L864.6 338L864.5 336.4L864.4 334.8L864.3 333.1L864.3 331.5L864.2 329.9L864.1 328.2L864 326.6L864 325L863.9 323.3L863.9 321.7L863.8 320.1L863.7 318.5L863.7 316.8L863.6 315.2L863.6 313.6L863.6 311.9L863.5 310.3L863.5 308.7L863.4 307L863.4 305.4L863.4 303.8L863.4 302.1L863.3 300.5L863.3 298.9L863.3 297.2L863.3 295.6L863.3 294L863.3 292.3L863.3 290.7L863.3 289.1L863.3 287.5L863.3 285.8L863.3 284.2L863.3 282.6L863.3 280.9L863.3 279.3L863.3 277.7L863.4 276L863.4 274.4L863.4 272.8L863.5 271.1L863.5 269.5L863.5 267.9L863.6 266.2L863.6 264.6L863.7 263L863.7 261.4L863.8 259.7L863.8 258.1L863.9 256.5L863.9 254.8L864 253.2L864.1 251.6L864.1 249.9L864.2 248.3L864.3 246.7L864.4 245L864.4 243.4L864.5 241.8L864.6 240.1L864.7 238.5L864.8 236.9L864.9 235.2L865 233.6L865.1 232L865.2 230.4L865.3 228.7L865.4 227.1L865.5 225.5L865.6 223.8L865.8 222.2L865.9 220.6L866 218.9L866.1 217.3L866.3 215.7L866.4 214L866.5 212.4L866.7 210.8L866.8 209.1L867 207.5L867.1 205.9L867.3 204.3L867.4 202.6L867.6 201L867.7 199.4L867.9 197.7L868 196.1L868.2 194.5L868.4 192.8L868.5 191.2L868.7 189.6L868.9 187.9L869.1 186.3L869.2 184.7L869.4 183.1L869.6 181.4L869.8 179.8L870 178.2L870.2 176.5L870.4 174.9L870.6 173.3L870.8 171.6L871 170L871.2 168.4L871.4 166.7L871.6 165.1L871.8 163.5L872 161.9L872.2 160.2L872.5 158.6L872.7 157L872.9 155.3L873.1 153.7L873.4 152.1L873.6 150.4L873.8 148.8L874.1 147.2L874.3 145.6L874.5 143.9L874.8 142.3L875 140.7L875.3 139L875.5 137.4L875.8 135.8L876 134.2L876.3 132.5L876.5 130.9L876.8 129.3L877 127.6L877.3 126L877.6 124.4L877.8 122.8L878.1 121.1L878.4 119.5L878.6 117.9L878.9 116.2L879.2 114.6L879.4 113L879.7 111.4L880 109.7L880.3 108.1L880.6 106.5L880.8 104.8L881.1 103.2L881.4 101.6L881.7 100L882 98.3L882.3 96.7L882.6 95.1L882.9 93.5L883.2 91.8L883.5 90.2L883.8 88.6L884.1 87L884.4 85.4L884.7 83.7L885 82.1L885.3 80.5L885.6 78.9L885.9 77.3L886.2 75.6L886.5 74L886.8 72.4L887.1 70.8L887.4 69.2L887.7 67.6L888 66L888.4 64.3L888.7 62.7L889 61.1L889.3 59.5L889.6 57.9L889.9 56.3L890.2 54.8L890.5 53.2L890.8 51.6L891.1 50L891.4 48.5L891.7 46.9L892 45.4L892.3 43.9L892.6 42.4L892.8 40.9L893 39.5L893.2 38.1L893.3 36.9L893.3 35.7L893.1 34.8L892.5 34L891.5 33.7L889.9 33.7L887.5 34.1L884.4 34.8L880.7 35.8L876.6 37L872.1 38.2L867.5 39.6L862.7 41L857.8 42.5L852.8 44L847.7 45.5L842.5 47L837.4 48.6L832.2 50.1L827 51.7L821.7 53.3L816.5 54.9L811.2 56.5L805.9 58" stroke="#e31af7" fill="none" stroke-width="1.39" stroke-dasharray="1.39 2.29"/>
<path d="M1003.7 59.6L1008.3 61.2L1012.9 62.8L1017.4 64.5L1022 66.1L1026.6 67.7L1031.2 69.3L1035.8 70.9L1040.4 72.5L1045 74.1L1049.5 75.7L1054.1 77.4L1058.6 79L1063.2 80.6L1067.7 82.2L1072.2 83.8L1076.7 85.5L1081.2 87.1" stroke="#e31af7" fill="none" stroke-width="1.39" stroke-dasharray="1.39 2.29"/>
<path d="M935 259.5L935 257.9L935 256.2L935 254.6L935 253L935 251.3L935 249.7L935 248.1L935 246.5L935 244.8L935 243.2L935 241.6L935 239.9L935 238.3L935 236.7L935 235L934.9 233.4L934.9 231.8L934.9 230.2L934.8 228.5L934.8 226.9L934.8 225.3L934.7 223.6L934.7 222L934.7 220.4L934.6 218.8L934.6 217.1L934.5 215.5L934.5 213.9L934.4 212.2L934.4 210.6L934.3 209L934.2 207.4L934.2 205.7L934.1 204.1L934 202.5L934 200.8L933.9 199.2L933.8 197.6L933.7 196L933.7 194.3L933.6 192.7L933.5 191.1L933.4 189.5L933.3 187.8L933.2 186.2L933.1 184.6L933 182.9L932.9 181.3L932.8 179.7L932.7 178.1L932.6 176.4L932.5 174.8L932.4 173.2L932.3 171.6L932.2 169.9L932.1 168.3L931.9 166.7L931.8 165L931.7 163.4L931.6 161.8L931.4 160.2L931.3 158.5L931.2 156.9L931 155.3L930.9 153.7L930.8 152L930.6 150.4L930.5 148.8L930.3 147.2L930.2 145.6L930 143.9L929.9 142.3L929.7 140.7L929.6 139.1L929.4 137.4L929.3 135.8L929.1 134.2L928.9 132.6L928.8 130.9L928.6 129.3L928.4 127.7L928.3 126.1L928.1 124.5L927.9 122.8L927.7 121.2L927.6 119.6L927.4 118L927.2 116.4L927 114.8L926.8 113.1L926.6 111.5L926.5 109.9L926.3 108.3L926.1 106.7L925.9 105.1L925.7 103.5L925.5 101.9L925.3 100.2L925.1 98.6L924.9 97L924.7 95.4L924.5 93.8L924.3 92.2L924.1 90.6L923.9 89L923.7 87.4L923.5 85.8L923.2 84.2L923 82.6L922.8 81L922.6 79.4L922.4 77.9L922.2 76.3L922 74.7L921.8 73.1L921.6 71.5L921.3 70L921.1 68.4L920.9 66.9L920.7 65.3L920.5 63.8L920.3 62.2L920.1 60.7L919.9 59.2L919.7 57.7L919.5 56.2L919.4 54.7L919.2 53.3L919.1 51.8L918.9 50.4L918.8 49.1L918.7 47.7L918.7 46.4L918.7 45.2L918.7 44L918.9 42.9L919.1 42L919.5 41.1L920 40.4L920.8 39.8L921.9 39.5L923.3 39.3L925 39.4L927.2 39.7L929.7 40.2L932.6 40.8L935.8 41.6L939.4 42.6L943.2 43.6L947.2 44.8L951.4 46L955.7 47.3L960.2 48.6L964.8 50L969.4 51.3L974.1 52.8L978.9 54.2L983.8 55.7L988.7 57.2L993.6 58.7L998.6 60.2L1003.5 61.7L1008.5 63.2L1013.6 64.8L1018.6 66.3L1023.6 67.9L1028.7 69.4L1033.7 71L1038.8 72.6L1043.9 74.1L1049 75.7L1054 77.3L1059.1 78.9L1064.2 80.5L1069.2 82.1L1074.3 83.7L1079.3 85.2L1084.4 86.8" stroke="#e31af7" fill="none" stroke-width="1.39" stroke-dasharray="1.39 2.29"/>
<path d="M782 283.4L782.8 301.2" stroke="#e31af7" stroke-width="1.8" fill="none"/>
<rect x="781.8" y="300.2" width="2" height="2" fill="#ff5533"/>
<path d="M836.3 181.6L833 198" stroke="#e31af7" stroke-width="1.8" fill="none"/>
<rect x="832" y="197" width="2" height="2" fill="#ff5533"/>
<path d="M864.8 346.2L865.9 360.9" stroke="#e31af7" stroke-width="1.8" fill="none"/>
<rect x="864.9" y="359.9" width="2" height="2" fill="#ff5533"/>
<path d="M935.1 259.5L935.1 271.1" stroke="#e31af7" stroke-width="1.8" fill="none"/>
<rect x="934.1" y="270.1" width="2" height="2" fill="#ff5533"/>
<path d="M756.6 305.8L757.3 304.3L758 302.8L758.7 301.2L759.4 299.7L760.1 298.2L760.9 296.7L761.6 295.2L762.4 293.6L763.1 292.1L763.9 290.6L764.7 289.1L765.5 287.6L766.3 286.1L767.1 284.5L767.9 283L768.7 281.5L769.5 280L770.4 278.5L771.2 277L772.1 275.5L772.9 273.9L773.8 272.4L774.7 270.9L775.6 269.4L776.5 267.9L777.4 266.4L778.3 264.9L779.3 263.4L780.2 261.9L781.1 260.3L782.1 258.8L783 257.3L784 255.8L785 254.3L785.9 252.8L786.9 251.3L787.9 249.8L788.9 248.3L789.9 246.8L790.9 245.3L792 243.8L793 242.3L794 240.8L795.1 239.3L796.1 237.8L797.2 236.3L798.2 234.8L799.3 233.3L800.4 231.8L801.5 230.4L802.5 228.9L803.6 227.4L804.7 225.9L805.8 224.4L806.9 222.9L808.1 221.4L809.2 220L810.3 218.5L811.4 217L812.6 215.5L813.7 214.1L814.9 212.6L816 211.1L817.2 209.6L818.3 208.2L819.5 206.7L820.7 205.2L821.8 203.8L823 202.3L824.2 200.9L825.4 199.4L826.6 198L827.8 196.5L829 195.1L830.2 193.6L831.4 192.2L832.6 190.7L833.8 189.3L835 187.9L836.2 186.4L837.5 185L838.7 183.6L839.9 182.1L841.1 180.7L842.4 179.3L843.6 177.9L844.9 176.5L846.1 175.1L847.3 173.7L848.6 172.3L849.8 170.9L851.1 169.5L852.3 168.1L853.6 166.7L854.8 165.3L856.1 163.9L857.3 162.6L858.6 161.2L859.8 159.8L861.1 158.5L862.4 157.1L863.6 155.8L864.9 154.5L866.1 153.1L867.4 151.8L868.7 150.5L869.9 149.2L871.2 147.8L872.5 146.5L873.7 145.2L875 144L876.2 142.7L877.5 141.4" stroke="#ffa500" fill="none" stroke-width="1.39" stroke-dasharray="1.39 2.29"/>
<path d="M756.6 305.8L753.7 311.1" stroke="#ffa500" stroke-width="1.8" fill="none"/>
<rect x="752.7" y="310.1" width="2" height="2" fill="#ff5533"/>
<path d="M806.8 305L807.2 303.4L807.7 301.8L808.1 300.2L808.6 298.6L809 297L809.5 295.4L810 293.8L810.5 292.2L811 290.6L811.5 289L812 287.4L812.5 285.9L813 284.3L813.5 282.7L814 281.1L814.6 279.5L815.1 277.9L815.7 276.3L816.2 274.7L816.8 273.1L817.3 271.5L817.9 269.9L818.5 268.3L819.1 266.7L819.7 265.1L820.3 263.5L820.9 261.9L821.5 260.4L822.1 258.8L822.7 257.2L823.3 255.6L824 254L824.6 252.4L825.3 250.8L825.9 249.2L826.6 247.6L827.2 246L827.9 244.4L828.6 242.9L829.2 241.3L829.9 239.7L830.6 238.1L831.3 236.5L832 234.9L832.7 233.3L833.4 231.8L834.1 230.2L834.8 228.6L835.5 227L836.3 225.4L837 223.8L837.7 222.2L838.5 220.7L839.2 219.1L840 217.5L840.7 215.9L841.5 214.3L842.2 212.8L843 211.2L843.8 209.6L844.5 208L845.3 206.5L846.1 204.9L846.9 203.3L847.7 201.7L848.5 200.2L849.3 198.6L850.1 197L850.9 195.4L851.7 193.9L852.5 192.3L853.3 190.7L854.1 189.2L854.9 187.6L855.7 186L856.6 184.5L857.4 182.9L858.2 181.3L859.1 179.8L859.9 178.2L860.7 176.7L861.6 175.1L862.4 173.6L863.3 172L864.1 170.4L865 168.9L865.8 167.3L866.7 165.8L867.6 164.3L868.4 162.7L869.3 161.2L870.1 159.6L871 158.1L871.9 156.6L872.7 155L873.6 153.5L874.5 152L875.4 150.4L876.2 148.9L877.1 147.4L878 145.9L878.9 144.3L879.8 142.8L880.6 141.3L881.5 139.8L882.4 138.3" stroke="#ffa500" fill="none" stroke-width="1.39" stroke-dasharray="1.39 2.29"/>
<path d="M806.8 305L805 310.4" stroke="#ffa500" stroke-width="1.8" fill="none"/>
<rect x="804" y="309.4" width="2" height="2" fill="#ff5533"/>
<text x="870.1" y="136.7" font-size="11.75" fill="#fff" text-anchor="middle" font-family="Liberation Sans" textLength="23.01" lengthAdjust="spacingAndGlyphs">DPC</text>
<text x="1081.8" y="90.5" font-size="11.75" fill="#fff" text-anchor="middle" font-family="Liberation Sans" textLength="24.40" lengthAdjust="spacingAndGlyphs">DKD</text>
<g stroke="#ff0000" stroke-width="1.5">
<path d="M1063.5 84.5h7M1067 81v7"/>
<path d="M1080 87.5h7M1083.5 84v7"/>
<path d="M874 141.4h7M877.5 137.9v7"/>
<path d="M878.9 138.3h7M882.4 134.8v7"/>
</g>
<text x="315.8" y="29.6" font-size="15.28" fill="#fff" text-anchor="start" font-family="Liberation Mono" textLength="50.17" lengthAdjust="spacingAndGlyphs" xml:space="preserve">UK008F</text>
<text x="315.8" y="42.6" font-size="15.28" fill="#fff" text-anchor="start" font-family="Liberation Mono" textLength="317.77" lengthAdjust="spacingAndGlyphs" xml:space="preserve">Beg: 20251203 16:45:44 (sol = 251.42°)</text>
<text x="315.8" y="55.6" font-size="15.28" fill="#fff" text-anchor="start" font-family="Liberation Mono" textLength="317.77" lengthAdjust="spacingAndGlyphs" xml:space="preserve">End: 20251203 19:57:22 (sol = 251.55°)</text>
<text x="315.8" y="68.6" font-size="15.28" fill="#fff" text-anchor="start" font-family="Liberation Mono" textLength="317.77" lengthAdjust="spacingAndGlyphs" xml:space="preserve">--------------------------------------</text>
<text x="315.8" y="81.6" font-size="15.28" fill="#fff" text-anchor="start" font-family="Liberation Mono" textLength="58.54" lengthAdjust="spacingAndGlyphs" xml:space="preserve">...: 46</text>
<text x="315.8" y="94.6" font-size="15.28" fill="#fff" text-anchor="start" font-family="Liberation Mono" textLength="50.17" lengthAdjust="spacingAndGlyphs" xml:space="preserve">DKD: 5</text>
<text x="315.8" y="107.6" font-size="15.28" fill="#fff" text-anchor="start" font-family="Liberation Mono" textLength="50.17" lengthAdjust="spacingAndGlyphs" xml:space="preserve">DPC: 2</text>
<g stroke="#6a6a6a" stroke-width="2.083" stroke-dasharray="2.08 3.44">
<line x1="75" y1="842.5" x2="75" y2="641.5"/>
<line x1="219" y1="842.5" x2="219" y2="641.5"/>
<line x1="365" y1="842.5" x2="365" y2="641.5"/>
<line x1="506" y1="842.5" x2="506" y2="641.5"/>
<line x1="651" y1="842.5" x2="651" y2="641.5"/>
<line x1="797" y1="842.5" x2="797" y2="641.5"/>
<line x1="940" y1="842.5" x2="940" y2="641.5"/>
<line x1="1091" y1="842.5" x2="1091" y2="641.5"/>
<line x1="1239" y1="842.5" x2="1239" y2="641.5"/>
<line x1="1394" y1="842.5" x2="1394" y2="641.5"/>
<line x1="1548" y1="842.5" x2="1548" y2="641.5"/>
<line x1="1687" y1="842.5" x2="1687" y2="641.5"/>
</g>
<text transform="translate(148.7,697) rotate(-90)" x="0" y="0" font-size="29.4" fill="#555555" stroke="#555555" stroke-width="0.35" font-family="Liberation Sans" textLength="55.06" lengthAdjust="spacingAndGlyphs">APR</text>
<text transform="translate(295.3,702.7) rotate(-90)" x="0" y="0" font-size="29.4" fill="#555555" stroke="#555555" stroke-width="0.35" font-family="Liberation Sans" textLength="57.78" lengthAdjust="spacingAndGlyphs">MAY</text>
<text transform="translate(437.3,688.5) rotate(-90)" x="0" y="0" font-size="29.4" fill="#555555" stroke="#555555" stroke-width="0.35" font-family="Liberation Sans" textLength="49.31" lengthAdjust="spacingAndGlyphs">JUN</text>
<text transform="translate(579.3,684.1) rotate(-90)" x="0" y="0" font-size="29.4" fill="#555555" stroke="#555555" stroke-width="0.35" font-family="Liberation Sans" textLength="44.00" lengthAdjust="spacingAndGlyphs">JUL</text>
<text transform="translate(724.3,700.2) rotate(-90)" x="0" y="0" font-size="29.4" fill="#555555" stroke="#555555" stroke-width="0.35" font-family="Liberation Sans" textLength="60.86" lengthAdjust="spacingAndGlyphs">AUG</text>
<text transform="translate(872.3,695.5) rotate(-90)" x="0" y="0" font-size="29.4" fill="#555555" stroke="#555555" stroke-width="0.35" font-family="Liberation Sans" textLength="51.94" lengthAdjust="spacingAndGlyphs">SEP</text>
<text transform="translate(1017.3,700.5) rotate(-90)" x="0" y="0" font-size="29.4" fill="#555555" stroke="#555555" stroke-width="0.35" font-family="Liberation Sans" textLength="58.23" lengthAdjust="spacingAndGlyphs">OCT</text>
<text transform="translate(1170.3,705.7) rotate(-90)" x="0" y="0" font-size="29.4" fill="#555555" stroke="#555555" stroke-width="0.35" font-family="Liberation Sans" textLength="61.16" lengthAdjust="spacingAndGlyphs">NOV</text>
<text transform="translate(1319.3,701.7) rotate(-90)" x="0" y="0" font-size="29.4" fill="#555555" stroke="#555555" stroke-width="0.35" font-family="Liberation Sans" textLength="58.34" lengthAdjust="spacingAndGlyphs">DEC</text>
<text transform="translate(1471.3,687) rotate(-90)" x="0" y="0" font-size="29.4" fill="#555555" stroke="#555555" stroke-width="0.35" font-family="Liberation Sans" textLength="47.49" lengthAdjust="spacingAndGlyphs">JAN</text>
<text transform="translate(1628.3,696.7) rotate(-90)" x="0" y="0" font-size="29.4" fill="#555555" stroke="#555555" stroke-width="0.35" font-family="Liberation Sans" textLength="52.59" lengthAdjust="spacingAndGlyphs">FEB</text>
<text transform="translate(1766.3,706.2) rotate(-90)" x="0" y="0" font-size="29.4" fill="#555555" stroke="#555555" stroke-width="0.35" font-family="Liberation Sans" textLength="62.27" lengthAdjust="spacingAndGlyphs">MAR</text>
<line x1="1253.5" y1="842.5" x2="1253.5" y2="641.5" stroke="#ff0000" stroke-width="1.6" stroke-dasharray="5.13 2.22"/>
<g stroke="#ee82ee" stroke-width="4">
<line x1="105.9" y1="834.00" x2="129.9" y2="834.00"/>
<line x1="165" y1="834.00" x2="345" y2="834.00"/>
<line x1="366" y1="834.00" x2="625" y2="834.00"/>
<line x1="636" y1="834.00" x2="787" y2="834.00"/>
<line x1="807" y1="834.00" x2="900" y2="834.00"/>
<line x1="920" y1="834.00" x2="973" y2="834.00"/>
<line x1="984" y1="834.00" x2="1066" y2="834.00"/>
<line x1="1082" y1="834.00" x2="1204" y2="834.00"/>
<line x1="1244" y1="834.00" x2="1326" y2="834.00"/>
<line x1="1337" y1="834.00" x2="1356" y2="834.00"/>
<line x1="1381" y1="834.00" x2="1444" y2="834.00"/>
<line x1="1459" y1="834.00" x2="1512" y2="834.00"/>
<line x1="1523" y1="834.00" x2="1547" y2="834.00"/>
<line x1="1724" y1="834.00" x2="1748" y2="834.00"/>
<line x1="1758" y1="834.00" x2="1782" y2="834.00"/>
</g>
<g stroke="#e020f0" stroke-width="4">
<line x1="165" y1="818.00" x2="189" y2="818.00"/>
<line x1="224" y1="818.00" x2="287" y2="818.00"/>
<line x1="312" y1="818.00" x2="341" y2="818.00"/>
<line x1="366" y1="818.00" x2="493" y2="818.00"/>
<line x1="508" y1="818.00" x2="654" y2="818.00"/>
<line x1="704" y1="818.00" x2="738" y2="818.00"/>
<line x1="773" y1="818.00" x2="846" y2="818.00"/>
<line x1="871" y1="818.00" x2="988" y2="818.00"/>
<line x1="1003" y1="818.00" x2="1017" y2="818.00"/>
<line x1="1062" y1="818.00" x2="1213" y2="818.00"/>
<line x1="1244" y1="818.00" x2="1267" y2="818.00"/>
<line x1="1293" y1="818.00" x2="1316" y2="818.00"/>
<line x1="1342" y1="818.00" x2="1365" y2="818.00"/>
<line x1="1386" y1="818.00" x2="1429" y2="818.00"/>
<line x1="1459" y1="818.00" x2="1483" y2="818.00"/>
<line x1="1548" y1="818.00" x2="1571" y2="818.00"/>
</g>
<g stroke="#ff2000" stroke-width="4">
<line x1="165" y1="802.00" x2="189" y2="802.00"/>
<line x1="258" y1="802.00" x2="488" y2="802.00"/>
<line x1="508" y1="802.00" x2="615" y2="802.00"/>
<line x1="626" y1="802.00" x2="718" y2="802.00"/>
<line x1="729" y1="802.00" x2="826" y2="802.00"/>
<line x1="949" y1="802.00" x2="1150" y2="802.00"/>
<line x1="1160" y1="802.00" x2="1248" y2="802.00"/>
<line x1="1258" y1="802.00" x2="1444" y2="802.00"/>
<line x1="1459" y1="802.00" x2="1483" y2="802.00"/>
<line x1="1553" y1="802.00" x2="1576" y2="802.00"/>
</g>
<g stroke="#ffa500" stroke-width="4">
<line x1="194" y1="785.00" x2="218" y2="785.00"/>
<line x1="322" y1="785.00" x2="507" y2="785.00"/>
<line x1="518" y1="785.00" x2="542" y2="785.00"/>
<line x1="557" y1="785.00" x2="684" y2="785.00"/>
<line x1="807" y1="785.00" x2="831" y2="785.00"/>
<line x1="954" y1="785.00" x2="973" y2="785.00"/>
<line x1="989" y1="785.00" x2="1125" y2="785.00"/>
<line x1="1155" y1="785.00" x2="1218" y2="785.00"/>
<line x1="1244" y1="785.00" x2="1267" y2="785.00"/>
<line x1="1317" y1="785.00" x2="1341" y2="785.00"/>
<line x1="1396" y1="785.00" x2="1419" y2="785.00"/>
<line x1="1464" y1="785.00" x2="1650" y2="785.00"/>
</g>
<g stroke="#ffee00" stroke-width="4">
<line x1="341" y1="769.00" x2="370" y2="769.00"/>
<line x1="410" y1="769.00" x2="448" y2="769.00"/>
<line x1="469" y1="769.00" x2="493" y2="769.00"/>
<line x1="528" y1="769.00" x2="546" y2="769.00"/>
<line x1="562" y1="769.00" x2="591" y2="769.00"/>
<line x1="616" y1="769.00" x2="649" y2="769.00"/>
<line x1="959" y1="769.00" x2="988" y2="769.00"/>
<line x1="1062" y1="769.00" x2="1086" y2="769.00"/>
<line x1="1101" y1="769.00" x2="1125" y2="769.00"/>
<line x1="1160" y1="769.00" x2="1194" y2="769.00"/>
<line x1="1249" y1="769.00" x2="1272" y2="769.00"/>
<line x1="1425" y1="769.00" x2="1512" y2="769.00"/>
</g>
<g stroke="#adff2f" stroke-width="4">
<line x1="420" y1="752.00" x2="444" y2="752.00"/>
<line x1="533" y1="752.00" x2="556" y2="752.00"/>
<line x1="567" y1="752.00" x2="591" y2="752.00"/>
<line x1="621" y1="752.00" x2="743" y2="752.00"/>
<line x1="969" y1="752.00" x2="1135" y2="752.00"/>
<line x1="1185" y1="752.00" x2="1346" y2="752.00"/>
<line x1="1469" y1="752.00" x2="1493" y2="752.00"/>
</g>
<g stroke="#66cc00" stroke-width="4">
<line x1="430" y1="736.00" x2="453" y2="736.00"/>
<line x1="577" y1="736.00" x2="733" y2="736.00"/>
<line x1="994" y1="736.00" x2="1105" y2="736.00"/>
<line x1="1116" y1="736.00" x2="1223" y2="736.00"/>
<line x1="1263" y1="736.00" x2="1292" y2="736.00"/>
<line x1="1489" y1="736.00" x2="1512" y2="736.00"/>
</g>
<g stroke="#00ff80" stroke-width="4">
<line x1="592" y1="720.00" x2="615" y2="720.00"/>
<line x1="655" y1="720.00" x2="772" y2="720.00"/>
<line x1="1072" y1="720.00" x2="1243" y2="720.00"/>
<line x1="1263" y1="720.00" x2="1287" y2="720.00"/>
</g>
<g stroke="#00ddff" stroke-width="4">
<line x1="596" y1="703.00" x2="733" y2="703.00"/>
<line x1="1092" y1="703.00" x2="1120" y2="703.00"/>
<line x1="1200" y1="703.00" x2="1223" y2="703.00"/>
<line x1="1273" y1="703.00" x2="1326" y2="703.00"/>
</g>
<g stroke="#0000cd" stroke-width="4">
<line x1="1111" y1="687.00" x2="1135" y2="687.00"/>
</g>
<g stroke="#fff" stroke-width="2">
<path d="M114 834h8M118 830v8"/>
<path d="M241 834h8M245 830v8"/>
<path d="M511 834h8M515 830v8"/>
<path d="M707 834h8M711 830v8"/>
<path d="M834 834h8M838 830v8"/>
<path d="M962 834h8M966 830v8"/>
<path d="M987 834h8M991 830v8"/>
<path d="M1117 834h8M1121 830v8"/>
<path d="M1296 834h8M1300 830v8"/>
<path d="M1342 834h8M1346 830v8"/>
<path d="M1413 834h8M1417 830v8"/>
<path d="M1482 834h8M1486 830v8"/>
<path d="M1531 834h8M1535 830v8"/>
<path d="M1732 834h8M1736 830v8"/>
<path d="M1766 834h8M1770 830v8"/>
<path d="M173 818h8M177 814v8"/>
<path d="M256 818h8M260 814v8"/>
<path d="M324 818h8M328 814v8"/>
<path d="M438 818h8M442 814v8"/>
<path d="M599 818h8M603 814v8"/>
<path d="M717 818h8M721 814v8"/>
<path d="M794 818h8M798 814v8"/>
<path d="M940 818h8M944 814v8"/>
<path d="M1006 818h8M1010 814v8"/>
<path d="M1153 818h8M1157 814v8"/>
<path d="M1251 818h8M1255 814v8"/>
<path d="M1300 818h8M1304 814v8"/>
<path d="M1350 818h8M1354 814v8"/>
<path d="M1403 818h8M1407 814v8"/>
<path d="M1467 818h8M1471 814v8"/>
<path d="M1555 818h8M1559 814v8"/>
<path d="M175 802h8M179 798v8"/>
<path d="M379 802h8M383 798v8"/>
<path d="M545 802h8M549 798v8"/>
<path d="M683 802h8M687 798v8"/>
<path d="M742 802h8M746 798v8"/>
<path d="M1075 802h8M1079 798v8"/>
<path d="M1217 802h8M1221 798v8"/>
<path d="M1305 802h8M1309 798v8"/>
<path d="M1467 802h8M1471 798v8"/>
<path d="M1560 802h8M1564 798v8"/>
<path d="M202 785h8M206 781v8"/>
<path d="M400 785h8M404 781v8"/>
<path d="M526 785h8M530 781v8"/>
<path d="M639 785h8M643 781v8"/>
<path d="M815 785h8M819 781v8"/>
<path d="M960 785h8M964 781v8"/>
<path d="M1041 785h8M1045 781v8"/>
<path d="M1188 785h8M1192 781v8"/>
<path d="M1251 785h8M1255 781v8"/>
<path d="M1325 785h8M1329 781v8"/>
<path d="M1403 785h8M1407 781v8"/>
<path d="M1546 785h8M1550 781v8"/>
<path d="M356 769h8M360 765v8"/>
<path d="M427 769h8M431 765v8"/>
<path d="M477 769h8M481 765v8"/>
<path d="M536 769h8M540 765v8"/>
<path d="M571 769h8M575 765v8"/>
<path d="M631 769h8M635 765v8"/>
<path d="M974 769h8M978 765v8"/>
<path d="M1070 769h8M1074 765v8"/>
<path d="M1109 769h8M1113 765v8"/>
<path d="M1178 769h8M1182 765v8"/>
<path d="M1256 769h8M1260 765v8"/>
<path d="M1467 769h8M1471 765v8"/>
<path d="M428 752h8M432 748v8"/>
<path d="M540 752h8M544 748v8"/>
<path d="M575 752h8M579 748v8"/>
<path d="M704 752h8M708 748v8"/>
<path d="M1095 752h8M1099 748v8"/>
<path d="M1271 752h8M1275 748v8"/>
<path d="M1477 752h8M1481 748v8"/>
<path d="M438 736h8M442 732v8"/>
<path d="M631 736h8M635 732v8"/>
<path d="M1039 736h8M1043 732v8"/>
<path d="M1168 736h8M1172 732v8"/>
<path d="M1275 736h8M1279 732v8"/>
<path d="M1497 736h8M1501 732v8"/>
<path d="M599 720h8M603 716v8"/>
<path d="M727 720h8M731 716v8"/>
<path d="M1188 720h8M1192 716v8"/>
<path d="M1271 720h8M1275 716v8"/>
<path d="M688 703h8M692 699v8"/>
<path d="M1102 703h8M1106 699v8"/>
<path d="M1207 703h8M1211 699v8"/>
<path d="M1300 703h8M1304 699v8"/>
<path d="M1119 687h8M1123 683v8"/>
</g>
<text x="117.9" y="831.5" font-size="11.75" fill="#fff" text-anchor="middle" font-family="Liberation Sans" textLength="19.65" lengthAdjust="spacingAndGlyphs">KSE</text>
<text x="255" y="831.5" font-size="11.75" fill="#fff" text-anchor="middle" font-family="Liberation Sans" textLength="18.90" lengthAdjust="spacingAndGlyphs">ETA</text>
<text x="495.5" y="831.5" font-size="11.75" fill="#fff" text-anchor="middle" font-family="Liberation Sans" textLength="21.79" lengthAdjust="spacingAndGlyphs">NZC</text>
<text x="711.5" y="831.5" font-size="11.75" fill="#fff" text-anchor="middle" font-family="Liberation Sans" textLength="22.33" lengthAdjust="spacingAndGlyphs">NDA</text>
<text x="853.5" y="831.5" font-size="11.75" fill="#fff" text-anchor="middle" font-family="Liberation Sans" textLength="19.11" lengthAdjust="spacingAndGlyphs">SPE</text>
<text x="946.5" y="831.5" font-size="11.75" fill="#fff" text-anchor="middle" font-family="Liberation Sans" textLength="21.96" lengthAdjust="spacingAndGlyphs">ARD</text>
<text x="1025" y="831.5" font-size="11.75" fill="#fff" text-anchor="middle" font-family="Liberation Sans" textLength="20.84" lengthAdjust="spacingAndGlyphs">EGE</text>
<text x="1143" y="831.5" font-size="11.75" fill="#fff" text-anchor="middle" font-family="Liberation Sans" textLength="20.09" lengthAdjust="spacingAndGlyphs">NTA</text>
<text x="1285" y="831.5" font-size="11.75" fill="#fff" text-anchor="middle" font-family="Liberation Sans" textLength="24.51" lengthAdjust="spacingAndGlyphs">MON</text>
<text x="1346.5" y="831.5" font-size="11.75" fill="#fff" text-anchor="middle" font-family="Liberation Sans" textLength="21.07" lengthAdjust="spacingAndGlyphs">URS</text>
<text x="1412.5" y="831.5" font-size="11.75" fill="#fff" text-anchor="middle" font-family="Liberation Sans" textLength="20.92" lengthAdjust="spacingAndGlyphs">AHY</text>
<text x="1485.5" y="831.5" font-size="11.75" fill="#fff" text-anchor="middle" font-family="Liberation Sans" textLength="24.22" lengthAdjust="spacingAndGlyphs">GUM</text>
<text x="1535" y="831.5" font-size="11.75" fill="#fff" text-anchor="middle" font-family="Liberation Sans" textLength="21.97" lengthAdjust="spacingAndGlyphs">OHY</text>
<text x="1736" y="831.5" font-size="11.75" fill="#fff" text-anchor="middle" font-family="Liberation Sans" textLength="21.15" lengthAdjust="spacingAndGlyphs">XHE</text>
<text x="1770" y="831.5" font-size="11.75" fill="#fff" text-anchor="middle" font-family="Liberation Sans" textLength="16.46" lengthAdjust="spacingAndGlyphs">EVI</text>
<text x="177" y="815.5" font-size="11.75" fill="#fff" text-anchor="middle" font-family="Liberation Sans" textLength="20.34" lengthAdjust="spacingAndGlyphs">AVB</text>
<text x="255.5" y="815.5" font-size="11.75" fill="#fff" text-anchor="middle" font-family="Liberation Sans" textLength="17.04" lengthAdjust="spacingAndGlyphs">ELY</text>
<text x="326.5" y="815.5" font-size="11.75" fill="#fff" text-anchor="middle" font-family="Liberation Sans" textLength="22.95" lengthAdjust="spacingAndGlyphs">CAM</text>
<text x="429.5" y="815.5" font-size="11.75" fill="#fff" text-anchor="middle" font-family="Liberation Sans" textLength="20.90" lengthAdjust="spacingAndGlyphs">SSG</text>
<text x="581" y="815.5" font-size="11.75" fill="#fff" text-anchor="middle" font-family="Liberation Sans" textLength="20.29" lengthAdjust="spacingAndGlyphs">PCA</text>
<text x="721" y="815.5" font-size="11.75" fill="#fff" text-anchor="middle" font-family="Liberation Sans" textLength="22.34" lengthAdjust="spacingAndGlyphs">AUD</text>
<text x="809.5" y="815.5" font-size="11.75" fill="#fff" text-anchor="middle" font-family="Liberation Sans" textLength="21.58" lengthAdjust="spacingAndGlyphs">AUR</text>
<text x="929.5" y="815.5" font-size="11.75" fill="#fff" text-anchor="middle" font-family="Liberation Sans" textLength="21.36" lengthAdjust="spacingAndGlyphs">DSX</text>
<text x="1010" y="815.5" font-size="11.75" fill="#fff" text-anchor="middle" font-family="Liberation Sans" textLength="22.66" lengthAdjust="spacingAndGlyphs">OCU</text>
<text x="1137.5" y="815.5" font-size="11.75" fill="#fff" text-anchor="middle" font-family="Liberation Sans" textLength="21.61" lengthAdjust="spacingAndGlyphs">OER</text>
<text x="1255.5" y="815.5" font-size="11.75" fill="#fff" text-anchor="middle" font-family="Liberation Sans" textLength="22.44" lengthAdjust="spacingAndGlyphs">DKD</text>
<text x="1304.5" y="815.5" font-size="11.75" fill="#fff" text-anchor="middle" font-family="Liberation Sans" textLength="21.35" lengthAdjust="spacingAndGlyphs">DSV</text>
<text x="1353.5" y="815.5" font-size="11.75" fill="#fff" text-anchor="middle" font-family="Liberation Sans" textLength="17.57" lengthAdjust="spacingAndGlyphs">ALY</text>
<text x="1407.5" y="815.5" font-size="11.75" fill="#fff" text-anchor="middle" font-family="Liberation Sans" textLength="15.17" lengthAdjust="spacingAndGlyphs">JLE</text>
<text x="1471" y="815.5" font-size="11.75" fill="#fff" text-anchor="middle" font-family="Liberation Sans" textLength="20.76" lengthAdjust="spacingAndGlyphs">SCC</text>
<text x="1559.5" y="815.5" font-size="11.75" fill="#fff" text-anchor="middle" font-family="Liberation Sans" textLength="19.33" lengthAdjust="spacingAndGlyphs">FEV</text>
<text x="177" y="799.5" font-size="11.75" fill="#fff" text-anchor="middle" font-family="Liberation Sans" textLength="17.68" lengthAdjust="spacingAndGlyphs">LYR</text>
<text x="373" y="799.5" font-size="11.75" fill="#fff" text-anchor="middle" font-family="Liberation Sans" textLength="18.97" lengthAdjust="spacingAndGlyphs">JMC</text>
<text x="561.5" y="799.5" font-size="11.75" fill="#fff" text-anchor="middle" font-family="Liberation Sans" textLength="15.64" lengthAdjust="spacingAndGlyphs">JPE</text>
<text x="672" y="799.5" font-size="11.75" fill="#fff" text-anchor="middle" font-family="Liberation Sans" textLength="19.98" lengthAdjust="spacingAndGlyphs">PAU</text>
<text x="777.5" y="799.5" font-size="11.75" fill="#fff" text-anchor="middle" font-family="Liberation Sans" textLength="17.65" lengthAdjust="spacingAndGlyphs">NIA</text>
<text x="1049.5" y="799.5" font-size="11.75" fill="#fff" text-anchor="middle" font-family="Liberation Sans" textLength="18.93" lengthAdjust="spacingAndGlyphs">STA</text>
<text x="1204" y="799.5" font-size="11.75" fill="#fff" text-anchor="middle" font-family="Liberation Sans" textLength="23.74" lengthAdjust="spacingAndGlyphs">NOO</text>
<text x="1351" y="799.5" font-size="11.75" fill="#fff" text-anchor="middle" font-family="Liberation Sans" textLength="24.00" lengthAdjust="spacingAndGlyphs">COM</text>
<text x="1471" y="799.5" font-size="11.75" fill="#fff" text-anchor="middle" font-family="Liberation Sans" textLength="21.92" lengthAdjust="spacingAndGlyphs">NCC</text>
<text x="1564.5" y="799.5" font-size="11.75" fill="#fff" text-anchor="middle" font-family="Liberation Sans" textLength="20.21" lengthAdjust="spacingAndGlyphs">FED</text>
<text x="206" y="782.5" font-size="11.75" fill="#fff" text-anchor="middle" font-family="Liberation Sans" textLength="17.69" lengthAdjust="spacingAndGlyphs">HVI</text>
<text x="414.5" y="782.5" font-size="11.75" fill="#fff" text-anchor="middle" font-family="Liberation Sans" textLength="17.11" lengthAdjust="spacingAndGlyphs">ARI</text>
<text x="530" y="782.5" font-size="11.75" fill="#fff" text-anchor="middle" font-family="Liberation Sans" textLength="20.63" lengthAdjust="spacingAndGlyphs">SZC</text>
<text x="620.5" y="782.5" font-size="11.75" fill="#fff" text-anchor="middle" font-family="Liberation Sans" textLength="20.29" lengthAdjust="spacingAndGlyphs">CAP</text>
<text x="819" y="782.5" font-size="11.75" fill="#fff" text-anchor="middle" font-family="Liberation Sans" textLength="21.59" lengthAdjust="spacingAndGlyphs">NUE</text>
<text x="963.5" y="782.5" font-size="11.75" fill="#fff" text-anchor="middle" font-family="Liberation Sans" textLength="21.43" lengthAdjust="spacingAndGlyphs">OCT</text>
<text x="1057" y="782.5" font-size="11.75" fill="#fff" text-anchor="middle" font-family="Liberation Sans" textLength="18.16" lengthAdjust="spacingAndGlyphs">ORI</text>
<text x="1186.5" y="782.5" font-size="11.75" fill="#fff" text-anchor="middle" font-family="Liberation Sans" textLength="23.86" lengthAdjust="spacingAndGlyphs">AMO</text>
<text x="1255.5" y="782.5" font-size="11.75" fill="#fff" text-anchor="middle" font-family="Liberation Sans" textLength="21.17" lengthAdjust="spacingAndGlyphs">DPC</text>
<text x="1329" y="782.5" font-size="11.75" fill="#fff" text-anchor="middle" font-family="Liberation Sans" textLength="17.01" lengthAdjust="spacingAndGlyphs">XVI</text>
<text x="1407.5" y="782.5" font-size="11.75" fill="#fff" text-anchor="middle" font-family="Liberation Sans" textLength="22.52" lengthAdjust="spacingAndGlyphs">QUA</text>
<text x="1557" y="782.5" font-size="11.75" fill="#fff" text-anchor="middle" font-family="Liberation Sans" textLength="21.91" lengthAdjust="spacingAndGlyphs">AAN</text>
<text x="355.5" y="766.5" font-size="11.75" fill="#fff" text-anchor="middle" font-family="Liberation Sans" textLength="20.13" lengthAdjust="spacingAndGlyphs">TAH</text>
<text x="429" y="766.5" font-size="11.75" fill="#fff" text-anchor="middle" font-family="Liberation Sans" textLength="16.46" lengthAdjust="spacingAndGlyphs">JEA</text>
<text x="481" y="766.5" font-size="11.75" fill="#fff" text-anchor="middle" font-family="Liberation Sans" textLength="12.19" lengthAdjust="spacingAndGlyphs">JIP</text>
<text x="537" y="766.5" font-size="11.75" fill="#fff" text-anchor="middle" font-family="Liberation Sans" textLength="18.82" lengthAdjust="spacingAndGlyphs">PPS</text>
<text x="576.5" y="766.5" font-size="11.75" fill="#fff" text-anchor="middle" font-family="Liberation Sans" textLength="20.63" lengthAdjust="spacingAndGlyphs">ZCS</text>
<text x="632.5" y="766.5" font-size="11.75" fill="#fff" text-anchor="middle" font-family="Liberation Sans" textLength="22.89" lengthAdjust="spacingAndGlyphs">GDR</text>
<text x="973.5" y="766.5" font-size="11.75" fill="#fff" text-anchor="middle" font-family="Liberation Sans" textLength="21.55" lengthAdjust="spacingAndGlyphs">DRA</text>
<text x="1074" y="766.5" font-size="11.75" fill="#fff" text-anchor="middle" font-family="Liberation Sans" textLength="21.49" lengthAdjust="spacingAndGlyphs">LUM</text>
<text x="1113" y="766.5" font-size="11.75" fill="#fff" text-anchor="middle" font-family="Liberation Sans" textLength="20.75" lengthAdjust="spacingAndGlyphs">RPU</text>
<text x="1177" y="766.5" font-size="11.75" fill="#fff" text-anchor="middle" font-family="Liberation Sans" textLength="20.92" lengthAdjust="spacingAndGlyphs">THA</text>
<text x="1260.5" y="766.5" font-size="11.75" fill="#fff" text-anchor="middle" font-family="Liberation Sans" textLength="20.13" lengthAdjust="spacingAndGlyphs">PSU</text>
<text x="1468.5" y="766.5" font-size="11.75" fill="#fff" text-anchor="middle" font-family="Liberation Sans" textLength="20.41" lengthAdjust="spacingAndGlyphs">XCB</text>
<text x="432" y="749.5" font-size="11.75" fill="#fff" text-anchor="middle" font-family="Liberation Sans" textLength="16.74" lengthAdjust="spacingAndGlyphs">IRC</text>
<text x="544.5" y="749.5" font-size="11.75" fill="#fff" text-anchor="middle" font-family="Liberation Sans" textLength="21.77" lengthAdjust="spacingAndGlyphs">CAN</text>
<text x="579" y="749.5" font-size="11.75" fill="#fff" text-anchor="middle" font-family="Liberation Sans" textLength="19.58" lengthAdjust="spacingAndGlyphs">FAN</text>
<text x="682" y="749.5" font-size="11.75" fill="#fff" text-anchor="middle" font-family="Liberation Sans" textLength="19.72" lengthAdjust="spacingAndGlyphs">PER</text>
<text x="1052" y="749.5" font-size="11.75" fill="#fff" text-anchor="middle" font-family="Liberation Sans" textLength="19.58" lengthAdjust="spacingAndGlyphs">CTA</text>
<text x="1265.5" y="749.5" font-size="11.75" fill="#fff" text-anchor="middle" font-family="Liberation Sans" textLength="21.80" lengthAdjust="spacingAndGlyphs">HYD</text>
<text x="1481" y="749.5" font-size="11.75" fill="#fff" text-anchor="middle" font-family="Liberation Sans" textLength="23.30" lengthAdjust="spacingAndGlyphs">XUM</text>
<text x="441.5" y="733.5" font-size="11.75" fill="#fff" text-anchor="middle" font-family="Liberation Sans" textLength="22.28" lengthAdjust="spacingAndGlyphs">COR</text>
<text x="655" y="733.5" font-size="11.75" fill="#fff" text-anchor="middle" font-family="Liberation Sans" textLength="21.17" lengthAdjust="spacingAndGlyphs">SDA</text>
<text x="1049.5" y="733.5" font-size="11.75" fill="#fff" text-anchor="middle" font-family="Liberation Sans" textLength="17.53" lengthAdjust="spacingAndGlyphs">LMI</text>
<text x="1169.5" y="733.5" font-size="11.75" fill="#fff" text-anchor="middle" font-family="Liberation Sans" textLength="20.20" lengthAdjust="spacingAndGlyphs">LEO</text>
<text x="1277.5" y="733.5" font-size="11.75" fill="#fff" text-anchor="middle" font-family="Liberation Sans" textLength="20.39" lengthAdjust="spacingAndGlyphs">EHY</text>
<text x="1500.5" y="733.5" font-size="11.75" fill="#fff" text-anchor="middle" font-family="Liberation Sans" textLength="20.59" lengthAdjust="spacingAndGlyphs">ECV</text>
<text x="603.5" y="717.5" font-size="11.75" fill="#fff" text-anchor="middle" font-family="Liberation Sans" textLength="17.01" lengthAdjust="spacingAndGlyphs">JXA</text>
<text x="713.5" y="717.5" font-size="11.75" fill="#fff" text-anchor="middle" font-family="Liberation Sans" textLength="21.20" lengthAdjust="spacingAndGlyphs">KCG</text>
<text x="1157.5" y="717.5" font-size="11.75" fill="#fff" text-anchor="middle" font-family="Liberation Sans" textLength="22.51" lengthAdjust="spacingAndGlyphs">AND</text>
<text x="1275" y="717.5" font-size="11.75" fill="#fff" text-anchor="middle" font-family="Liberation Sans" textLength="22.55" lengthAdjust="spacingAndGlyphs">DAD</text>
<text x="664.5" y="700.5" font-size="11.75" fill="#fff" text-anchor="middle" font-family="Liberation Sans" textLength="16.57" lengthAdjust="spacingAndGlyphs">ERI</text>
<text x="1106" y="700.5" font-size="11.75" fill="#fff" text-anchor="middle" font-family="Liberation Sans" textLength="20.05" lengthAdjust="spacingAndGlyphs">SLD</text>
<text x="1211.5" y="700.5" font-size="11.75" fill="#fff" text-anchor="middle" font-family="Liberation Sans" textLength="21.64" lengthAdjust="spacingAndGlyphs">ORS</text>
<text x="1299.5" y="700.5" font-size="11.75" fill="#fff" text-anchor="middle" font-family="Liberation Sans" textLength="23.20" lengthAdjust="spacingAndGlyphs">GEM</text>
<text x="1123" y="684.5" font-size="11.75" fill="#fff" text-anchor="middle" font-family="Liberation Sans" textLength="22.73" lengthAdjust="spacingAndGlyphs">KUM</text>
<rect x="20.50" y="641.50" width="1764.00" height="201.00" fill="none" stroke="#fff" stroke-width="1.11"/>
<g stroke="#fff" stroke-width="1.11">
<line x1="20.50" y1="842.50" x2="20.50" y2="847.36"/>
<line x1="265.50" y1="842.50" x2="265.50" y2="847.36"/>
<line x1="510.50" y1="842.50" x2="510.50" y2="847.36"/>
<line x1="755.50" y1="842.50" x2="755.50" y2="847.36"/>
<line x1="1000.50" y1="842.50" x2="1000.50" y2="847.36"/>
<line x1="1245.50" y1="842.50" x2="1245.50" y2="847.36"/>
<line x1="1490.50" y1="842.50" x2="1490.50" y2="847.36"/>
<line x1="1735.50" y1="842.50" x2="1735.50" y2="847.36"/>
</g>
<text x="20.5" y="861.6" font-size="14.70" fill="#fff" text-anchor="middle" font-family="Liberation Sans" textLength="8.84" lengthAdjust="spacingAndGlyphs">0</text>
<text x="265.5" y="861.6" font-size="14.70" fill="#fff" text-anchor="middle" font-family="Liberation Sans" textLength="17.67" lengthAdjust="spacingAndGlyphs">50</text>
<text x="510.5" y="861.6" font-size="14.70" fill="#fff" text-anchor="middle" font-family="Liberation Sans" textLength="26.51" lengthAdjust="spacingAndGlyphs">100</text>
<text x="755.5" y="861.6" font-size="14.70" fill="#fff" text-anchor="middle" font-family="Liberation Sans" textLength="26.51" lengthAdjust="spacingAndGlyphs">150</text>
<text x="1000.5" y="861.6" font-size="14.70" fill="#fff" text-anchor="middle" font-family="Liberation Sans" textLength="26.51" lengthAdjust="spacingAndGlyphs">200</text>
<text x="1245.5" y="861.6" font-size="14.70" fill="#fff" text-anchor="middle" font-family="Liberation Sans" textLength="26.51" lengthAdjust="spacingAndGlyphs">250</text>
<text x="1490.5" y="861.6" font-size="14.70" fill="#fff" text-anchor="middle" font-family="Liberation Sans" textLength="26.51" lengthAdjust="spacingAndGlyphs">300</text>
<text x="1735.5" y="861.6" font-size="14.70" fill="#fff" text-anchor="middle" font-family="Liberation Sans" textLength="26.51" lengthAdjust="spacingAndGlyphs">350</text>
<text x="902.3" y="882" font-size="14.70" fill="#fff" text-anchor="middle" font-family="Liberation Sans" textLength="146.69" lengthAdjust="spacingAndGlyphs">Solar longitude (deg)</text>
</svg>
</body></html>
